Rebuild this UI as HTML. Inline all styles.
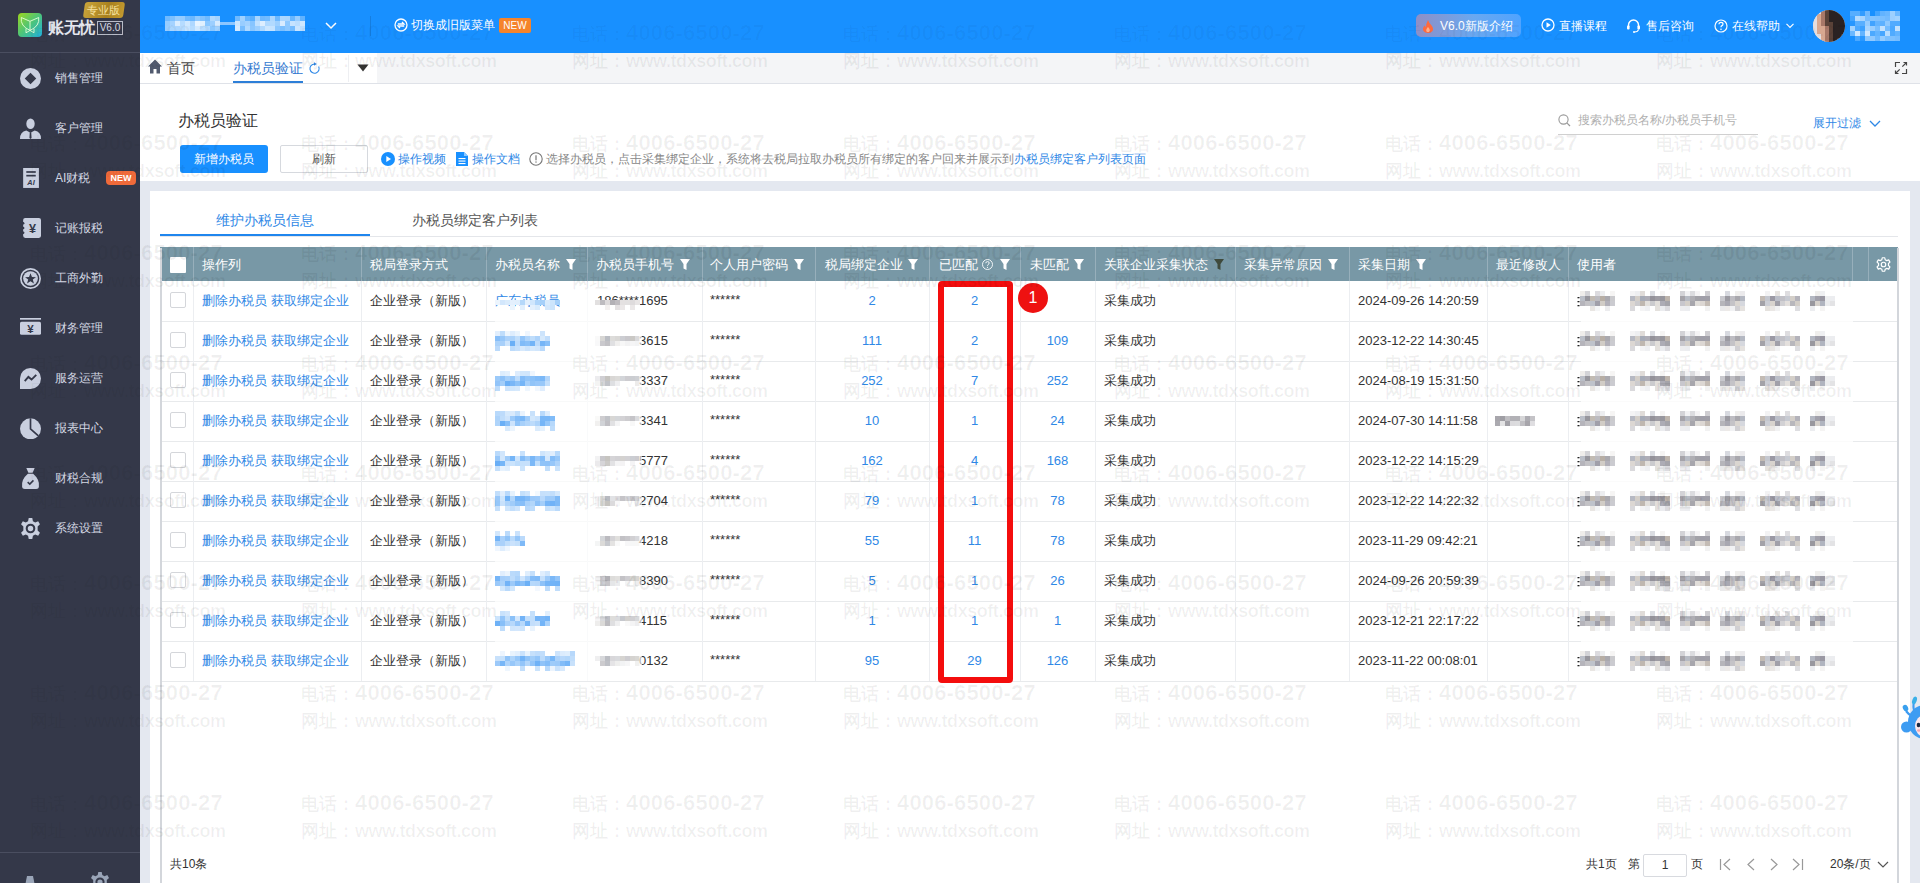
<!DOCTYPE html><html><head><meta charset="utf-8"><style>
*{box-sizing:border-box}
html,body{margin:0;padding:0;width:1920px;height:883px;overflow:hidden;background:#fff;font-family:"Liberation Sans",sans-serif;color:#333}
.ab{position:absolute;white-space:nowrap}
.t12{font-size:12px;line-height:20px}
.t13{font-size:13px;line-height:20px}
.t14{font-size:14px;line-height:20px}
.wm{position:absolute;color:rgba(0,0,0,0.07);font-weight:bold;font-size:18px;line-height:28px;white-space:nowrap;pointer-events:none}
</style></head><body>
<div class="ab" style="left:0;top:0;width:140px;height:883px;background:#343849"></div>
<div class="ab" style="left:0;top:52px;width:140px;height:1px;background:#4a4e60"></div>
<div class="ab" style="left:0;top:852px;width:140px;height:1px;background:#4a4e60"></div>
<svg class="ab" style="left:18px;top:13px" width="24" height="24" viewBox="0 0 24 24">
<defs><linearGradient id="lg" x1="0" y1="0" x2="1" y2="1"><stop offset="0" stop-color="#9ed61c"/><stop offset="0.5" stop-color="#4cc47a"/><stop offset="1" stop-color="#1fb0e0"/></linearGradient></defs>
<rect x="0" y="0" width="24" height="24" rx="4" fill="url(#lg)"/>
<path d="M3.3 4.5 L12 8.3 L20.7 4.5 Q22 13 12 17.4 Q2 13 3.3 4.5 Z M12 8.3 V17.4 M8 15.5 L8 19.8 L12 17.4 L16 19.8 L16 15.5" fill="none" stroke="#e6ffd8" stroke-width="0.9" stroke-linejoin="round"/>
</svg>
<div class="ab" style="left:48px;top:17px;font-size:16px;line-height:22px;color:#e4e6ee;letter-spacing:-0.5px;font-weight:bold">账无忧</div>
<div class="ab" style="left:97px;top:21px;width:26px;height:14px;border:1px solid #b8bcc8;font-size:10px;line-height:12px;color:#d8dbe4;text-align:center">V6.0</div>
<div class="ab" style="left:84px;top:2px;width:40px;height:16px;background:linear-gradient(100deg,#c9a43a,#a8801e 60%,#c49b30);border-radius:3px;transform:skewX(-8deg)"></div>
<div class="ab" style="left:86px;top:2px;width:34px;font-size:11px;line-height:16px;color:#f6e2a0;text-align:center">专业版</div>
<svg class="ab" style="left:20px;top:68px" width="21" height="21" viewBox="0 0 20 20"><circle cx="10" cy="10" r="10" fill="#c9cfdf"/><path d="M10 4.5 L15.5 10 L10 15.5 L4.5 10Z" fill="#343849"/></svg>
<div class="ab t12" style="left:55px;top:68px;color:#d4d8e4">销售管理</div>
<svg class="ab" style="left:20px;top:118px" width="21" height="21" viewBox="0 0 20 20"><ellipse cx="10" cy="5.5" rx="4" ry="5" fill="#c9cfdf"/><path d="M0 20 Q0 13 6 12 L10 14 L14 12 Q20 13 20 20 Z" fill="#c9cfdf"/><path d="M9.3 13.5 L10.7 13.5 L11 19 L10 20 L9 19Z" fill="#343849"/></svg>
<div class="ab t12" style="left:55px;top:118px;color:#d4d8e4">客户管理</div>
<svg class="ab" style="left:20px;top:168px" width="21" height="21" viewBox="0 0 20 20"><rect x="3" y="0" width="15" height="19" fill="#c9cfdf"/><rect x="6" y="3" width="9" height="1.6" fill="#343849"/><rect x="6" y="6.5" width="9" height="1.6" fill="#343849"/><text x="10.5" y="16" font-size="7" font-weight="bold" font-style="italic" text-anchor="middle" fill="#343849" font-family="Liberation Sans">AI</text></svg>
<div class="ab t12" style="left:55px;top:168px;color:#d4d8e4">AI财税</div>
<svg class="ab" style="left:20px;top:218px" width="21" height="21" viewBox="0 0 20 20"><rect x="3" y="0" width="17" height="19" rx="2" fill="#c9cfdf"/><circle cx="3" cy="5" r="1.2" fill="#343849"/><circle cx="3" cy="9.5" r="1.2" fill="#343849"/><circle cx="3" cy="14" r="1.2" fill="#343849"/><text x="12" y="14.5" font-size="12" font-weight="bold" text-anchor="middle" fill="#343849" font-family="Liberation Sans">¥</text></svg>
<div class="ab t12" style="left:55px;top:218px;color:#d4d8e4">记账报税</div>
<svg class="ab" style="left:20px;top:268px" width="21" height="21" viewBox="0 0 20 20"><circle cx="10" cy="10" r="9.2" fill="none" stroke="#c9cfdf" stroke-width="1.6"/><circle cx="10" cy="10" r="7" fill="#c9cfdf"/><path d="M10 5 L11.4 8.6 L15.2 8.7 L12.2 11 L13.3 14.8 L10 12.6 L6.7 14.8 L7.8 11 L4.8 8.7 L8.6 8.6Z" fill="#343849"/></svg>
<div class="ab t12" style="left:55px;top:268px;color:#d4d8e4">工商外勤</div>
<svg class="ab" style="left:20px;top:318px" width="21" height="21" viewBox="0 0 20 20"><rect x="0" y="0" width="20" height="1.6" fill="#c9cfdf"/><rect x="0" y="3.5" width="20" height="12.5" rx="1.5" fill="#c9cfdf"/><text x="10" y="14" font-size="11" font-weight="bold" text-anchor="middle" fill="#343849" font-family="Liberation Sans">¥</text></svg>
<div class="ab t12" style="left:55px;top:318px;color:#d4d8e4">财务管理</div>
<svg class="ab" style="left:20px;top:368px" width="21" height="21" viewBox="0 0 20 20"><path d="M10 0 A10 10 0 1 1 10 20 L0 20 L0 10 A10 10 0 0 1 10 0Z" fill="#c9cfdf"/><path d="M4.5 12.5 L8 8.5 L11 11 L15.5 6.5" fill="none" stroke="#343849" stroke-width="1.8"/></svg>
<div class="ab t12" style="left:55px;top:368px;color:#d4d8e4">服务运营</div>
<svg class="ab" style="left:20px;top:418px" width="21" height="21" viewBox="0 0 20 20"><circle cx="10" cy="10.3" r="10" fill="#c9cfdf"/><path d="M10 0.3 V10.3 L17.5 17" fill="none" stroke="#343849" stroke-width="1.6"/></svg>
<div class="ab t12" style="left:55px;top:418px;color:#d4d8e4">报表中心</div>
<svg class="ab" style="left:20px;top:468px" width="21" height="21" viewBox="0 0 20 20"><path d="M6 0 H14 L12 4.5 H8 Z" fill="#c9cfdf"/><path d="M7.5 5.5 H12.5 Q19 11 18 18 Q17.8 20 15.5 20 H4.5 Q2.2 20 2 18 Q1 11 7.5 5.5Z" fill="#c9cfdf"/><path d="M7.3 13.5 L9.3 15.3 L12.8 11.8" fill="none" stroke="#343849" stroke-width="1.5"/></svg>
<div class="ab t12" style="left:55px;top:468px;color:#d4d8e4">财税合规</div>
<svg class="ab" style="left:20px;top:518px" width="21" height="21" viewBox="0 0 20 20"><path d="M8.3 0 H11.7 L12.3 3 L14.5 4.2 L17.3 3.1 L19 6 L16.8 8 V12 L19 14 L17.3 16.9 L14.5 15.8 L12.3 17 L11.7 20 H8.3 L7.7 17 L5.5 15.8 L2.7 16.9 L1 14 L3.2 12 V8 L1 6 L2.7 3.1 L5.5 4.2 L7.7 3Z" fill="#c9cfdf"/><circle cx="10" cy="10" r="3.6" fill="none" stroke="#343849" stroke-width="2"/></svg>
<div class="ab t12" style="left:55px;top:518px;color:#d4d8e4">系统设置</div>
<div class="ab" style="left:106px;top:171px;width:30px;height:14px;background:#ef6a3a;border-radius:4px;color:#fff;font-size:9px;line-height:14px;font-weight:bold;text-align:center">NEW</div>
<svg class="ab" style="left:22px;top:874px" width="16" height="12" viewBox="0 0 16 12"><path d="M5 2 H11 L13 12 H3Z" fill="#9aa5b8"/></svg>
<svg class="ab" style="left:90px;top:872px" width="20" height="20" viewBox="0 0 20 20"><path d="M8.3 0 H11.7 L12.3 3 L14.5 4.2 L17.3 3.1 L19 6 L16.8 8 V12 L19 14 L17.3 16.9 L14.5 15.8 L12.3 17 L11.7 20 H8.3 L7.7 17 L5.5 15.8 L2.7 16.9 L1 14 L3.2 12 V8 L1 6 L2.7 3.1 L5.5 4.2 L7.7 3Z" fill="#9aa5b8"/><circle cx="10" cy="10" r="3.6" fill="none" stroke="#343849" stroke-width="2"/></svg>
<div class="ab" style="left:140px;top:0;width:1780px;height:53px;background:#1890ff"></div>
<svg class="ab" style="left:165px;top:16px" width="55" height="15" shape-rendering="crispEdges"><rect x="0" y="0" width="5" height="5" fill="#70baff"/><rect x="5" y="0" width="5" height="5" fill="#7ec1ff"/><rect x="10" y="0" width="5" height="5" fill="#98cdff"/><rect x="15" y="0" width="5" height="5" fill="#96ccff"/><rect x="20" y="0" width="5" height="5" fill="#73bbff"/><rect x="25" y="0" width="5" height="5" fill="#6cb8ff"/><rect x="30" y="0" width="5" height="5" fill="#8fc9ff"/><rect x="35" y="0" width="5" height="5" fill="#81c2ff"/><rect x="40" y="0" width="5" height="5" fill="#70baff"/><rect x="45" y="0" width="5" height="5" fill="#b0d9ff"/><rect x="50" y="0" width="5" height="5" fill="#a4d3ff"/><rect x="0" y="5" width="5" height="5" fill="#97cdff"/><rect x="5" y="5" width="5" height="5" fill="#a5d3ff"/><rect x="10" y="5" width="5" height="5" fill="#daedff"/><rect x="15" y="5" width="5" height="5" fill="#b6dcff"/><rect x="20" y="5" width="5" height="5" fill="#cfe8ff"/><rect x="25" y="5" width="5" height="5" fill="#afd8ff"/><rect x="30" y="5" width="5" height="5" fill="#e8f4ff"/><rect x="35" y="5" width="5" height="5" fill="#e0f0ff"/><rect x="40" y="5" width="5" height="5" fill="#8ac7ff"/><rect x="45" y="5" width="5" height="5" fill="#9ccfff"/><rect x="50" y="5" width="5" height="5" fill="#d6ebff"/><rect x="0" y="10" width="5" height="5" fill="#9aceff"/><rect x="5" y="10" width="5" height="5" fill="#aad6ff"/><rect x="10" y="10" width="5" height="5" fill="#abd6ff"/><rect x="15" y="10" width="5" height="5" fill="#b5dbff"/><rect x="20" y="10" width="5" height="5" fill="#c6e4ff"/><rect x="25" y="10" width="5" height="5" fill="#b6dcff"/><rect x="30" y="10" width="5" height="5" fill="#d1e9ff"/><rect x="35" y="10" width="5" height="5" fill="#b8ddff"/><rect x="40" y="10" width="5" height="5" fill="#b0d9ff"/><rect x="45" y="10" width="5" height="5" fill="#8cc8ff"/><rect x="50" y="10" width="5" height="5" fill="#a0d1ff"/></svg>
<div class="ab" style="left:220px;top:22px;width:15px;height:3px;background:#8cc6ff"></div>
<svg class="ab" style="left:235px;top:16px" width="70" height="15" shape-rendering="crispEdges"><rect x="0" y="0" width="5" height="5" fill="#70baff"/><rect x="5" y="0" width="5" height="5" fill="#a1d2ff"/><rect x="10" y="0" width="5" height="5" fill="#68b6ff"/><rect x="15" y="0" width="5" height="5" fill="#5ab0ff"/><rect x="20" y="0" width="5" height="5" fill="#aad6ff"/><rect x="25" y="0" width="5" height="5" fill="#6fb9ff"/><rect x="30" y="0" width="5" height="5" fill="#74bcff"/><rect x="35" y="0" width="5" height="5" fill="#acd7ff"/><rect x="40" y="0" width="5" height="5" fill="#6eb9ff"/><rect x="45" y="0" width="5" height="5" fill="#acd7ff"/><rect x="50" y="0" width="5" height="5" fill="#aad6ff"/><rect x="55" y="0" width="5" height="5" fill="#69b7ff"/><rect x="60" y="0" width="5" height="5" fill="#98cdff"/><rect x="65" y="0" width="5" height="5" fill="#61b3ff"/><rect x="0" y="5" width="5" height="5" fill="#cbe6ff"/><rect x="5" y="5" width="5" height="5" fill="#98cdff"/><rect x="10" y="5" width="5" height="5" fill="#a3d2ff"/><rect x="15" y="5" width="5" height="5" fill="#87c5ff"/><rect x="20" y="5" width="5" height="5" fill="#c1e1ff"/><rect x="25" y="5" width="5" height="5" fill="#ddeeff"/><rect x="30" y="5" width="5" height="5" fill="#b0d9ff"/><rect x="35" y="5" width="5" height="5" fill="#b2daff"/><rect x="40" y="5" width="5" height="5" fill="#9ed0ff"/><rect x="45" y="5" width="5" height="5" fill="#d9ecff"/><rect x="50" y="5" width="5" height="5" fill="#8fc9ff"/><rect x="55" y="5" width="5" height="5" fill="#c6e3ff"/><rect x="60" y="5" width="5" height="5" fill="#bbdeff"/><rect x="65" y="5" width="5" height="5" fill="#cee7ff"/><rect x="0" y="10" width="5" height="5" fill="#d5eaff"/><rect x="5" y="10" width="5" height="5" fill="#76bdff"/><rect x="10" y="10" width="5" height="5" fill="#b0d9ff"/><rect x="15" y="10" width="5" height="5" fill="#8bc7ff"/><rect x="20" y="10" width="5" height="5" fill="#9ccfff"/><rect x="25" y="10" width="5" height="5" fill="#b0d9ff"/><rect x="30" y="10" width="5" height="5" fill="#cbe6ff"/><rect x="35" y="10" width="5" height="5" fill="#c5e3ff"/><rect x="40" y="10" width="5" height="5" fill="#8bc7ff"/><rect x="45" y="10" width="5" height="5" fill="#7cc0ff"/><rect x="50" y="10" width="5" height="5" fill="#8dc8ff"/><rect x="55" y="10" width="5" height="5" fill="#74bcff"/><rect x="60" y="10" width="5" height="5" fill="#cae5ff"/><rect x="65" y="10" width="5" height="5" fill="#badeff"/></svg>
<svg class="ab" style="left:325px;top:22px" width="12" height="8" viewBox="0 0 12 8"><path d="M1 1 L6 6 L11 1" fill="none" stroke="#fff" stroke-width="1.5"/></svg>
<div class="ab" style="left:370px;top:16px;width:1px;height:20px;background:rgba(0,0,0,0.12)"></div>
<svg class="ab" style="left:394px;top:18px" width="14" height="14" viewBox="0 0 14 14"><circle cx="7" cy="7" r="6" fill="none" stroke="#fff" stroke-width="1.3"/><path d="M3.8 6 H10 L8 4 M10.2 8 H4 L6 10" fill="none" stroke="#fff" stroke-width="1.3"/></svg>
<div class="ab t12" style="left:411px;top:15px;color:#fff">切换成旧版菜单</div>
<div class="ab" style="left:499px;top:18px;width:32px;height:15px;background:#f5842b;border-radius:2px;color:#fff;font-size:10px;line-height:15px;text-align:center">NEW</div>
<div class="ab" style="left:1416px;top:14px;width:105px;height:23px;border-radius:5px;background:linear-gradient(90deg,#8e8fc6,#6aa8f0 55%,#4fa3ff)"></div>
<svg class="ab" style="left:1422px;top:20px" width="12" height="13" viewBox="0 0 12 13"><path d="M6 0 Q7 3 9.5 5.5 Q12 8.5 10.5 11 Q9 13 6 13 Q3 13 1.5 11 Q0 8.5 2.5 5.5 Q3.5 6.5 4 7.5 Q4 3.5 6 0Z" fill="#ff6a3d"/><path d="M6 7 Q8.5 9.5 7.5 11.5 Q6 12.5 4.5 11.5 Q3.5 9.5 6 7Z" fill="#ffb08a"/></svg>
<div class="ab t12" style="left:1440px;top:16px;color:#fff">V6.0新版介绍</div>
<svg class="ab" style="left:1541px;top:18px" width="14" height="14" viewBox="0 0 14 14"><circle cx="7" cy="7" r="6" fill="none" stroke="#fff" stroke-width="1.3"/><path d="M5.5 4.3 L9.8 7 L5.5 9.7Z" fill="#fff"/></svg>
<div class="ab t12" style="left:1559px;top:16px;color:#fff">直播课程</div>
<svg class="ab" style="left:1626px;top:19px" width="15" height="14" viewBox="0 0 15 14"><path d="M2.5 8 V6 A5 5 0 0 1 12.5 6 V8" fill="none" stroke="#fff" stroke-width="1.4"/><rect x="1" y="6.5" width="2.6" height="4" rx="1" fill="#fff"/><rect x="11.4" y="6.5" width="2.6" height="4" rx="1" fill="#fff"/><path d="M12.5 10.5 Q12 13 8.5 13" fill="none" stroke="#fff" stroke-width="1.2"/><circle cx="8" cy="13" r="1" fill="#fff"/></svg>
<div class="ab t12" style="left:1646px;top:16px;color:#fff">售后咨询</div>
<svg class="ab" style="left:1714px;top:19px" width="14" height="14" viewBox="0 0 14 14"><circle cx="7" cy="7" r="6" fill="none" stroke="#fff" stroke-width="1.2"/><path d="M5 5.3 Q5 3.4 7 3.4 Q9 3.4 9 5.1 Q9 6.3 7.6 6.9 Q7 7.2 7 8.3" fill="none" stroke="#fff" stroke-width="1.2"/><circle cx="7" cy="10.2" r="0.8" fill="#fff"/></svg>
<div class="ab t12" style="left:1732px;top:16px;color:#fff">在线帮助</div>
<svg class="ab" style="left:1786px;top:23px" width="8" height="6" viewBox="0 0 8 6"><path d="M0.5 0.8 L4 4.5 L7.5 0.8" fill="none" stroke="#fff" stroke-width="1.2"/></svg>
<svg class="ab" style="left:1813px;top:10px" width="32" height="32" shape-rendering="crispEdges"><defs><clipPath id="avc"><circle cx="16" cy="16" r="16"/></clipPath></defs><g clip-path="url(#avc)"><rect width="32" height="32" fill="#e6e2e2"/><rect x="0" y="0" width="4" height="4" fill="#e6dede"/><rect x="4" y="0" width="4" height="4" fill="#e6dede"/><rect x="8" y="0" width="4" height="4" fill="#a87868"/><rect x="12" y="0" width="4" height="4" fill="#5a4238"/><rect x="16" y="0" width="4" height="4" fill="#2a2222"/><rect x="20" y="0" width="4" height="4" fill="#2a2222"/><rect x="24" y="0" width="4" height="4" fill="#2a2222"/><rect x="28" y="0" width="4" height="4" fill="#2a2222"/><rect x="0" y="4" width="4" height="4" fill="#e6dede"/><rect x="4" y="4" width="4" height="4" fill="#d8a890"/><rect x="8" y="4" width="4" height="4" fill="#a87868"/><rect x="12" y="4" width="4" height="4" fill="#5a4238"/><rect x="16" y="4" width="4" height="4" fill="#2a2222"/><rect x="20" y="4" width="4" height="4" fill="#2a2222"/><rect x="24" y="4" width="4" height="4" fill="#2a2222"/><rect x="28" y="4" width="4" height="4" fill="#2a2222"/><rect x="0" y="8" width="4" height="4" fill="#e6dede"/><rect x="4" y="8" width="4" height="4" fill="#d8a890"/><rect x="8" y="8" width="4" height="4" fill="#a87868"/><rect x="12" y="8" width="4" height="4" fill="#5a4238"/><rect x="16" y="8" width="4" height="4" fill="#2a2222"/><rect x="20" y="8" width="4" height="4" fill="#2a2222"/><rect x="24" y="8" width="4" height="4" fill="#2a2222"/><rect x="28" y="8" width="4" height="4" fill="#2a2222"/><rect x="0" y="12" width="4" height="4" fill="#e6dede"/><rect x="4" y="12" width="4" height="4" fill="#d8a890"/><rect x="8" y="12" width="4" height="4" fill="#a87868"/><rect x="12" y="12" width="4" height="4" fill="#5a4238"/><rect x="16" y="12" width="4" height="4" fill="#5a4238"/><rect x="20" y="12" width="4" height="4" fill="#2a2222"/><rect x="24" y="12" width="4" height="4" fill="#2a2222"/><rect x="28" y="12" width="4" height="4" fill="#2a2222"/><rect x="0" y="16" width="4" height="4" fill="#e6dede"/><rect x="4" y="16" width="4" height="4" fill="#d8a890"/><rect x="8" y="16" width="4" height="4" fill="#d8a890"/><rect x="12" y="16" width="4" height="4" fill="#a87868"/><rect x="16" y="16" width="4" height="4" fill="#5a4238"/><rect x="20" y="16" width="4" height="4" fill="#2a2222"/><rect x="24" y="16" width="4" height="4" fill="#2a2222"/><rect x="28" y="16" width="4" height="4" fill="#2a2222"/><rect x="0" y="20" width="4" height="4" fill="#e6dede"/><rect x="4" y="20" width="4" height="4" fill="#d8a890"/><rect x="8" y="20" width="4" height="4" fill="#d8a890"/><rect x="12" y="20" width="4" height="4" fill="#a87868"/><rect x="16" y="20" width="4" height="4" fill="#5a4238"/><rect x="20" y="20" width="4" height="4" fill="#2a2222"/><rect x="24" y="20" width="4" height="4" fill="#2a2222"/><rect x="28" y="20" width="4" height="4" fill="#2a2222"/><rect x="0" y="24" width="4" height="4" fill="#e6dede"/><rect x="4" y="24" width="4" height="4" fill="#e6dede"/><rect x="8" y="24" width="4" height="4" fill="#d8a890"/><rect x="12" y="24" width="4" height="4" fill="#a87868"/><rect x="16" y="24" width="4" height="4" fill="#5a4238"/><rect x="20" y="24" width="4" height="4" fill="#2a2222"/><rect x="24" y="24" width="4" height="4" fill="#2a2222"/><rect x="28" y="24" width="4" height="4" fill="#3c3434"/><rect x="0" y="28" width="4" height="4" fill="#e6dede"/><rect x="4" y="28" width="4" height="4" fill="#e6dede"/><rect x="8" y="28" width="4" height="4" fill="#d8a890"/><rect x="12" y="28" width="4" height="4" fill="#a87868"/><rect x="16" y="28" width="4" height="4" fill="#5a4238"/><rect x="20" y="28" width="4" height="4" fill="#2a2222"/><rect x="24" y="28" width="4" height="4" fill="#3c3434"/><rect x="28" y="28" width="4" height="4" fill="#3c3434"/></g></svg>
<svg class="ab" style="left:1850px;top:11px" width="50" height="30" shape-rendering="crispEdges"><rect x="0" y="0" width="5" height="5" fill="#56aeff"/><rect x="5" y="0" width="5" height="5" fill="#56aeff"/><rect x="10" y="0" width="5" height="5" fill="#319cff"/><rect x="15" y="0" width="5" height="5" fill="#6fb9ff"/><rect x="25" y="0" width="5" height="5" fill="#42a4ff"/><rect x="30" y="0" width="5" height="5" fill="#62b3ff"/><rect x="35" y="0" width="5" height="5" fill="#6ab7ff"/><rect x="40" y="0" width="5" height="5" fill="#9dd0ff"/><rect x="45" y="0" width="5" height="5" fill="#6eb9ff"/><rect x="0" y="5" width="5" height="5" fill="#42a4ff"/><rect x="5" y="5" width="5" height="5" fill="#b4dbff"/><rect x="10" y="5" width="5" height="5" fill="#a6d4ff"/><rect x="15" y="5" width="5" height="5" fill="#77bdff"/><rect x="20" y="5" width="5" height="5" fill="#82c3ff"/><rect x="25" y="5" width="5" height="5" fill="#7fc1ff"/><rect x="30" y="5" width="5" height="5" fill="#7abfff"/><rect x="35" y="5" width="5" height="5" fill="#73bbff"/><rect x="40" y="5" width="5" height="5" fill="#9ccfff"/><rect x="45" y="5" width="5" height="5" fill="#a3d3ff"/><rect x="0" y="10" width="5" height="5" fill="#2797ff"/><rect x="5" y="10" width="5" height="5" fill="#5bb0ff"/><rect x="10" y="10" width="5" height="5" fill="#59afff"/><rect x="15" y="10" width="5" height="5" fill="#98cdff"/><rect x="20" y="10" width="5" height="5" fill="#41a3ff"/><rect x="25" y="10" width="5" height="5" fill="#64b4ff"/><rect x="30" y="10" width="5" height="5" fill="#5db1ff"/><rect x="35" y="10" width="5" height="5" fill="#8fc9ff"/><rect x="40" y="10" width="5" height="5" fill="#52abff"/><rect x="45" y="10" width="5" height="5" fill="#51abff"/><rect x="0" y="15" width="5" height="5" fill="#a3d3ff"/><rect x="5" y="15" width="5" height="5" fill="#4da9ff"/><rect x="10" y="15" width="5" height="5" fill="#3ca1ff"/><rect x="15" y="15" width="5" height="5" fill="#a9d5ff"/><rect x="20" y="15" width="5" height="5" fill="#99ceff"/><rect x="25" y="15" width="5" height="5" fill="#78beff"/><rect x="30" y="15" width="5" height="5" fill="#c3e2ff"/><rect x="35" y="15" width="5" height="5" fill="#74bcff"/><rect x="40" y="15" width="5" height="5" fill="#4aa8ff"/><rect x="45" y="15" width="5" height="5" fill="#c3e2ff"/><rect x="0" y="20" width="5" height="5" fill="#6bb8ff"/><rect x="5" y="20" width="5" height="5" fill="#d0e8ff"/><rect x="10" y="20" width="5" height="5" fill="#63b4ff"/><rect x="15" y="20" width="5" height="5" fill="#d0e8ff"/><rect x="20" y="20" width="5" height="5" fill="#4ca9ff"/><rect x="25" y="20" width="5" height="5" fill="#63b4ff"/><rect x="30" y="20" width="5" height="5" fill="#47a6ff"/><rect x="35" y="20" width="5" height="5" fill="#b9ddff"/><rect x="40" y="20" width="5" height="5" fill="#50abff"/><rect x="45" y="20" width="5" height="5" fill="#63b4ff"/><rect x="5" y="25" width="5" height="5" fill="#4ba8ff"/><rect x="10" y="25" width="5" height="5" fill="#2998ff"/><rect x="15" y="25" width="5" height="5" fill="#8bc7ff"/><rect x="20" y="25" width="5" height="5" fill="#90c9ff"/><rect x="25" y="25" width="5" height="5" fill="#6eb9ff"/><rect x="30" y="25" width="5" height="5" fill="#95ccff"/><rect x="35" y="25" width="5" height="5" fill="#7cc0ff"/><rect x="40" y="25" width="5" height="5" fill="#7ec1ff"/><rect x="45" y="25" width="5" height="5" fill="#77bdff"/></svg>
<div class="ab" style="left:140px;top:53px;width:1780px;height:31px;background:#f4f5f7"></div>
<div class="ab" style="left:140px;top:53px;width:237px;height:30px;background:#fff"></div>
<div class="ab" style="left:348px;top:55px;width:1px;height:27px;background:#eeeff2"></div>
<div class="ab" style="left:140px;top:83px;width:1780px;height:1px;background:#dfe2e8"></div>
<svg class="ab" style="left:148px;top:59px" width="14" height="15" viewBox="0 0 14 15"><path d="M7 0.5 L14 7.5 H12 V14.5 H8.5 V10 H5.5 V14.5 H2 V7.5 H0Z" fill="#515a6e"/></svg>
<div class="ab t14" style="left:167px;top:58px;color:#444">首页</div>
<div class="ab t14" style="left:233px;top:58px;color:#3479d0">办税员验证</div>
<div class="ab" style="left:233px;top:81px;width:70px;height:2px;background:#2d7fd8"></div>
<svg class="ab" style="left:308px;top:62px" width="13" height="13" viewBox="0 0 13 13"><path d="M6.5 2 A4.6 4.6 0 1 0 10.6 4.4" fill="none" stroke="#2f88e6" stroke-width="1.1"/><path d="M6 0.2 L8.8 2 L6 3.8Z" fill="#2f88e6"/></svg>
<svg class="ab" style="left:357px;top:64px" width="12" height="8" viewBox="0 0 12 8"><path d="M0.5 0.5 H11.5 L6 7.5Z" fill="#333"/></svg>
<svg class="ab" style="left:1894px;top:61px" width="14" height="14" viewBox="0 0 14 14"><path d="M1.5 6 V1.5 H6 M12.5 8 V12.5 H8 M8.3 5.7 L12.5 1.5 M9.5 1.5 H12.5 V4.5 M5.7 8.3 L1.5 12.5 M1.5 9.5 V12.5 H4.5" fill="none" stroke="#444" stroke-width="1.2"/></svg>
<div class="ab" style="left:178px;top:110px;font-size:16px;line-height:22px;color:#333">办税员验证</div>
<div class="ab" style="left:180px;top:145px;width:88px;height:28px;background:#1890ff;border-radius:3px;color:#fff;font-size:12px;line-height:28px;text-align:center">新增办税员</div>
<div class="ab" style="left:280px;top:145px;width:88px;height:28px;border:1px solid #d6d9de;border-radius:2px;background:#fff;color:#555;font-size:12px;line-height:26px;text-align:center">刷新</div>
<svg class="ab" style="left:381px;top:152px" width="14" height="14" viewBox="0 0 14 14"><circle cx="7" cy="7" r="7" fill="#1890ff"/><path d="M5.3 4 L10 7 L5.3 10Z" fill="#fff"/></svg>
<div class="ab t12" style="left:398px;top:149px;color:#2f88e6">操作视频</div>
<svg class="ab" style="left:456px;top:152px" width="12" height="14" viewBox="0 0 12 14"><path d="M0 0 H8 L12 4 V14 H0Z" fill="#1890ff"/><path d="M8 0 V4 H12" fill="#8cc8ff"/><rect x="2.5" y="6" width="7" height="1.1" fill="#fff"/><rect x="2.5" y="8.5" width="7" height="1.1" fill="#fff"/><rect x="2.5" y="11" width="7" height="1.1" fill="#fff"/></svg>
<div class="ab t12" style="left:472px;top:149px;color:#2f88e6">操作文档</div>
<svg class="ab" style="left:529px;top:152px" width="14" height="14" viewBox="0 0 14 14"><circle cx="7" cy="7" r="6.2" fill="none" stroke="#777" stroke-width="1.1"/><rect x="6.4" y="3.3" width="1.2" height="5" fill="#777"/><rect x="6.4" y="9.4" width="1.2" height="1.3" fill="#777"/></svg>
<div class="ab t12" style="left:546px;top:149px;color:#888">选择办税员，点击采集绑定企业，系统将去税局拉取办税员所有绑定的客户回来并展示到<span style="color:#2f88e6">办税员绑定客户列表页面</span></div>
<svg class="ab" style="left:1558px;top:114px" width="13" height="13" viewBox="0 0 13 13"><circle cx="5.5" cy="5.5" r="4.6" fill="none" stroke="#999" stroke-width="1.1"/><path d="M8.8 8.8 L12 12" stroke="#999" stroke-width="1.2"/></svg>
<div class="ab t12" style="left:1578px;top:110px;color:#b0b0b0">搜索办税员名称/办税员手机号</div>
<div class="ab" style="left:1558px;top:134px;width:200px;height:1px;background:#d0d0d0"></div>
<div class="ab t12" style="left:1813px;top:113px;color:#2f88e6">展开过滤</div>
<svg class="ab" style="left:1869px;top:120px" width="12" height="8" viewBox="0 0 12 8"><path d="M1 1 L6 6 L11 1" fill="none" stroke="#2f88e6" stroke-width="1.3"/></svg>
<div class="ab" style="left:140px;top:181px;width:1780px;height:702px;background:#e4e8f0"></div>
<div class="ab" style="left:150px;top:191px;width:1760px;height:692px;background:#fff"></div>
<div class="ab t14" style="left:160px;top:210px;width:210px;text-align:center;color:#2f88e6">维护办税员信息</div>
<div class="ab t14" style="left:370px;top:210px;width:210px;text-align:center;color:#555">办税员绑定客户列表</div>
<div class="ab" style="left:160px;top:236px;width:1738px;height:1px;background:#e4e6ea"></div>
<div class="ab" style="left:160px;top:234px;width:210px;height:2px;background:#1f86ee"></div>
<div class="ab" style="left:160px;top:247px;width:1738px;height:34px;background:#7898a6"></div>
<div class="ab" style="left:193px;top:247px;width:1px;height:34px;background:#97afbb"></div>
<div class="ab" style="left:361px;top:247px;width:1px;height:34px;background:#97afbb"></div>
<div class="ab" style="left:486px;top:247px;width:1px;height:34px;background:#97afbb"></div>
<div class="ab" style="left:587px;top:247px;width:1px;height:34px;background:#97afbb"></div>
<div class="ab" style="left:702px;top:247px;width:1px;height:34px;background:#97afbb"></div>
<div class="ab" style="left:815px;top:247px;width:1px;height:34px;background:#97afbb"></div>
<div class="ab" style="left:929px;top:247px;width:1px;height:34px;background:#97afbb"></div>
<div class="ab" style="left:1020px;top:247px;width:1px;height:34px;background:#97afbb"></div>
<div class="ab" style="left:1095px;top:247px;width:1px;height:34px;background:#97afbb"></div>
<div class="ab" style="left:1235px;top:247px;width:1px;height:34px;background:#97afbb"></div>
<div class="ab" style="left:1349px;top:247px;width:1px;height:34px;background:#97afbb"></div>
<div class="ab" style="left:1487px;top:247px;width:1px;height:34px;background:#97afbb"></div>
<div class="ab" style="left:1568px;top:247px;width:1px;height:34px;background:#97afbb"></div>
<div class="ab" style="left:1852px;top:247px;width:1px;height:34px;background:#97afbb"></div>
<div class="ab" style="left:1868px;top:247px;width:1px;height:34px;background:#97afbb"></div>
<div class="ab" style="left:160px;top:321px;width:1738px;height:1px;background:#e8eaec"></div>
<div class="ab" style="left:160px;top:361px;width:1738px;height:1px;background:#e8eaec"></div>
<div class="ab" style="left:160px;top:401px;width:1738px;height:1px;background:#e8eaec"></div>
<div class="ab" style="left:160px;top:441px;width:1738px;height:1px;background:#e8eaec"></div>
<div class="ab" style="left:160px;top:481px;width:1738px;height:1px;background:#e8eaec"></div>
<div class="ab" style="left:160px;top:521px;width:1738px;height:1px;background:#e8eaec"></div>
<div class="ab" style="left:160px;top:561px;width:1738px;height:1px;background:#e8eaec"></div>
<div class="ab" style="left:160px;top:601px;width:1738px;height:1px;background:#e8eaec"></div>
<div class="ab" style="left:160px;top:641px;width:1738px;height:1px;background:#e8eaec"></div>
<div class="ab" style="left:160px;top:681px;width:1738px;height:1px;background:#e8eaec"></div>
<div class="ab" style="left:193px;top:281px;width:1px;height:400px;background:#eceef1"></div>
<div class="ab" style="left:361px;top:281px;width:1px;height:400px;background:#eceef1"></div>
<div class="ab" style="left:486px;top:281px;width:1px;height:400px;background:#eceef1"></div>
<div class="ab" style="left:587px;top:281px;width:1px;height:400px;background:#eceef1"></div>
<div class="ab" style="left:702px;top:281px;width:1px;height:400px;background:#eceef1"></div>
<div class="ab" style="left:815px;top:281px;width:1px;height:400px;background:#eceef1"></div>
<div class="ab" style="left:929px;top:281px;width:1px;height:400px;background:#eceef1"></div>
<div class="ab" style="left:1020px;top:281px;width:1px;height:400px;background:#eceef1"></div>
<div class="ab" style="left:1095px;top:281px;width:1px;height:400px;background:#eceef1"></div>
<div class="ab" style="left:1235px;top:281px;width:1px;height:400px;background:#eceef1"></div>
<div class="ab" style="left:1349px;top:281px;width:1px;height:400px;background:#eceef1"></div>
<div class="ab" style="left:1487px;top:281px;width:1px;height:400px;background:#eceef1"></div>
<div class="ab" style="left:1568px;top:281px;width:1px;height:400px;background:#eceef1"></div>
<div class="ab" style="left:495px;top:282px;width:145px;height:399px;background:rgba(255,255,255,0.7)"></div>
<div class="ab" style="left:1581px;top:282px;width:272px;height:399px;background:rgba(255,255,255,0.8)"></div>
<div class="ab" style="left:160px;top:248px;width:2px;height:635px;background:#d3d6db"></div>
<div class="ab" style="left:1897px;top:248px;width:2px;height:635px;background:#d3d6db"></div>
<div class="ab t13" style="left:202px;top:255px;color:#fff">操作列</div>
<div class="ab t13" style="left:370px;top:255px;color:#fff">税局登录方式</div>
<div class="ab t13" style="left:495px;top:255px;color:#fff">办税员名称</div>
<svg class="ab" style="left:566px;top:259px" width="10" height="11" viewBox="0 0 10 11"><path d="M0 0 H10 L6.5 5 V11 L3.5 9.5 V5Z" fill="#fff"/></svg>
<div class="ab t13" style="left:596px;top:255px;color:#fff">办税员手机号</div>
<svg class="ab" style="left:680px;top:259px" width="10" height="11" viewBox="0 0 10 11"><path d="M0 0 H10 L6.5 5 V11 L3.5 9.5 V5Z" fill="#fff"/></svg>
<div class="ab t13" style="left:710px;top:255px;color:#fff">个人用户密码</div>
<svg class="ab" style="left:794px;top:259px" width="10" height="11" viewBox="0 0 10 11"><path d="M0 0 H10 L6.5 5 V11 L3.5 9.5 V5Z" fill="#fff"/></svg>
<div class="ab t13" style="left:825px;top:255px;color:#fff">税局绑定企业</div>
<svg class="ab" style="left:908px;top:259px" width="10" height="11" viewBox="0 0 10 11"><path d="M0 0 H10 L6.5 5 V11 L3.5 9.5 V5Z" fill="#fff"/></svg>
<div class="ab t13" style="left:939px;top:255px;color:#fff">已匹配</div>
<svg class="ab" style="left:1000px;top:259px" width="10" height="11" viewBox="0 0 10 11"><path d="M0 0 H10 L6.5 5 V11 L3.5 9.5 V5Z" fill="#fff"/></svg>
<div class="ab t13" style="left:1030px;top:255px;color:#fff">未匹配</div>
<svg class="ab" style="left:1074px;top:259px" width="10" height="11" viewBox="0 0 10 11"><path d="M0 0 H10 L6.5 5 V11 L3.5 9.5 V5Z" fill="#fff"/></svg>
<div class="ab t13" style="left:1104px;top:255px;color:#fff">关联企业采集状态</div>
<svg class="ab" style="left:1214px;top:259px" width="10" height="11" viewBox="0 0 10 11"><path d="M0 0 H10 L6.5 5 V11 L3.5 9.5 V5Z" fill="#3f4a3c"/></svg>
<div class="ab t13" style="left:1244px;top:255px;color:#fff">采集异常原因</div>
<svg class="ab" style="left:1328px;top:259px" width="10" height="11" viewBox="0 0 10 11"><path d="M0 0 H10 L6.5 5 V11 L3.5 9.5 V5Z" fill="#fff"/></svg>
<div class="ab t13" style="left:1358px;top:255px;color:#fff">采集日期</div>
<svg class="ab" style="left:1416px;top:259px" width="10" height="11" viewBox="0 0 10 11"><path d="M0 0 H10 L6.5 5 V11 L3.5 9.5 V5Z" fill="#fff"/></svg>
<div class="ab t13" style="left:1496px;top:255px;color:#fff">最近修改人</div>
<div class="ab t13" style="left:1577px;top:255px;color:#fff">使用者</div>
<svg class="ab" style="left:982px;top:259px" width="11" height="11" viewBox="0 0 11 11"><circle cx="5.5" cy="5.5" r="5" fill="none" stroke="#fff" stroke-width="0.9"/><path d="M3.8 4.2 Q3.8 2.6 5.5 2.6 Q7.2 2.6 7.2 4 Q7.2 5 6 5.6 Q5.5 5.9 5.5 6.8" fill="none" stroke="#fff" stroke-width="0.9"/><circle cx="5.5" cy="8.3" r="0.6" fill="#fff"/></svg>
<svg class="ab" style="left:1876px;top:257px" width="15" height="15" viewBox="0 0 20 20"><path d="M8.3 1 H11.7 L12.2 3.6 L14.4 4.8 L16.9 3.9 L18.6 6.8 L16.6 8.6 V11.4 L18.6 13.2 L16.9 16.1 L14.4 15.2 L12.2 16.4 L11.7 19 H8.3 L7.8 16.4 L5.6 15.2 L3.1 16.1 L1.4 13.2 L3.4 11.4 V8.6 L1.4 6.8 L3.1 3.9 L5.6 4.8 L7.8 3.6Z" fill="none" stroke="#fff" stroke-width="1.6" stroke-linejoin="round"/><circle cx="10" cy="10" r="3" fill="none" stroke="#fff" stroke-width="1.6"/></svg>
<div class="ab" style="left:170px;top:257px;width:16px;height:16px;background:#fff;border-radius:1px"></div>
<div class="ab" style="left:170px;top:292px;width:16px;height:16px;border:1px solid #d4d6da;border-radius:2px;background:#fff"></div>
<div class="ab t13" style="left:202px;top:291px;color:#2f88e6">删除办税员 获取绑定企业</div>
<div class="ab t13" style="left:370px;top:291px;color:#333">企业登录（新版）</div>
<div class="ab t13" style="left:495px;top:291px;color:#2f88e6;height:17px;overflow:hidden">广东办税员</div>
<svg class="ab" style="left:495px;top:300px" width="65" height="10" shape-rendering="crispEdges"><rect x="0" y="0" width="5" height="5" fill="#edf5fd"/><rect x="5" y="0" width="5" height="5" fill="#d3e7fc"/><rect x="10" y="0" width="5" height="5" fill="#dbecfc"/><rect x="15" y="0" width="5" height="5" fill="#e4f0fd"/><rect x="20" y="0" width="5" height="5" fill="#e1effd"/><rect x="25" y="0" width="5" height="5" fill="#b5d8fa"/><rect x="30" y="0" width="5" height="5" fill="#e3f0fd"/><rect x="35" y="0" width="5" height="5" fill="#d0e6fc"/><rect x="40" y="0" width="5" height="5" fill="#aed4fa"/><rect x="45" y="0" width="5" height="5" fill="#a6d0f9"/><rect x="50" y="0" width="5" height="5" fill="#d9ebfc"/><rect x="55" y="0" width="5" height="5" fill="#cde5fc"/><rect x="60" y="0" width="5" height="5" fill="#a6d0f9"/><rect x="15" y="5" width="5" height="5" fill="#ebf4fd"/><rect x="25" y="5" width="5" height="5" fill="#e1effd"/><rect x="35" y="5" width="5" height="5" fill="#e4f0fd"/><rect x="40" y="5" width="5" height="5" fill="#d9ebfc"/><rect x="50" y="5" width="5" height="5" fill="#d4e8fc"/><rect x="55" y="5" width="5" height="5" fill="#cce4fb"/></svg>
<div class="ab t13" style="left:597px;top:291px;color:#333">186****1695</div>
<svg class="ab" style="left:595px;top:300px" width="45" height="10" shape-rendering="crispEdges"><rect x="0" y="0" width="5" height="5" fill="#e2e0e0"/><rect x="5" y="0" width="5" height="5" fill="#bdbbbf"/><rect x="10" y="0" width="5" height="5" fill="#dddadb"/><rect x="15" y="0" width="5" height="5" fill="#b3b1b6"/><rect x="20" y="0" width="5" height="5" fill="#bfbcc0"/><rect x="25" y="0" width="5" height="5" fill="#e4e1e1"/><rect x="30" y="0" width="5" height="5" fill="#e3e1e1"/><rect x="35" y="0" width="5" height="5" fill="#dedbdc"/><rect x="40" y="0" width="5" height="5" fill="#e8e5e5"/><rect x="10" y="5" width="5" height="5" fill="#f3f0ef"/><rect x="20" y="5" width="5" height="5" fill="#e4e1e2"/><rect x="25" y="5" width="5" height="5" fill="#ebe8e8"/><rect x="35" y="5" width="5" height="5" fill="#ebe8e8"/></svg>
<div class="ab t13" style="left:710px;top:290px;color:#333">******</div>
<div class="ab t13" style="left:815px;top:291px;width:114px;text-align:center;color:#2f88e6">2</div>
<div class="ab t13" style="left:929px;top:291px;width:91px;text-align:center;color:#2f88e6">2</div>
<div class="ab t13" style="left:1104px;top:291px;color:#333">采集成功</div>
<div class="ab t13" style="left:1358px;top:291px;color:#333">2024-09-26 14:20:59</div>
<svg class="ab" style="left:1580px;top:291px" width="35" height="20" shape-rendering="crispEdges"><rect x="0" y="0" width="5" height="5" fill="#efedeb"/><rect x="5" y="0" width="5" height="5" fill="#d3d3d7"/><rect x="15" y="0" width="5" height="5" fill="#dcdbdf"/><rect x="20" y="0" width="5" height="5" fill="#edeef0"/><rect x="30" y="0" width="5" height="5" fill="#f6f5f4"/><rect x="0" y="5" width="5" height="5" fill="#babec7"/><rect x="5" y="5" width="5" height="5" fill="#97969d"/><rect x="10" y="5" width="5" height="5" fill="#c2bbb3"/><rect x="15" y="5" width="5" height="5" fill="#bcbbc0"/><rect x="20" y="5" width="5" height="5" fill="#b7aea5"/><rect x="25" y="5" width="5" height="5" fill="#aaa9af"/><rect x="30" y="5" width="5" height="5" fill="#cacacd"/><rect x="0" y="10" width="5" height="5" fill="#b5b4bb"/><rect x="5" y="10" width="5" height="5" fill="#c3c2c6"/><rect x="10" y="10" width="5" height="5" fill="#bfc3cb"/><rect x="15" y="10" width="5" height="5" fill="#a1a0aa"/><rect x="20" y="10" width="5" height="5" fill="#d1ccc6"/><rect x="25" y="10" width="5" height="5" fill="#b2b0b9"/><rect x="30" y="10" width="5" height="5" fill="#cbcbd0"/><rect x="10" y="15" width="5" height="5" fill="#e9e6e3"/><rect x="15" y="15" width="5" height="5" fill="#f5f6f7"/><rect x="25" y="15" width="5" height="5" fill="#ececee"/></svg>
<svg class="ab" style="left:1630px;top:291px" width="40" height="20" shape-rendering="crispEdges"><rect x="0" y="0" width="5" height="5" fill="#f4f4f5"/><rect x="5" y="0" width="5" height="5" fill="#eeeff1"/><rect x="10" y="0" width="5" height="5" fill="#e0dcd9"/><rect x="20" y="0" width="5" height="5" fill="#dbdde2"/><rect x="30" y="0" width="5" height="5" fill="#f5f4f3"/><rect x="0" y="5" width="5" height="5" fill="#b6b9c3"/><rect x="5" y="5" width="5" height="5" fill="#d3cec8"/><rect x="10" y="5" width="5" height="5" fill="#a6abb7"/><rect x="15" y="5" width="5" height="5" fill="#aeadb6"/><rect x="20" y="5" width="5" height="5" fill="#94929a"/><rect x="25" y="5" width="5" height="5" fill="#9e9ca3"/><rect x="30" y="5" width="5" height="5" fill="#97969d"/><rect x="35" y="5" width="5" height="5" fill="#bdb4ac"/><rect x="0" y="10" width="5" height="5" fill="#dcd7d3"/><rect x="5" y="10" width="5" height="5" fill="#cccbce"/><rect x="10" y="10" width="5" height="5" fill="#bfb7af"/><rect x="15" y="10" width="5" height="5" fill="#e2dfdb"/><rect x="20" y="10" width="5" height="5" fill="#cbcbce"/><rect x="25" y="10" width="5" height="5" fill="#e2dfdb"/><rect x="30" y="10" width="5" height="5" fill="#adacb5"/><rect x="35" y="10" width="5" height="5" fill="#a5a4aa"/><rect x="0" y="15" width="5" height="5" fill="#dad9dc"/><rect x="10" y="15" width="5" height="5" fill="#f4f4f5"/><rect x="15" y="15" width="5" height="5" fill="#eff0f2"/><rect x="25" y="15" width="5" height="5" fill="#e4e1dd"/><rect x="30" y="15" width="5" height="5" fill="#ebecef"/><rect x="35" y="15" width="5" height="5" fill="#dcdbdf"/></svg>
<svg class="ab" style="left:1680px;top:291px" width="30" height="20" shape-rendering="crispEdges"><rect x="0" y="0" width="5" height="5" fill="#d3d3d7"/><rect x="5" y="0" width="5" height="5" fill="#f2f2f4"/><rect x="10" y="0" width="5" height="5" fill="#dcdcdf"/><rect x="15" y="0" width="5" height="5" fill="#f5f4f5"/><rect x="25" y="0" width="5" height="5" fill="#cfced2"/><rect x="0" y="5" width="5" height="5" fill="#a5a3a9"/><rect x="5" y="5" width="5" height="5" fill="#b7bbc4"/><rect x="10" y="5" width="5" height="5" fill="#afaeb3"/><rect x="15" y="5" width="5" height="5" fill="#a3a2a8"/><rect x="20" y="5" width="5" height="5" fill="#a09fa9"/><rect x="25" y="5" width="5" height="5" fill="#a1a0a9"/><rect x="0" y="10" width="5" height="5" fill="#c8c7cd"/><rect x="5" y="10" width="5" height="5" fill="#d4cfc9"/><rect x="10" y="10" width="5" height="5" fill="#a7a6ac"/><rect x="15" y="10" width="5" height="5" fill="#e1deda"/><rect x="20" y="10" width="5" height="5" fill="#dcd7d3"/><rect x="25" y="10" width="5" height="5" fill="#c4bcb5"/><rect x="0" y="15" width="5" height="5" fill="#eeeef0"/><rect x="5" y="15" width="5" height="5" fill="#ecedf0"/><rect x="25" y="15" width="5" height="5" fill="#f2f2f2"/></svg>
<svg class="ab" style="left:1720px;top:291px" width="25" height="20" shape-rendering="crispEdges"><rect x="5" y="0" width="5" height="5" fill="#d8dae0"/><rect x="15" y="0" width="5" height="5" fill="#f0efed"/><rect x="20" y="0" width="5" height="5" fill="#ebeaec"/><rect x="0" y="5" width="5" height="5" fill="#c9c9ce"/><rect x="5" y="5" width="5" height="5" fill="#9c9ba2"/><rect x="10" y="5" width="5" height="5" fill="#bebdc2"/><rect x="15" y="5" width="5" height="5" fill="#a9a8ad"/><rect x="20" y="5" width="5" height="5" fill="#b4b8c2"/><rect x="0" y="10" width="5" height="5" fill="#b6b5ba"/><rect x="5" y="10" width="5" height="5" fill="#a9a8b1"/><rect x="10" y="10" width="5" height="5" fill="#c4c3c7"/><rect x="15" y="10" width="5" height="5" fill="#dad6d1"/><rect x="20" y="10" width="5" height="5" fill="#d6d8de"/><rect x="0" y="15" width="5" height="5" fill="#eaeaeb"/><rect x="5" y="15" width="5" height="5" fill="#edeae8"/><rect x="10" y="15" width="5" height="5" fill="#f1f2f4"/><rect x="15" y="15" width="5" height="5" fill="#d1d0d3"/><rect x="20" y="15" width="5" height="5" fill="#e5e2df"/></svg>
<svg class="ab" style="left:1760px;top:291px" width="40" height="20" shape-rendering="crispEdges"><rect x="5" y="0" width="5" height="5" fill="#f3f3f4"/><rect x="15" y="0" width="5" height="5" fill="#e7e4e1"/><rect x="25" y="0" width="5" height="5" fill="#dedde0"/><rect x="0" y="5" width="5" height="5" fill="#c3bbb4"/><rect x="5" y="5" width="5" height="5" fill="#c4c7cf"/><rect x="10" y="5" width="5" height="5" fill="#9b99a4"/><rect x="15" y="5" width="5" height="5" fill="#bbbec8"/><rect x="20" y="5" width="5" height="5" fill="#c1c0c6"/><rect x="25" y="5" width="5" height="5" fill="#c7cad2"/><rect x="30" y="5" width="5" height="5" fill="#d4cfc9"/><rect x="35" y="5" width="5" height="5" fill="#b4b3bb"/><rect x="0" y="10" width="5" height="5" fill="#a3a2a8"/><rect x="5" y="10" width="5" height="5" fill="#ccced5"/><rect x="10" y="10" width="5" height="5" fill="#d8d3ce"/><rect x="15" y="10" width="5" height="5" fill="#a1a0a9"/><rect x="20" y="10" width="5" height="5" fill="#d2d1d4"/><rect x="25" y="10" width="5" height="5" fill="#e4e0dd"/><rect x="30" y="10" width="5" height="5" fill="#b8b7bc"/><rect x="35" y="10" width="5" height="5" fill="#d3cec8"/><rect x="5" y="15" width="5" height="5" fill="#e5e2de"/><rect x="10" y="15" width="5" height="5" fill="#eae7e5"/><rect x="15" y="15" width="5" height="5" fill="#f2f2f3"/><rect x="35" y="15" width="5" height="5" fill="#dedee1"/></svg>
<svg class="ab" style="left:1810px;top:291px" width="25" height="20" shape-rendering="crispEdges"><rect x="5" y="0" width="5" height="5" fill="#f0efed"/><rect x="10" y="0" width="5" height="5" fill="#eff0f2"/><rect x="0" y="5" width="5" height="5" fill="#b4b8c2"/><rect x="5" y="5" width="5" height="5" fill="#a2a1ab"/><rect x="10" y="5" width="5" height="5" fill="#9a98a3"/><rect x="15" y="5" width="5" height="5" fill="#edeef0"/><rect x="20" y="5" width="5" height="5" fill="#ecedf0"/><rect x="0" y="10" width="5" height="5" fill="#98979e"/><rect x="5" y="10" width="5" height="5" fill="#d5d0cb"/><rect x="10" y="10" width="5" height="5" fill="#b0b4bf"/><rect x="15" y="10" width="5" height="5" fill="#ebecee"/><rect x="20" y="10" width="5" height="5" fill="#e3e3e5"/><rect x="0" y="15" width="5" height="5" fill="#ecedf0"/><rect x="10" y="15" width="5" height="5" fill="#f5f4f3"/></svg>
<svg class="ab" style="left:1577px;top:296px" width="3" height="11"><rect x="0.5" y="1" width="2" height="1.3" fill="#222"/><rect x="0.5" y="5" width="2" height="1.3" fill="#222"/><rect x="0.5" y="9" width="2" height="1.3" fill="#222"/></svg>
<div class="ab" style="left:170px;top:332px;width:16px;height:16px;border:1px solid #d4d6da;border-radius:2px;background:#fff"></div>
<div class="ab t13" style="left:202px;top:331px;color:#2f88e6">删除办税员 获取绑定企业</div>
<div class="ab t13" style="left:370px;top:331px;color:#333">企业登录（新版）</div>
<svg class="ab" style="left:495px;top:331px" width="55" height="20" shape-rendering="crispEdges"><rect x="0" y="0" width="5" height="5" fill="#e1eefd"/><rect x="5" y="0" width="5" height="5" fill="#bfddfb"/><rect x="10" y="0" width="5" height="5" fill="#ecf5fd"/><rect x="15" y="0" width="5" height="5" fill="#deedfd"/><rect x="20" y="0" width="5" height="5" fill="#eaf4fd"/><rect x="30" y="0" width="5" height="5" fill="#eff6fe"/><rect x="45" y="0" width="5" height="5" fill="#cde4fc"/><rect x="0" y="5" width="5" height="5" fill="#87bef8"/><rect x="5" y="5" width="5" height="5" fill="#96c7f9"/><rect x="10" y="5" width="5" height="5" fill="#acd2fa"/><rect x="15" y="5" width="5" height="5" fill="#abd2fa"/><rect x="20" y="5" width="5" height="5" fill="#c1defb"/><rect x="25" y="5" width="5" height="5" fill="#93c5f9"/><rect x="30" y="5" width="5" height="5" fill="#afd4fa"/><rect x="35" y="5" width="5" height="5" fill="#bfddfb"/><rect x="40" y="5" width="5" height="5" fill="#aed3fa"/><rect x="45" y="5" width="5" height="5" fill="#d6e9fc"/><rect x="50" y="5" width="5" height="5" fill="#c1ddfb"/><rect x="0" y="10" width="5" height="5" fill="#abd2fa"/><rect x="5" y="10" width="5" height="5" fill="#a8d0fa"/><rect x="10" y="10" width="5" height="5" fill="#cde4fc"/><rect x="15" y="10" width="5" height="5" fill="#6aaff6"/><rect x="20" y="10" width="5" height="5" fill="#bbdafb"/><rect x="25" y="10" width="5" height="5" fill="#80bbf8"/><rect x="30" y="10" width="5" height="5" fill="#88bff8"/><rect x="35" y="10" width="5" height="5" fill="#73b4f7"/><rect x="40" y="10" width="5" height="5" fill="#bddbfb"/><rect x="45" y="10" width="5" height="5" fill="#76b5f7"/><rect x="50" y="10" width="5" height="5" fill="#88bff8"/><rect x="0" y="15" width="5" height="5" fill="#bbdafb"/><rect x="15" y="15" width="5" height="5" fill="#bcdbfb"/><rect x="20" y="15" width="5" height="5" fill="#c6e0fb"/><rect x="25" y="15" width="5" height="5" fill="#d7e9fc"/><rect x="30" y="15" width="5" height="5" fill="#cbe3fc"/><rect x="35" y="15" width="5" height="5" fill="#d6e9fc"/><rect x="40" y="15" width="5" height="5" fill="#d1e6fc"/><rect x="45" y="15" width="5" height="5" fill="#b9d9fb"/></svg>
<svg class="ab" style="left:595px;top:336px" width="45" height="10" shape-rendering="crispEdges"><rect x="0" y="0" width="5" height="5" fill="#f9f9f9"/><rect x="5" y="0" width="5" height="5" fill="#d7d6d4"/><rect x="10" y="0" width="5" height="5" fill="#babdc3"/><rect x="15" y="0" width="5" height="5" fill="#dddcda"/><rect x="20" y="0" width="5" height="5" fill="#d9d8d6"/><rect x="25" y="0" width="5" height="5" fill="#cccdd2"/><rect x="30" y="0" width="5" height="5" fill="#c8c7cb"/><rect x="35" y="0" width="5" height="5" fill="#cac8c5"/><rect x="40" y="0" width="5" height="5" fill="#dadadc"/><rect x="0" y="5" width="5" height="5" fill="#f8f8f9"/><rect x="5" y="5" width="5" height="5" fill="#cac9cd"/><rect x="10" y="5" width="5" height="5" fill="#c2c1c5"/><rect x="15" y="5" width="5" height="5" fill="#e0e0e2"/><rect x="20" y="5" width="5" height="5" fill="#f0efee"/><rect x="25" y="5" width="5" height="5" fill="#f7f7f7"/><rect x="30" y="5" width="5" height="5" fill="#f2f2f3"/><rect x="35" y="5" width="5" height="5" fill="#f5f5f6"/><rect x="40" y="5" width="5" height="5" fill="#f2f3f4"/></svg>
<div class="ab t13" style="left:639px;top:331px;color:#333">3615</div>
<div class="ab" style="left:639px;top:333px;width:3px;height:17px;background:#fff;opacity:0.6"></div>
<div class="ab t13" style="left:710px;top:330px;color:#333">******</div>
<div class="ab t13" style="left:815px;top:331px;width:114px;text-align:center;color:#2f88e6">111</div>
<div class="ab t13" style="left:929px;top:331px;width:91px;text-align:center;color:#2f88e6">2</div>
<div class="ab t13" style="left:1020px;top:331px;width:75px;text-align:center;color:#2f88e6">109</div>
<div class="ab t13" style="left:1104px;top:331px;color:#333">采集成功</div>
<div class="ab t13" style="left:1358px;top:331px;color:#333">2023-12-22 14:30:45</div>
<svg class="ab" style="left:1580px;top:331px" width="35" height="20" shape-rendering="crispEdges"><rect x="0" y="0" width="5" height="5" fill="#efedeb"/><rect x="5" y="0" width="5" height="5" fill="#d3d3d7"/><rect x="15" y="0" width="5" height="5" fill="#dcdbdf"/><rect x="20" y="0" width="5" height="5" fill="#edeef0"/><rect x="30" y="0" width="5" height="5" fill="#f6f5f4"/><rect x="0" y="5" width="5" height="5" fill="#babec7"/><rect x="5" y="5" width="5" height="5" fill="#97969d"/><rect x="10" y="5" width="5" height="5" fill="#c2bbb3"/><rect x="15" y="5" width="5" height="5" fill="#bcbbc0"/><rect x="20" y="5" width="5" height="5" fill="#b7aea5"/><rect x="25" y="5" width="5" height="5" fill="#aaa9af"/><rect x="30" y="5" width="5" height="5" fill="#cacacd"/><rect x="0" y="10" width="5" height="5" fill="#b5b4bb"/><rect x="5" y="10" width="5" height="5" fill="#c3c2c6"/><rect x="10" y="10" width="5" height="5" fill="#bfc3cb"/><rect x="15" y="10" width="5" height="5" fill="#a1a0aa"/><rect x="20" y="10" width="5" height="5" fill="#d1ccc6"/><rect x="25" y="10" width="5" height="5" fill="#b2b0b9"/><rect x="30" y="10" width="5" height="5" fill="#cbcbd0"/><rect x="10" y="15" width="5" height="5" fill="#e9e6e3"/><rect x="15" y="15" width="5" height="5" fill="#f5f6f7"/><rect x="25" y="15" width="5" height="5" fill="#ececee"/></svg>
<svg class="ab" style="left:1630px;top:331px" width="40" height="20" shape-rendering="crispEdges"><rect x="0" y="0" width="5" height="5" fill="#f4f4f5"/><rect x="5" y="0" width="5" height="5" fill="#eeeff1"/><rect x="10" y="0" width="5" height="5" fill="#e0dcd9"/><rect x="20" y="0" width="5" height="5" fill="#dbdde2"/><rect x="30" y="0" width="5" height="5" fill="#f5f4f3"/><rect x="0" y="5" width="5" height="5" fill="#b6b9c3"/><rect x="5" y="5" width="5" height="5" fill="#d3cec8"/><rect x="10" y="5" width="5" height="5" fill="#a6abb7"/><rect x="15" y="5" width="5" height="5" fill="#aeadb6"/><rect x="20" y="5" width="5" height="5" fill="#94929a"/><rect x="25" y="5" width="5" height="5" fill="#9e9ca3"/><rect x="30" y="5" width="5" height="5" fill="#97969d"/><rect x="35" y="5" width="5" height="5" fill="#bdb4ac"/><rect x="0" y="10" width="5" height="5" fill="#dcd7d3"/><rect x="5" y="10" width="5" height="5" fill="#cccbce"/><rect x="10" y="10" width="5" height="5" fill="#bfb7af"/><rect x="15" y="10" width="5" height="5" fill="#e2dfdb"/><rect x="20" y="10" width="5" height="5" fill="#cbcbce"/><rect x="25" y="10" width="5" height="5" fill="#e2dfdb"/><rect x="30" y="10" width="5" height="5" fill="#adacb5"/><rect x="35" y="10" width="5" height="5" fill="#a5a4aa"/><rect x="0" y="15" width="5" height="5" fill="#dad9dc"/><rect x="10" y="15" width="5" height="5" fill="#f4f4f5"/><rect x="15" y="15" width="5" height="5" fill="#eff0f2"/><rect x="25" y="15" width="5" height="5" fill="#e4e1dd"/><rect x="30" y="15" width="5" height="5" fill="#ebecef"/><rect x="35" y="15" width="5" height="5" fill="#dcdbdf"/></svg>
<svg class="ab" style="left:1680px;top:331px" width="30" height="20" shape-rendering="crispEdges"><rect x="0" y="0" width="5" height="5" fill="#d3d3d7"/><rect x="5" y="0" width="5" height="5" fill="#f2f2f4"/><rect x="10" y="0" width="5" height="5" fill="#dcdcdf"/><rect x="15" y="0" width="5" height="5" fill="#f5f4f5"/><rect x="25" y="0" width="5" height="5" fill="#cfced2"/><rect x="0" y="5" width="5" height="5" fill="#a5a3a9"/><rect x="5" y="5" width="5" height="5" fill="#b7bbc4"/><rect x="10" y="5" width="5" height="5" fill="#afaeb3"/><rect x="15" y="5" width="5" height="5" fill="#a3a2a8"/><rect x="20" y="5" width="5" height="5" fill="#a09fa9"/><rect x="25" y="5" width="5" height="5" fill="#a1a0a9"/><rect x="0" y="10" width="5" height="5" fill="#c8c7cd"/><rect x="5" y="10" width="5" height="5" fill="#d4cfc9"/><rect x="10" y="10" width="5" height="5" fill="#a7a6ac"/><rect x="15" y="10" width="5" height="5" fill="#e1deda"/><rect x="20" y="10" width="5" height="5" fill="#dcd7d3"/><rect x="25" y="10" width="5" height="5" fill="#c4bcb5"/><rect x="0" y="15" width="5" height="5" fill="#eeeef0"/><rect x="5" y="15" width="5" height="5" fill="#ecedf0"/><rect x="25" y="15" width="5" height="5" fill="#f2f2f2"/></svg>
<svg class="ab" style="left:1720px;top:331px" width="25" height="20" shape-rendering="crispEdges"><rect x="5" y="0" width="5" height="5" fill="#d8dae0"/><rect x="15" y="0" width="5" height="5" fill="#f0efed"/><rect x="20" y="0" width="5" height="5" fill="#ebeaec"/><rect x="0" y="5" width="5" height="5" fill="#c9c9ce"/><rect x="5" y="5" width="5" height="5" fill="#9c9ba2"/><rect x="10" y="5" width="5" height="5" fill="#bebdc2"/><rect x="15" y="5" width="5" height="5" fill="#a9a8ad"/><rect x="20" y="5" width="5" height="5" fill="#b4b8c2"/><rect x="0" y="10" width="5" height="5" fill="#b6b5ba"/><rect x="5" y="10" width="5" height="5" fill="#a9a8b1"/><rect x="10" y="10" width="5" height="5" fill="#c4c3c7"/><rect x="15" y="10" width="5" height="5" fill="#dad6d1"/><rect x="20" y="10" width="5" height="5" fill="#d6d8de"/><rect x="0" y="15" width="5" height="5" fill="#eaeaeb"/><rect x="5" y="15" width="5" height="5" fill="#edeae8"/><rect x="10" y="15" width="5" height="5" fill="#f1f2f4"/><rect x="15" y="15" width="5" height="5" fill="#d1d0d3"/><rect x="20" y="15" width="5" height="5" fill="#e5e2df"/></svg>
<svg class="ab" style="left:1760px;top:331px" width="40" height="20" shape-rendering="crispEdges"><rect x="5" y="0" width="5" height="5" fill="#f3f3f4"/><rect x="15" y="0" width="5" height="5" fill="#e7e4e1"/><rect x="25" y="0" width="5" height="5" fill="#dedde0"/><rect x="0" y="5" width="5" height="5" fill="#c3bbb4"/><rect x="5" y="5" width="5" height="5" fill="#c4c7cf"/><rect x="10" y="5" width="5" height="5" fill="#9b99a4"/><rect x="15" y="5" width="5" height="5" fill="#bbbec8"/><rect x="20" y="5" width="5" height="5" fill="#c1c0c6"/><rect x="25" y="5" width="5" height="5" fill="#c7cad2"/><rect x="30" y="5" width="5" height="5" fill="#d4cfc9"/><rect x="35" y="5" width="5" height="5" fill="#b4b3bb"/><rect x="0" y="10" width="5" height="5" fill="#a3a2a8"/><rect x="5" y="10" width="5" height="5" fill="#ccced5"/><rect x="10" y="10" width="5" height="5" fill="#d8d3ce"/><rect x="15" y="10" width="5" height="5" fill="#a1a0a9"/><rect x="20" y="10" width="5" height="5" fill="#d2d1d4"/><rect x="25" y="10" width="5" height="5" fill="#e4e0dd"/><rect x="30" y="10" width="5" height="5" fill="#b8b7bc"/><rect x="35" y="10" width="5" height="5" fill="#d3cec8"/><rect x="5" y="15" width="5" height="5" fill="#e5e2de"/><rect x="10" y="15" width="5" height="5" fill="#eae7e5"/><rect x="15" y="15" width="5" height="5" fill="#f2f2f3"/><rect x="35" y="15" width="5" height="5" fill="#dedee1"/></svg>
<svg class="ab" style="left:1810px;top:331px" width="25" height="20" shape-rendering="crispEdges"><rect x="5" y="0" width="5" height="5" fill="#f0efed"/><rect x="10" y="0" width="5" height="5" fill="#eff0f2"/><rect x="0" y="5" width="5" height="5" fill="#b4b8c2"/><rect x="5" y="5" width="5" height="5" fill="#a2a1ab"/><rect x="10" y="5" width="5" height="5" fill="#9a98a3"/><rect x="15" y="5" width="5" height="5" fill="#edeef0"/><rect x="20" y="5" width="5" height="5" fill="#ecedf0"/><rect x="0" y="10" width="5" height="5" fill="#98979e"/><rect x="5" y="10" width="5" height="5" fill="#d5d0cb"/><rect x="10" y="10" width="5" height="5" fill="#b0b4bf"/><rect x="15" y="10" width="5" height="5" fill="#ebecee"/><rect x="20" y="10" width="5" height="5" fill="#e3e3e5"/><rect x="0" y="15" width="5" height="5" fill="#ecedf0"/><rect x="10" y="15" width="5" height="5" fill="#f5f4f3"/></svg>
<svg class="ab" style="left:1577px;top:336px" width="3" height="11"><rect x="0.5" y="1" width="2" height="1.3" fill="#222"/><rect x="0.5" y="5" width="2" height="1.3" fill="#222"/><rect x="0.5" y="9" width="2" height="1.3" fill="#222"/></svg>
<div class="ab" style="left:170px;top:372px;width:16px;height:16px;border:1px solid #d4d6da;border-radius:2px;background:#fff"></div>
<div class="ab t13" style="left:202px;top:371px;color:#2f88e6">删除办税员 获取绑定企业</div>
<div class="ab t13" style="left:370px;top:371px;color:#333">企业登录（新版）</div>
<svg class="ab" style="left:495px;top:371px" width="55" height="20" shape-rendering="crispEdges"><rect x="5" y="0" width="5" height="5" fill="#ddedfd"/><rect x="10" y="0" width="5" height="5" fill="#e3f0fd"/><rect x="20" y="0" width="5" height="5" fill="#ddecfd"/><rect x="25" y="0" width="5" height="5" fill="#d2e7fc"/><rect x="30" y="0" width="5" height="5" fill="#d1e6fc"/><rect x="35" y="0" width="5" height="5" fill="#eff6fe"/><rect x="0" y="5" width="5" height="5" fill="#9ccaf9"/><rect x="5" y="5" width="5" height="5" fill="#8ec2f8"/><rect x="10" y="5" width="5" height="5" fill="#a5cffa"/><rect x="15" y="5" width="5" height="5" fill="#97c7f9"/><rect x="20" y="5" width="5" height="5" fill="#bedcfb"/><rect x="25" y="5" width="5" height="5" fill="#83bcf8"/><rect x="30" y="5" width="5" height="5" fill="#91c4f8"/><rect x="35" y="5" width="5" height="5" fill="#8bc1f8"/><rect x="40" y="5" width="5" height="5" fill="#82bcf8"/><rect x="45" y="5" width="5" height="5" fill="#7bb8f7"/><rect x="50" y="5" width="5" height="5" fill="#b2d5fa"/><rect x="0" y="10" width="5" height="5" fill="#92c4f9"/><rect x="5" y="10" width="5" height="5" fill="#a2cdf9"/><rect x="10" y="10" width="5" height="5" fill="#6cb0f6"/><rect x="15" y="10" width="5" height="5" fill="#7ab7f7"/><rect x="20" y="10" width="5" height="5" fill="#8dc2f8"/><rect x="25" y="10" width="5" height="5" fill="#75b5f7"/><rect x="30" y="10" width="5" height="5" fill="#a6cffa"/><rect x="35" y="10" width="5" height="5" fill="#91c4f8"/><rect x="40" y="10" width="5" height="5" fill="#98c7f9"/><rect x="45" y="10" width="5" height="5" fill="#98c8f9"/><rect x="50" y="10" width="5" height="5" fill="#c2defb"/><rect x="0" y="15" width="5" height="5" fill="#bcdbfb"/><rect x="10" y="15" width="5" height="5" fill="#cde4fc"/><rect x="15" y="15" width="5" height="5" fill="#d2e7fc"/><rect x="20" y="15" width="5" height="5" fill="#d6e9fc"/><rect x="30" y="15" width="5" height="5" fill="#eef6fe"/><rect x="40" y="15" width="5" height="5" fill="#f1f7fe"/><rect x="45" y="15" width="5" height="5" fill="#dfedfd"/></svg>
<svg class="ab" style="left:595px;top:376px" width="45" height="10" shape-rendering="crispEdges"><rect x="0" y="0" width="5" height="5" fill="#ececee"/><rect x="5" y="0" width="5" height="5" fill="#d0cfd3"/><rect x="10" y="0" width="5" height="5" fill="#c5c3bf"/><rect x="15" y="0" width="5" height="5" fill="#d9d7d5"/><rect x="20" y="0" width="5" height="5" fill="#dcdbd9"/><rect x="25" y="0" width="5" height="5" fill="#d3d5d9"/><rect x="30" y="0" width="5" height="5" fill="#cdccd0"/><rect x="35" y="0" width="5" height="5" fill="#cbcdd1"/><rect x="40" y="0" width="5" height="5" fill="#ced0d4"/><rect x="0" y="5" width="5" height="5" fill="#f4f4f3"/><rect x="5" y="5" width="5" height="5" fill="#d5d5d7"/><rect x="10" y="5" width="5" height="5" fill="#c1c3c8"/><rect x="15" y="5" width="5" height="5" fill="#dedfe2"/><rect x="20" y="5" width="5" height="5" fill="#eeeef0"/><rect x="40" y="5" width="5" height="5" fill="#edeceb"/></svg>
<div class="ab t13" style="left:639px;top:371px;color:#333">3337</div>
<div class="ab" style="left:639px;top:373px;width:3px;height:17px;background:#fff;opacity:0.6"></div>
<div class="ab t13" style="left:710px;top:370px;color:#333">******</div>
<div class="ab t13" style="left:815px;top:371px;width:114px;text-align:center;color:#2f88e6">252</div>
<div class="ab t13" style="left:929px;top:371px;width:91px;text-align:center;color:#2f88e6">7</div>
<div class="ab t13" style="left:1020px;top:371px;width:75px;text-align:center;color:#2f88e6">252</div>
<div class="ab t13" style="left:1104px;top:371px;color:#333">采集成功</div>
<div class="ab t13" style="left:1358px;top:371px;color:#333">2024-08-19 15:31:50</div>
<svg class="ab" style="left:1580px;top:371px" width="35" height="20" shape-rendering="crispEdges"><rect x="0" y="0" width="5" height="5" fill="#efedeb"/><rect x="5" y="0" width="5" height="5" fill="#d3d3d7"/><rect x="15" y="0" width="5" height="5" fill="#dcdbdf"/><rect x="20" y="0" width="5" height="5" fill="#edeef0"/><rect x="30" y="0" width="5" height="5" fill="#f6f5f4"/><rect x="0" y="5" width="5" height="5" fill="#babec7"/><rect x="5" y="5" width="5" height="5" fill="#97969d"/><rect x="10" y="5" width="5" height="5" fill="#c2bbb3"/><rect x="15" y="5" width="5" height="5" fill="#bcbbc0"/><rect x="20" y="5" width="5" height="5" fill="#b7aea5"/><rect x="25" y="5" width="5" height="5" fill="#aaa9af"/><rect x="30" y="5" width="5" height="5" fill="#cacacd"/><rect x="0" y="10" width="5" height="5" fill="#b5b4bb"/><rect x="5" y="10" width="5" height="5" fill="#c3c2c6"/><rect x="10" y="10" width="5" height="5" fill="#bfc3cb"/><rect x="15" y="10" width="5" height="5" fill="#a1a0aa"/><rect x="20" y="10" width="5" height="5" fill="#d1ccc6"/><rect x="25" y="10" width="5" height="5" fill="#b2b0b9"/><rect x="30" y="10" width="5" height="5" fill="#cbcbd0"/><rect x="10" y="15" width="5" height="5" fill="#e9e6e3"/><rect x="15" y="15" width="5" height="5" fill="#f5f6f7"/><rect x="25" y="15" width="5" height="5" fill="#ececee"/></svg>
<svg class="ab" style="left:1630px;top:371px" width="40" height="20" shape-rendering="crispEdges"><rect x="0" y="0" width="5" height="5" fill="#f4f4f5"/><rect x="5" y="0" width="5" height="5" fill="#eeeff1"/><rect x="10" y="0" width="5" height="5" fill="#e0dcd9"/><rect x="20" y="0" width="5" height="5" fill="#dbdde2"/><rect x="30" y="0" width="5" height="5" fill="#f5f4f3"/><rect x="0" y="5" width="5" height="5" fill="#b6b9c3"/><rect x="5" y="5" width="5" height="5" fill="#d3cec8"/><rect x="10" y="5" width="5" height="5" fill="#a6abb7"/><rect x="15" y="5" width="5" height="5" fill="#aeadb6"/><rect x="20" y="5" width="5" height="5" fill="#94929a"/><rect x="25" y="5" width="5" height="5" fill="#9e9ca3"/><rect x="30" y="5" width="5" height="5" fill="#97969d"/><rect x="35" y="5" width="5" height="5" fill="#bdb4ac"/><rect x="0" y="10" width="5" height="5" fill="#dcd7d3"/><rect x="5" y="10" width="5" height="5" fill="#cccbce"/><rect x="10" y="10" width="5" height="5" fill="#bfb7af"/><rect x="15" y="10" width="5" height="5" fill="#e2dfdb"/><rect x="20" y="10" width="5" height="5" fill="#cbcbce"/><rect x="25" y="10" width="5" height="5" fill="#e2dfdb"/><rect x="30" y="10" width="5" height="5" fill="#adacb5"/><rect x="35" y="10" width="5" height="5" fill="#a5a4aa"/><rect x="0" y="15" width="5" height="5" fill="#dad9dc"/><rect x="10" y="15" width="5" height="5" fill="#f4f4f5"/><rect x="15" y="15" width="5" height="5" fill="#eff0f2"/><rect x="25" y="15" width="5" height="5" fill="#e4e1dd"/><rect x="30" y="15" width="5" height="5" fill="#ebecef"/><rect x="35" y="15" width="5" height="5" fill="#dcdbdf"/></svg>
<svg class="ab" style="left:1680px;top:371px" width="30" height="20" shape-rendering="crispEdges"><rect x="0" y="0" width="5" height="5" fill="#d3d3d7"/><rect x="5" y="0" width="5" height="5" fill="#f2f2f4"/><rect x="10" y="0" width="5" height="5" fill="#dcdcdf"/><rect x="15" y="0" width="5" height="5" fill="#f5f4f5"/><rect x="25" y="0" width="5" height="5" fill="#cfced2"/><rect x="0" y="5" width="5" height="5" fill="#a5a3a9"/><rect x="5" y="5" width="5" height="5" fill="#b7bbc4"/><rect x="10" y="5" width="5" height="5" fill="#afaeb3"/><rect x="15" y="5" width="5" height="5" fill="#a3a2a8"/><rect x="20" y="5" width="5" height="5" fill="#a09fa9"/><rect x="25" y="5" width="5" height="5" fill="#a1a0a9"/><rect x="0" y="10" width="5" height="5" fill="#c8c7cd"/><rect x="5" y="10" width="5" height="5" fill="#d4cfc9"/><rect x="10" y="10" width="5" height="5" fill="#a7a6ac"/><rect x="15" y="10" width="5" height="5" fill="#e1deda"/><rect x="20" y="10" width="5" height="5" fill="#dcd7d3"/><rect x="25" y="10" width="5" height="5" fill="#c4bcb5"/><rect x="0" y="15" width="5" height="5" fill="#eeeef0"/><rect x="5" y="15" width="5" height="5" fill="#ecedf0"/><rect x="25" y="15" width="5" height="5" fill="#f2f2f2"/></svg>
<svg class="ab" style="left:1720px;top:371px" width="25" height="20" shape-rendering="crispEdges"><rect x="5" y="0" width="5" height="5" fill="#d8dae0"/><rect x="15" y="0" width="5" height="5" fill="#f0efed"/><rect x="20" y="0" width="5" height="5" fill="#ebeaec"/><rect x="0" y="5" width="5" height="5" fill="#c9c9ce"/><rect x="5" y="5" width="5" height="5" fill="#9c9ba2"/><rect x="10" y="5" width="5" height="5" fill="#bebdc2"/><rect x="15" y="5" width="5" height="5" fill="#a9a8ad"/><rect x="20" y="5" width="5" height="5" fill="#b4b8c2"/><rect x="0" y="10" width="5" height="5" fill="#b6b5ba"/><rect x="5" y="10" width="5" height="5" fill="#a9a8b1"/><rect x="10" y="10" width="5" height="5" fill="#c4c3c7"/><rect x="15" y="10" width="5" height="5" fill="#dad6d1"/><rect x="20" y="10" width="5" height="5" fill="#d6d8de"/><rect x="0" y="15" width="5" height="5" fill="#eaeaeb"/><rect x="5" y="15" width="5" height="5" fill="#edeae8"/><rect x="10" y="15" width="5" height="5" fill="#f1f2f4"/><rect x="15" y="15" width="5" height="5" fill="#d1d0d3"/><rect x="20" y="15" width="5" height="5" fill="#e5e2df"/></svg>
<svg class="ab" style="left:1760px;top:371px" width="40" height="20" shape-rendering="crispEdges"><rect x="5" y="0" width="5" height="5" fill="#f3f3f4"/><rect x="15" y="0" width="5" height="5" fill="#e7e4e1"/><rect x="25" y="0" width="5" height="5" fill="#dedde0"/><rect x="0" y="5" width="5" height="5" fill="#c3bbb4"/><rect x="5" y="5" width="5" height="5" fill="#c4c7cf"/><rect x="10" y="5" width="5" height="5" fill="#9b99a4"/><rect x="15" y="5" width="5" height="5" fill="#bbbec8"/><rect x="20" y="5" width="5" height="5" fill="#c1c0c6"/><rect x="25" y="5" width="5" height="5" fill="#c7cad2"/><rect x="30" y="5" width="5" height="5" fill="#d4cfc9"/><rect x="35" y="5" width="5" height="5" fill="#b4b3bb"/><rect x="0" y="10" width="5" height="5" fill="#a3a2a8"/><rect x="5" y="10" width="5" height="5" fill="#ccced5"/><rect x="10" y="10" width="5" height="5" fill="#d8d3ce"/><rect x="15" y="10" width="5" height="5" fill="#a1a0a9"/><rect x="20" y="10" width="5" height="5" fill="#d2d1d4"/><rect x="25" y="10" width="5" height="5" fill="#e4e0dd"/><rect x="30" y="10" width="5" height="5" fill="#b8b7bc"/><rect x="35" y="10" width="5" height="5" fill="#d3cec8"/><rect x="5" y="15" width="5" height="5" fill="#e5e2de"/><rect x="10" y="15" width="5" height="5" fill="#eae7e5"/><rect x="15" y="15" width="5" height="5" fill="#f2f2f3"/><rect x="35" y="15" width="5" height="5" fill="#dedee1"/></svg>
<svg class="ab" style="left:1810px;top:371px" width="25" height="20" shape-rendering="crispEdges"><rect x="5" y="0" width="5" height="5" fill="#f0efed"/><rect x="10" y="0" width="5" height="5" fill="#eff0f2"/><rect x="0" y="5" width="5" height="5" fill="#b4b8c2"/><rect x="5" y="5" width="5" height="5" fill="#a2a1ab"/><rect x="10" y="5" width="5" height="5" fill="#9a98a3"/><rect x="15" y="5" width="5" height="5" fill="#edeef0"/><rect x="20" y="5" width="5" height="5" fill="#ecedf0"/><rect x="0" y="10" width="5" height="5" fill="#98979e"/><rect x="5" y="10" width="5" height="5" fill="#d5d0cb"/><rect x="10" y="10" width="5" height="5" fill="#b0b4bf"/><rect x="15" y="10" width="5" height="5" fill="#ebecee"/><rect x="20" y="10" width="5" height="5" fill="#e3e3e5"/><rect x="0" y="15" width="5" height="5" fill="#ecedf0"/><rect x="10" y="15" width="5" height="5" fill="#f5f4f3"/></svg>
<svg class="ab" style="left:1577px;top:376px" width="3" height="11"><rect x="0.5" y="1" width="2" height="1.3" fill="#222"/><rect x="0.5" y="5" width="2" height="1.3" fill="#222"/><rect x="0.5" y="9" width="2" height="1.3" fill="#222"/></svg>
<div class="ab" style="left:170px;top:412px;width:16px;height:16px;border:1px solid #d4d6da;border-radius:2px;background:#fff"></div>
<div class="ab t13" style="left:202px;top:411px;color:#2f88e6">删除办税员 获取绑定企业</div>
<div class="ab t13" style="left:370px;top:411px;color:#333">企业登录（新版）</div>
<svg class="ab" style="left:495px;top:411px" width="60" height="20" shape-rendering="crispEdges"><rect x="0" y="0" width="5" height="5" fill="#b8d9fb"/><rect x="5" y="0" width="5" height="5" fill="#bddbfb"/><rect x="10" y="0" width="5" height="5" fill="#d6e9fc"/><rect x="15" y="0" width="5" height="5" fill="#d9eafc"/><rect x="20" y="0" width="5" height="5" fill="#c1defb"/><rect x="25" y="0" width="5" height="5" fill="#eaf3fd"/><rect x="35" y="0" width="5" height="5" fill="#c8e1fb"/><rect x="45" y="0" width="5" height="5" fill="#badafb"/><rect x="50" y="0" width="5" height="5" fill="#deedfd"/><rect x="0" y="5" width="5" height="5" fill="#add3fa"/><rect x="5" y="5" width="5" height="5" fill="#c0ddfb"/><rect x="10" y="5" width="5" height="5" fill="#cee4fc"/><rect x="15" y="5" width="5" height="5" fill="#9ccaf9"/><rect x="20" y="5" width="5" height="5" fill="#83bcf8"/><rect x="25" y="5" width="5" height="5" fill="#7bb8f7"/><rect x="30" y="5" width="5" height="5" fill="#a1ccf9"/><rect x="35" y="5" width="5" height="5" fill="#d2e7fc"/><rect x="40" y="5" width="5" height="5" fill="#c9e2fc"/><rect x="45" y="5" width="5" height="5" fill="#79b7f7"/><rect x="50" y="5" width="5" height="5" fill="#79b7f7"/><rect x="55" y="5" width="5" height="5" fill="#81bcf8"/><rect x="0" y="10" width="5" height="5" fill="#afd4fa"/><rect x="5" y="10" width="5" height="5" fill="#6aaff6"/><rect x="10" y="10" width="5" height="5" fill="#86bef8"/><rect x="15" y="10" width="5" height="5" fill="#cce3fc"/><rect x="20" y="10" width="5" height="5" fill="#91c4f8"/><rect x="25" y="10" width="5" height="5" fill="#a7d0fa"/><rect x="30" y="10" width="5" height="5" fill="#b3d6fa"/><rect x="35" y="10" width="5" height="5" fill="#bcdbfb"/><rect x="40" y="10" width="5" height="5" fill="#add3fa"/><rect x="45" y="10" width="5" height="5" fill="#75b5f7"/><rect x="50" y="10" width="5" height="5" fill="#94c6f9"/><rect x="55" y="10" width="5" height="5" fill="#b6d8fb"/><rect x="10" y="15" width="5" height="5" fill="#d8eafc"/><rect x="15" y="15" width="5" height="5" fill="#ebf4fd"/><rect x="40" y="15" width="5" height="5" fill="#daebfc"/><rect x="45" y="15" width="5" height="5" fill="#e5f1fd"/><rect x="55" y="15" width="5" height="5" fill="#bedcfb"/></svg>
<svg class="ab" style="left:595px;top:416px" width="45" height="10" shape-rendering="crispEdges"><rect x="0" y="0" width="5" height="5" fill="#f9f9f8"/><rect x="5" y="0" width="5" height="5" fill="#cecdd0"/><rect x="10" y="0" width="5" height="5" fill="#c0c2c7"/><rect x="15" y="0" width="5" height="5" fill="#d8d7d5"/><rect x="20" y="0" width="5" height="5" fill="#d4d6d9"/><rect x="25" y="0" width="5" height="5" fill="#d3d2d5"/><rect x="30" y="0" width="5" height="5" fill="#cdcccf"/><rect x="35" y="0" width="5" height="5" fill="#c5c4c8"/><rect x="40" y="0" width="5" height="5" fill="#dadbde"/><rect x="0" y="5" width="5" height="5" fill="#f1f0ef"/><rect x="5" y="5" width="5" height="5" fill="#d1d3d7"/><rect x="10" y="5" width="5" height="5" fill="#c0bfc4"/><rect x="15" y="5" width="5" height="5" fill="#e1e1e3"/><rect x="20" y="5" width="5" height="5" fill="#f4f4f5"/><rect x="35" y="5" width="5" height="5" fill="#f8f8f8"/></svg>
<div class="ab t13" style="left:639px;top:411px;color:#333">3341</div>
<div class="ab" style="left:639px;top:413px;width:3px;height:17px;background:#fff;opacity:0.6"></div>
<div class="ab t13" style="left:710px;top:410px;color:#333">******</div>
<div class="ab t13" style="left:815px;top:411px;width:114px;text-align:center;color:#2f88e6">10</div>
<div class="ab t13" style="left:929px;top:411px;width:91px;text-align:center;color:#2f88e6">1</div>
<div class="ab t13" style="left:1020px;top:411px;width:75px;text-align:center;color:#2f88e6">24</div>
<div class="ab t13" style="left:1104px;top:411px;color:#333">采集成功</div>
<div class="ab t13" style="left:1358px;top:411px;color:#333">2024-07-30 14:11:58</div>
<svg class="ab" style="left:1580px;top:411px" width="35" height="20" shape-rendering="crispEdges"><rect x="0" y="0" width="5" height="5" fill="#efedeb"/><rect x="5" y="0" width="5" height="5" fill="#d3d3d7"/><rect x="15" y="0" width="5" height="5" fill="#dcdbdf"/><rect x="20" y="0" width="5" height="5" fill="#edeef0"/><rect x="30" y="0" width="5" height="5" fill="#f6f5f4"/><rect x="0" y="5" width="5" height="5" fill="#babec7"/><rect x="5" y="5" width="5" height="5" fill="#97969d"/><rect x="10" y="5" width="5" height="5" fill="#c2bbb3"/><rect x="15" y="5" width="5" height="5" fill="#bcbbc0"/><rect x="20" y="5" width="5" height="5" fill="#b7aea5"/><rect x="25" y="5" width="5" height="5" fill="#aaa9af"/><rect x="30" y="5" width="5" height="5" fill="#cacacd"/><rect x="0" y="10" width="5" height="5" fill="#b5b4bb"/><rect x="5" y="10" width="5" height="5" fill="#c3c2c6"/><rect x="10" y="10" width="5" height="5" fill="#bfc3cb"/><rect x="15" y="10" width="5" height="5" fill="#a1a0aa"/><rect x="20" y="10" width="5" height="5" fill="#d1ccc6"/><rect x="25" y="10" width="5" height="5" fill="#b2b0b9"/><rect x="30" y="10" width="5" height="5" fill="#cbcbd0"/><rect x="10" y="15" width="5" height="5" fill="#e9e6e3"/><rect x="15" y="15" width="5" height="5" fill="#f5f6f7"/><rect x="25" y="15" width="5" height="5" fill="#ececee"/></svg>
<svg class="ab" style="left:1630px;top:411px" width="40" height="20" shape-rendering="crispEdges"><rect x="0" y="0" width="5" height="5" fill="#f4f4f5"/><rect x="5" y="0" width="5" height="5" fill="#eeeff1"/><rect x="10" y="0" width="5" height="5" fill="#e0dcd9"/><rect x="20" y="0" width="5" height="5" fill="#dbdde2"/><rect x="30" y="0" width="5" height="5" fill="#f5f4f3"/><rect x="0" y="5" width="5" height="5" fill="#b6b9c3"/><rect x="5" y="5" width="5" height="5" fill="#d3cec8"/><rect x="10" y="5" width="5" height="5" fill="#a6abb7"/><rect x="15" y="5" width="5" height="5" fill="#aeadb6"/><rect x="20" y="5" width="5" height="5" fill="#94929a"/><rect x="25" y="5" width="5" height="5" fill="#9e9ca3"/><rect x="30" y="5" width="5" height="5" fill="#97969d"/><rect x="35" y="5" width="5" height="5" fill="#bdb4ac"/><rect x="0" y="10" width="5" height="5" fill="#dcd7d3"/><rect x="5" y="10" width="5" height="5" fill="#cccbce"/><rect x="10" y="10" width="5" height="5" fill="#bfb7af"/><rect x="15" y="10" width="5" height="5" fill="#e2dfdb"/><rect x="20" y="10" width="5" height="5" fill="#cbcbce"/><rect x="25" y="10" width="5" height="5" fill="#e2dfdb"/><rect x="30" y="10" width="5" height="5" fill="#adacb5"/><rect x="35" y="10" width="5" height="5" fill="#a5a4aa"/><rect x="0" y="15" width="5" height="5" fill="#dad9dc"/><rect x="10" y="15" width="5" height="5" fill="#f4f4f5"/><rect x="15" y="15" width="5" height="5" fill="#eff0f2"/><rect x="25" y="15" width="5" height="5" fill="#e4e1dd"/><rect x="30" y="15" width="5" height="5" fill="#ebecef"/><rect x="35" y="15" width="5" height="5" fill="#dcdbdf"/></svg>
<svg class="ab" style="left:1680px;top:411px" width="30" height="20" shape-rendering="crispEdges"><rect x="0" y="0" width="5" height="5" fill="#d3d3d7"/><rect x="5" y="0" width="5" height="5" fill="#f2f2f4"/><rect x="10" y="0" width="5" height="5" fill="#dcdcdf"/><rect x="15" y="0" width="5" height="5" fill="#f5f4f5"/><rect x="25" y="0" width="5" height="5" fill="#cfced2"/><rect x="0" y="5" width="5" height="5" fill="#a5a3a9"/><rect x="5" y="5" width="5" height="5" fill="#b7bbc4"/><rect x="10" y="5" width="5" height="5" fill="#afaeb3"/><rect x="15" y="5" width="5" height="5" fill="#a3a2a8"/><rect x="20" y="5" width="5" height="5" fill="#a09fa9"/><rect x="25" y="5" width="5" height="5" fill="#a1a0a9"/><rect x="0" y="10" width="5" height="5" fill="#c8c7cd"/><rect x="5" y="10" width="5" height="5" fill="#d4cfc9"/><rect x="10" y="10" width="5" height="5" fill="#a7a6ac"/><rect x="15" y="10" width="5" height="5" fill="#e1deda"/><rect x="20" y="10" width="5" height="5" fill="#dcd7d3"/><rect x="25" y="10" width="5" height="5" fill="#c4bcb5"/><rect x="0" y="15" width="5" height="5" fill="#eeeef0"/><rect x="5" y="15" width="5" height="5" fill="#ecedf0"/><rect x="25" y="15" width="5" height="5" fill="#f2f2f2"/></svg>
<svg class="ab" style="left:1720px;top:411px" width="25" height="20" shape-rendering="crispEdges"><rect x="5" y="0" width="5" height="5" fill="#d8dae0"/><rect x="15" y="0" width="5" height="5" fill="#f0efed"/><rect x="20" y="0" width="5" height="5" fill="#ebeaec"/><rect x="0" y="5" width="5" height="5" fill="#c9c9ce"/><rect x="5" y="5" width="5" height="5" fill="#9c9ba2"/><rect x="10" y="5" width="5" height="5" fill="#bebdc2"/><rect x="15" y="5" width="5" height="5" fill="#a9a8ad"/><rect x="20" y="5" width="5" height="5" fill="#b4b8c2"/><rect x="0" y="10" width="5" height="5" fill="#b6b5ba"/><rect x="5" y="10" width="5" height="5" fill="#a9a8b1"/><rect x="10" y="10" width="5" height="5" fill="#c4c3c7"/><rect x="15" y="10" width="5" height="5" fill="#dad6d1"/><rect x="20" y="10" width="5" height="5" fill="#d6d8de"/><rect x="0" y="15" width="5" height="5" fill="#eaeaeb"/><rect x="5" y="15" width="5" height="5" fill="#edeae8"/><rect x="10" y="15" width="5" height="5" fill="#f1f2f4"/><rect x="15" y="15" width="5" height="5" fill="#d1d0d3"/><rect x="20" y="15" width="5" height="5" fill="#e5e2df"/></svg>
<svg class="ab" style="left:1760px;top:411px" width="40" height="20" shape-rendering="crispEdges"><rect x="5" y="0" width="5" height="5" fill="#f3f3f4"/><rect x="15" y="0" width="5" height="5" fill="#e7e4e1"/><rect x="25" y="0" width="5" height="5" fill="#dedde0"/><rect x="0" y="5" width="5" height="5" fill="#c3bbb4"/><rect x="5" y="5" width="5" height="5" fill="#c4c7cf"/><rect x="10" y="5" width="5" height="5" fill="#9b99a4"/><rect x="15" y="5" width="5" height="5" fill="#bbbec8"/><rect x="20" y="5" width="5" height="5" fill="#c1c0c6"/><rect x="25" y="5" width="5" height="5" fill="#c7cad2"/><rect x="30" y="5" width="5" height="5" fill="#d4cfc9"/><rect x="35" y="5" width="5" height="5" fill="#b4b3bb"/><rect x="0" y="10" width="5" height="5" fill="#a3a2a8"/><rect x="5" y="10" width="5" height="5" fill="#ccced5"/><rect x="10" y="10" width="5" height="5" fill="#d8d3ce"/><rect x="15" y="10" width="5" height="5" fill="#a1a0a9"/><rect x="20" y="10" width="5" height="5" fill="#d2d1d4"/><rect x="25" y="10" width="5" height="5" fill="#e4e0dd"/><rect x="30" y="10" width="5" height="5" fill="#b8b7bc"/><rect x="35" y="10" width="5" height="5" fill="#d3cec8"/><rect x="5" y="15" width="5" height="5" fill="#e5e2de"/><rect x="10" y="15" width="5" height="5" fill="#eae7e5"/><rect x="15" y="15" width="5" height="5" fill="#f2f2f3"/><rect x="35" y="15" width="5" height="5" fill="#dedee1"/></svg>
<svg class="ab" style="left:1810px;top:411px" width="25" height="20" shape-rendering="crispEdges"><rect x="5" y="0" width="5" height="5" fill="#f0efed"/><rect x="10" y="0" width="5" height="5" fill="#eff0f2"/><rect x="0" y="5" width="5" height="5" fill="#b4b8c2"/><rect x="5" y="5" width="5" height="5" fill="#a2a1ab"/><rect x="10" y="5" width="5" height="5" fill="#9a98a3"/><rect x="15" y="5" width="5" height="5" fill="#edeef0"/><rect x="20" y="5" width="5" height="5" fill="#ecedf0"/><rect x="0" y="10" width="5" height="5" fill="#98979e"/><rect x="5" y="10" width="5" height="5" fill="#d5d0cb"/><rect x="10" y="10" width="5" height="5" fill="#b0b4bf"/><rect x="15" y="10" width="5" height="5" fill="#ebecee"/><rect x="20" y="10" width="5" height="5" fill="#e3e3e5"/><rect x="0" y="15" width="5" height="5" fill="#ecedf0"/><rect x="10" y="15" width="5" height="5" fill="#f5f4f3"/></svg>
<svg class="ab" style="left:1577px;top:416px" width="3" height="11"><rect x="0.5" y="1" width="2" height="1.3" fill="#222"/><rect x="0.5" y="5" width="2" height="1.3" fill="#222"/><rect x="0.5" y="9" width="2" height="1.3" fill="#222"/></svg>
<svg class="ab" style="left:1495px;top:416px" width="40" height="10" shape-rendering="crispEdges"><rect x="0" y="0" width="5" height="5" fill="#a8a6ac"/><rect x="5" y="0" width="5" height="5" fill="#9f9ea4"/><rect x="10" y="0" width="5" height="5" fill="#bebdc1"/><rect x="15" y="0" width="5" height="5" fill="#b2b1b6"/><rect x="20" y="0" width="5" height="5" fill="#b2b1b6"/><rect x="25" y="0" width="5" height="5" fill="#d6d6d8"/><rect x="30" y="0" width="5" height="5" fill="#adacb2"/><rect x="35" y="0" width="5" height="5" fill="#c4c3c7"/><rect x="0" y="5" width="5" height="5" fill="#abaab0"/><rect x="5" y="5" width="5" height="5" fill="#e3e3e4"/><rect x="10" y="5" width="5" height="5" fill="#a2a1a7"/><rect x="15" y="5" width="5" height="5" fill="#dbdadd"/><rect x="20" y="5" width="5" height="5" fill="#dcdcde"/><rect x="25" y="5" width="5" height="5" fill="#c0bfc3"/><rect x="30" y="5" width="5" height="5" fill="#a7a5ab"/><rect x="35" y="5" width="5" height="5" fill="#dfdee1"/></svg>
<div class="ab" style="left:170px;top:452px;width:16px;height:16px;border:1px solid #d4d6da;border-radius:2px;background:#fff"></div>
<div class="ab t13" style="left:202px;top:451px;color:#2f88e6">删除办税员 获取绑定企业</div>
<div class="ab t13" style="left:370px;top:451px;color:#333">企业登录（新版）</div>
<svg class="ab" style="left:495px;top:451px" width="65" height="20" shape-rendering="crispEdges"><rect x="0" y="0" width="5" height="5" fill="#badafb"/><rect x="5" y="0" width="5" height="5" fill="#d1e6fc"/><rect x="25" y="0" width="5" height="5" fill="#c9e2fc"/><rect x="45" y="0" width="5" height="5" fill="#cfe5fc"/><rect x="50" y="0" width="5" height="5" fill="#daebfc"/><rect x="55" y="0" width="5" height="5" fill="#e1eefd"/><rect x="60" y="0" width="5" height="5" fill="#b8d9fb"/><rect x="0" y="5" width="5" height="5" fill="#97c7f9"/><rect x="5" y="5" width="5" height="5" fill="#d3e7fc"/><rect x="10" y="5" width="5" height="5" fill="#a0ccf9"/><rect x="15" y="5" width="5" height="5" fill="#75b5f7"/><rect x="20" y="5" width="5" height="5" fill="#cde4fc"/><rect x="25" y="5" width="5" height="5" fill="#83bcf8"/><rect x="30" y="5" width="5" height="5" fill="#9ecbf9"/><rect x="35" y="5" width="5" height="5" fill="#79b7f7"/><rect x="40" y="5" width="5" height="5" fill="#98c7f9"/><rect x="45" y="5" width="5" height="5" fill="#84bdf8"/><rect x="50" y="5" width="5" height="5" fill="#d3e7fc"/><rect x="55" y="5" width="5" height="5" fill="#85bdf8"/><rect x="60" y="5" width="5" height="5" fill="#97c7f9"/><rect x="0" y="10" width="5" height="5" fill="#69aef6"/><rect x="5" y="10" width="5" height="5" fill="#76b6f7"/><rect x="10" y="10" width="5" height="5" fill="#cae2fc"/><rect x="15" y="10" width="5" height="5" fill="#cae3fc"/><rect x="20" y="10" width="5" height="5" fill="#bddcfb"/><rect x="25" y="10" width="5" height="5" fill="#c5e0fb"/><rect x="30" y="10" width="5" height="5" fill="#c6e0fb"/><rect x="35" y="10" width="5" height="5" fill="#7bb8f7"/><rect x="40" y="10" width="5" height="5" fill="#c1defb"/><rect x="45" y="10" width="5" height="5" fill="#8fc3f8"/><rect x="50" y="10" width="5" height="5" fill="#8ec2f8"/><rect x="55" y="10" width="5" height="5" fill="#97c7f9"/><rect x="60" y="10" width="5" height="5" fill="#aed3fa"/><rect x="0" y="15" width="5" height="5" fill="#c4dffb"/><rect x="5" y="15" width="5" height="5" fill="#e7f2fd"/><rect x="10" y="15" width="5" height="5" fill="#e1effd"/><rect x="25" y="15" width="5" height="5" fill="#cce4fc"/><rect x="50" y="15" width="5" height="5" fill="#c1defb"/><rect x="60" y="15" width="5" height="5" fill="#cae3fc"/></svg>
<svg class="ab" style="left:595px;top:456px" width="45" height="10" shape-rendering="crispEdges"><rect x="0" y="0" width="5" height="5" fill="#f2f2f3"/><rect x="5" y="0" width="5" height="5" fill="#c8c7cb"/><rect x="10" y="0" width="5" height="5" fill="#c6c4c0"/><rect x="15" y="0" width="5" height="5" fill="#d5d4d7"/><rect x="20" y="0" width="5" height="5" fill="#d2d1d4"/><rect x="25" y="0" width="5" height="5" fill="#d4d2d0"/><rect x="30" y="0" width="5" height="5" fill="#d2d1d4"/><rect x="35" y="0" width="5" height="5" fill="#cbcdd2"/><rect x="40" y="0" width="5" height="5" fill="#cbcace"/><rect x="0" y="5" width="5" height="5" fill="#ebeaec"/><rect x="5" y="5" width="5" height="5" fill="#d6d5d8"/><rect x="10" y="5" width="5" height="5" fill="#cccac7"/><rect x="15" y="5" width="5" height="5" fill="#e2e2e4"/><rect x="20" y="5" width="5" height="5" fill="#f4f4f5"/><rect x="25" y="5" width="5" height="5" fill="#f4f3f4"/><rect x="35" y="5" width="5" height="5" fill="#f4f4f5"/></svg>
<div class="ab t13" style="left:639px;top:451px;color:#333">5777</div>
<div class="ab" style="left:639px;top:453px;width:3px;height:17px;background:#fff;opacity:0.6"></div>
<div class="ab t13" style="left:710px;top:450px;color:#333">******</div>
<div class="ab t13" style="left:815px;top:451px;width:114px;text-align:center;color:#2f88e6">162</div>
<div class="ab t13" style="left:929px;top:451px;width:91px;text-align:center;color:#2f88e6">4</div>
<div class="ab t13" style="left:1020px;top:451px;width:75px;text-align:center;color:#2f88e6">168</div>
<div class="ab t13" style="left:1104px;top:451px;color:#333">采集成功</div>
<div class="ab t13" style="left:1358px;top:451px;color:#333">2023-12-22 14:15:29</div>
<svg class="ab" style="left:1580px;top:451px" width="35" height="20" shape-rendering="crispEdges"><rect x="0" y="0" width="5" height="5" fill="#efedeb"/><rect x="5" y="0" width="5" height="5" fill="#d3d3d7"/><rect x="15" y="0" width="5" height="5" fill="#dcdbdf"/><rect x="20" y="0" width="5" height="5" fill="#edeef0"/><rect x="30" y="0" width="5" height="5" fill="#f6f5f4"/><rect x="0" y="5" width="5" height="5" fill="#babec7"/><rect x="5" y="5" width="5" height="5" fill="#97969d"/><rect x="10" y="5" width="5" height="5" fill="#c2bbb3"/><rect x="15" y="5" width="5" height="5" fill="#bcbbc0"/><rect x="20" y="5" width="5" height="5" fill="#b7aea5"/><rect x="25" y="5" width="5" height="5" fill="#aaa9af"/><rect x="30" y="5" width="5" height="5" fill="#cacacd"/><rect x="0" y="10" width="5" height="5" fill="#b5b4bb"/><rect x="5" y="10" width="5" height="5" fill="#c3c2c6"/><rect x="10" y="10" width="5" height="5" fill="#bfc3cb"/><rect x="15" y="10" width="5" height="5" fill="#a1a0aa"/><rect x="20" y="10" width="5" height="5" fill="#d1ccc6"/><rect x="25" y="10" width="5" height="5" fill="#b2b0b9"/><rect x="30" y="10" width="5" height="5" fill="#cbcbd0"/><rect x="10" y="15" width="5" height="5" fill="#e9e6e3"/><rect x="15" y="15" width="5" height="5" fill="#f5f6f7"/><rect x="25" y="15" width="5" height="5" fill="#ececee"/></svg>
<svg class="ab" style="left:1630px;top:451px" width="40" height="20" shape-rendering="crispEdges"><rect x="0" y="0" width="5" height="5" fill="#f4f4f5"/><rect x="5" y="0" width="5" height="5" fill="#eeeff1"/><rect x="10" y="0" width="5" height="5" fill="#e0dcd9"/><rect x="20" y="0" width="5" height="5" fill="#dbdde2"/><rect x="30" y="0" width="5" height="5" fill="#f5f4f3"/><rect x="0" y="5" width="5" height="5" fill="#b6b9c3"/><rect x="5" y="5" width="5" height="5" fill="#d3cec8"/><rect x="10" y="5" width="5" height="5" fill="#a6abb7"/><rect x="15" y="5" width="5" height="5" fill="#aeadb6"/><rect x="20" y="5" width="5" height="5" fill="#94929a"/><rect x="25" y="5" width="5" height="5" fill="#9e9ca3"/><rect x="30" y="5" width="5" height="5" fill="#97969d"/><rect x="35" y="5" width="5" height="5" fill="#bdb4ac"/><rect x="0" y="10" width="5" height="5" fill="#dcd7d3"/><rect x="5" y="10" width="5" height="5" fill="#cccbce"/><rect x="10" y="10" width="5" height="5" fill="#bfb7af"/><rect x="15" y="10" width="5" height="5" fill="#e2dfdb"/><rect x="20" y="10" width="5" height="5" fill="#cbcbce"/><rect x="25" y="10" width="5" height="5" fill="#e2dfdb"/><rect x="30" y="10" width="5" height="5" fill="#adacb5"/><rect x="35" y="10" width="5" height="5" fill="#a5a4aa"/><rect x="0" y="15" width="5" height="5" fill="#dad9dc"/><rect x="10" y="15" width="5" height="5" fill="#f4f4f5"/><rect x="15" y="15" width="5" height="5" fill="#eff0f2"/><rect x="25" y="15" width="5" height="5" fill="#e4e1dd"/><rect x="30" y="15" width="5" height="5" fill="#ebecef"/><rect x="35" y="15" width="5" height="5" fill="#dcdbdf"/></svg>
<svg class="ab" style="left:1680px;top:451px" width="30" height="20" shape-rendering="crispEdges"><rect x="0" y="0" width="5" height="5" fill="#d3d3d7"/><rect x="5" y="0" width="5" height="5" fill="#f2f2f4"/><rect x="10" y="0" width="5" height="5" fill="#dcdcdf"/><rect x="15" y="0" width="5" height="5" fill="#f5f4f5"/><rect x="25" y="0" width="5" height="5" fill="#cfced2"/><rect x="0" y="5" width="5" height="5" fill="#a5a3a9"/><rect x="5" y="5" width="5" height="5" fill="#b7bbc4"/><rect x="10" y="5" width="5" height="5" fill="#afaeb3"/><rect x="15" y="5" width="5" height="5" fill="#a3a2a8"/><rect x="20" y="5" width="5" height="5" fill="#a09fa9"/><rect x="25" y="5" width="5" height="5" fill="#a1a0a9"/><rect x="0" y="10" width="5" height="5" fill="#c8c7cd"/><rect x="5" y="10" width="5" height="5" fill="#d4cfc9"/><rect x="10" y="10" width="5" height="5" fill="#a7a6ac"/><rect x="15" y="10" width="5" height="5" fill="#e1deda"/><rect x="20" y="10" width="5" height="5" fill="#dcd7d3"/><rect x="25" y="10" width="5" height="5" fill="#c4bcb5"/><rect x="0" y="15" width="5" height="5" fill="#eeeef0"/><rect x="5" y="15" width="5" height="5" fill="#ecedf0"/><rect x="25" y="15" width="5" height="5" fill="#f2f2f2"/></svg>
<svg class="ab" style="left:1720px;top:451px" width="25" height="20" shape-rendering="crispEdges"><rect x="5" y="0" width="5" height="5" fill="#d8dae0"/><rect x="15" y="0" width="5" height="5" fill="#f0efed"/><rect x="20" y="0" width="5" height="5" fill="#ebeaec"/><rect x="0" y="5" width="5" height="5" fill="#c9c9ce"/><rect x="5" y="5" width="5" height="5" fill="#9c9ba2"/><rect x="10" y="5" width="5" height="5" fill="#bebdc2"/><rect x="15" y="5" width="5" height="5" fill="#a9a8ad"/><rect x="20" y="5" width="5" height="5" fill="#b4b8c2"/><rect x="0" y="10" width="5" height="5" fill="#b6b5ba"/><rect x="5" y="10" width="5" height="5" fill="#a9a8b1"/><rect x="10" y="10" width="5" height="5" fill="#c4c3c7"/><rect x="15" y="10" width="5" height="5" fill="#dad6d1"/><rect x="20" y="10" width="5" height="5" fill="#d6d8de"/><rect x="0" y="15" width="5" height="5" fill="#eaeaeb"/><rect x="5" y="15" width="5" height="5" fill="#edeae8"/><rect x="10" y="15" width="5" height="5" fill="#f1f2f4"/><rect x="15" y="15" width="5" height="5" fill="#d1d0d3"/><rect x="20" y="15" width="5" height="5" fill="#e5e2df"/></svg>
<svg class="ab" style="left:1760px;top:451px" width="40" height="20" shape-rendering="crispEdges"><rect x="5" y="0" width="5" height="5" fill="#f3f3f4"/><rect x="15" y="0" width="5" height="5" fill="#e7e4e1"/><rect x="25" y="0" width="5" height="5" fill="#dedde0"/><rect x="0" y="5" width="5" height="5" fill="#c3bbb4"/><rect x="5" y="5" width="5" height="5" fill="#c4c7cf"/><rect x="10" y="5" width="5" height="5" fill="#9b99a4"/><rect x="15" y="5" width="5" height="5" fill="#bbbec8"/><rect x="20" y="5" width="5" height="5" fill="#c1c0c6"/><rect x="25" y="5" width="5" height="5" fill="#c7cad2"/><rect x="30" y="5" width="5" height="5" fill="#d4cfc9"/><rect x="35" y="5" width="5" height="5" fill="#b4b3bb"/><rect x="0" y="10" width="5" height="5" fill="#a3a2a8"/><rect x="5" y="10" width="5" height="5" fill="#ccced5"/><rect x="10" y="10" width="5" height="5" fill="#d8d3ce"/><rect x="15" y="10" width="5" height="5" fill="#a1a0a9"/><rect x="20" y="10" width="5" height="5" fill="#d2d1d4"/><rect x="25" y="10" width="5" height="5" fill="#e4e0dd"/><rect x="30" y="10" width="5" height="5" fill="#b8b7bc"/><rect x="35" y="10" width="5" height="5" fill="#d3cec8"/><rect x="5" y="15" width="5" height="5" fill="#e5e2de"/><rect x="10" y="15" width="5" height="5" fill="#eae7e5"/><rect x="15" y="15" width="5" height="5" fill="#f2f2f3"/><rect x="35" y="15" width="5" height="5" fill="#dedee1"/></svg>
<svg class="ab" style="left:1810px;top:451px" width="25" height="20" shape-rendering="crispEdges"><rect x="5" y="0" width="5" height="5" fill="#f0efed"/><rect x="10" y="0" width="5" height="5" fill="#eff0f2"/><rect x="0" y="5" width="5" height="5" fill="#b4b8c2"/><rect x="5" y="5" width="5" height="5" fill="#a2a1ab"/><rect x="10" y="5" width="5" height="5" fill="#9a98a3"/><rect x="15" y="5" width="5" height="5" fill="#edeef0"/><rect x="20" y="5" width="5" height="5" fill="#ecedf0"/><rect x="0" y="10" width="5" height="5" fill="#98979e"/><rect x="5" y="10" width="5" height="5" fill="#d5d0cb"/><rect x="10" y="10" width="5" height="5" fill="#b0b4bf"/><rect x="15" y="10" width="5" height="5" fill="#ebecee"/><rect x="20" y="10" width="5" height="5" fill="#e3e3e5"/><rect x="0" y="15" width="5" height="5" fill="#ecedf0"/><rect x="10" y="15" width="5" height="5" fill="#f5f4f3"/></svg>
<svg class="ab" style="left:1577px;top:456px" width="3" height="11"><rect x="0.5" y="1" width="2" height="1.3" fill="#222"/><rect x="0.5" y="5" width="2" height="1.3" fill="#222"/><rect x="0.5" y="9" width="2" height="1.3" fill="#222"/></svg>
<div class="ab" style="left:170px;top:492px;width:16px;height:16px;border:1px solid #d4d6da;border-radius:2px;background:#fff"></div>
<div class="ab t13" style="left:202px;top:491px;color:#2f88e6">删除办税员 获取绑定企业</div>
<div class="ab t13" style="left:370px;top:491px;color:#333">企业登录（新版）</div>
<svg class="ab" style="left:495px;top:491px" width="65" height="20" shape-rendering="crispEdges"><rect x="0" y="0" width="5" height="5" fill="#c2defb"/><rect x="5" y="0" width="5" height="5" fill="#e1eefd"/><rect x="10" y="0" width="5" height="5" fill="#bbdafb"/><rect x="15" y="0" width="5" height="5" fill="#e6f2fd"/><rect x="25" y="0" width="5" height="5" fill="#c5e0fb"/><rect x="30" y="0" width="5" height="5" fill="#cfe5fc"/><rect x="40" y="0" width="5" height="5" fill="#f3f9fe"/><rect x="45" y="0" width="5" height="5" fill="#c6e0fb"/><rect x="50" y="0" width="5" height="5" fill="#c7e1fb"/><rect x="55" y="0" width="5" height="5" fill="#c2defb"/><rect x="60" y="0" width="5" height="5" fill="#d4e8fc"/><rect x="0" y="5" width="5" height="5" fill="#99c8f9"/><rect x="5" y="5" width="5" height="5" fill="#d0e6fc"/><rect x="10" y="5" width="5" height="5" fill="#71b3f7"/><rect x="15" y="5" width="5" height="5" fill="#b2d6fa"/><rect x="20" y="5" width="5" height="5" fill="#74b4f7"/><rect x="25" y="5" width="5" height="5" fill="#76b5f7"/><rect x="30" y="5" width="5" height="5" fill="#83bcf8"/><rect x="35" y="5" width="5" height="5" fill="#9bc9f9"/><rect x="40" y="5" width="5" height="5" fill="#9dcaf9"/><rect x="45" y="5" width="5" height="5" fill="#b9d9fb"/><rect x="50" y="5" width="5" height="5" fill="#9dcaf9"/><rect x="55" y="5" width="5" height="5" fill="#9fcbf9"/><rect x="60" y="5" width="5" height="5" fill="#7fbaf7"/><rect x="0" y="10" width="5" height="5" fill="#96c7f9"/><rect x="5" y="10" width="5" height="5" fill="#c8e1fb"/><rect x="10" y="10" width="5" height="5" fill="#add3fa"/><rect x="15" y="10" width="5" height="5" fill="#a0ccf9"/><rect x="20" y="10" width="5" height="5" fill="#8bc1f8"/><rect x="25" y="10" width="5" height="5" fill="#87bef8"/><rect x="30" y="10" width="5" height="5" fill="#aad1fa"/><rect x="35" y="10" width="5" height="5" fill="#b2d6fa"/><rect x="40" y="10" width="5" height="5" fill="#8cc1f8"/><rect x="45" y="10" width="5" height="5" fill="#a4cef9"/><rect x="50" y="10" width="5" height="5" fill="#76b5f7"/><rect x="55" y="10" width="5" height="5" fill="#70b2f7"/><rect x="60" y="10" width="5" height="5" fill="#7db9f7"/><rect x="0" y="15" width="5" height="5" fill="#c4dffb"/><rect x="10" y="15" width="5" height="5" fill="#cee5fc"/><rect x="15" y="15" width="5" height="5" fill="#c2defb"/><rect x="20" y="15" width="5" height="5" fill="#cfe5fc"/><rect x="30" y="15" width="5" height="5" fill="#b7d8fb"/><rect x="35" y="15" width="5" height="5" fill="#bddcfb"/><rect x="50" y="15" width="5" height="5" fill="#c7e1fb"/><rect x="55" y="15" width="5" height="5" fill="#cee5fc"/><rect x="60" y="15" width="5" height="5" fill="#badafb"/></svg>
<svg class="ab" style="left:595px;top:496px" width="45" height="10" shape-rendering="crispEdges"><rect x="0" y="0" width="5" height="5" fill="#f2f2f3"/><rect x="5" y="0" width="5" height="5" fill="#dddbd9"/><rect x="10" y="0" width="5" height="5" fill="#b8bac0"/><rect x="15" y="0" width="5" height="5" fill="#e1e2e5"/><rect x="20" y="0" width="5" height="5" fill="#dcdbdd"/><rect x="25" y="0" width="5" height="5" fill="#c5c4c8"/><rect x="30" y="0" width="5" height="5" fill="#d2d3d7"/><rect x="35" y="0" width="5" height="5" fill="#c6c5c9"/><rect x="40" y="0" width="5" height="5" fill="#d1d3d7"/><rect x="0" y="5" width="5" height="5" fill="#f6f6f7"/><rect x="5" y="5" width="5" height="5" fill="#d8d6d4"/><rect x="10" y="5" width="5" height="5" fill="#c5c3bf"/><rect x="15" y="5" width="5" height="5" fill="#dbdadc"/><rect x="20" y="5" width="5" height="5" fill="#f8f8f9"/><rect x="40" y="5" width="5" height="5" fill="#e8e8ea"/></svg>
<div class="ab t13" style="left:639px;top:491px;color:#333">2704</div>
<div class="ab" style="left:639px;top:493px;width:3px;height:17px;background:#fff;opacity:0.6"></div>
<div class="ab t13" style="left:710px;top:490px;color:#333">******</div>
<div class="ab t13" style="left:815px;top:491px;width:114px;text-align:center;color:#2f88e6">79</div>
<div class="ab t13" style="left:929px;top:491px;width:91px;text-align:center;color:#2f88e6">1</div>
<div class="ab t13" style="left:1020px;top:491px;width:75px;text-align:center;color:#2f88e6">78</div>
<div class="ab t13" style="left:1104px;top:491px;color:#333">采集成功</div>
<div class="ab t13" style="left:1358px;top:491px;color:#333">2023-12-22 14:22:32</div>
<svg class="ab" style="left:1580px;top:491px" width="35" height="20" shape-rendering="crispEdges"><rect x="0" y="0" width="5" height="5" fill="#efedeb"/><rect x="5" y="0" width="5" height="5" fill="#d3d3d7"/><rect x="15" y="0" width="5" height="5" fill="#dcdbdf"/><rect x="20" y="0" width="5" height="5" fill="#edeef0"/><rect x="30" y="0" width="5" height="5" fill="#f6f5f4"/><rect x="0" y="5" width="5" height="5" fill="#babec7"/><rect x="5" y="5" width="5" height="5" fill="#97969d"/><rect x="10" y="5" width="5" height="5" fill="#c2bbb3"/><rect x="15" y="5" width="5" height="5" fill="#bcbbc0"/><rect x="20" y="5" width="5" height="5" fill="#b7aea5"/><rect x="25" y="5" width="5" height="5" fill="#aaa9af"/><rect x="30" y="5" width="5" height="5" fill="#cacacd"/><rect x="0" y="10" width="5" height="5" fill="#b5b4bb"/><rect x="5" y="10" width="5" height="5" fill="#c3c2c6"/><rect x="10" y="10" width="5" height="5" fill="#bfc3cb"/><rect x="15" y="10" width="5" height="5" fill="#a1a0aa"/><rect x="20" y="10" width="5" height="5" fill="#d1ccc6"/><rect x="25" y="10" width="5" height="5" fill="#b2b0b9"/><rect x="30" y="10" width="5" height="5" fill="#cbcbd0"/><rect x="10" y="15" width="5" height="5" fill="#e9e6e3"/><rect x="15" y="15" width="5" height="5" fill="#f5f6f7"/><rect x="25" y="15" width="5" height="5" fill="#ececee"/></svg>
<svg class="ab" style="left:1630px;top:491px" width="40" height="20" shape-rendering="crispEdges"><rect x="0" y="0" width="5" height="5" fill="#f4f4f5"/><rect x="5" y="0" width="5" height="5" fill="#eeeff1"/><rect x="10" y="0" width="5" height="5" fill="#e0dcd9"/><rect x="20" y="0" width="5" height="5" fill="#dbdde2"/><rect x="30" y="0" width="5" height="5" fill="#f5f4f3"/><rect x="0" y="5" width="5" height="5" fill="#b6b9c3"/><rect x="5" y="5" width="5" height="5" fill="#d3cec8"/><rect x="10" y="5" width="5" height="5" fill="#a6abb7"/><rect x="15" y="5" width="5" height="5" fill="#aeadb6"/><rect x="20" y="5" width="5" height="5" fill="#94929a"/><rect x="25" y="5" width="5" height="5" fill="#9e9ca3"/><rect x="30" y="5" width="5" height="5" fill="#97969d"/><rect x="35" y="5" width="5" height="5" fill="#bdb4ac"/><rect x="0" y="10" width="5" height="5" fill="#dcd7d3"/><rect x="5" y="10" width="5" height="5" fill="#cccbce"/><rect x="10" y="10" width="5" height="5" fill="#bfb7af"/><rect x="15" y="10" width="5" height="5" fill="#e2dfdb"/><rect x="20" y="10" width="5" height="5" fill="#cbcbce"/><rect x="25" y="10" width="5" height="5" fill="#e2dfdb"/><rect x="30" y="10" width="5" height="5" fill="#adacb5"/><rect x="35" y="10" width="5" height="5" fill="#a5a4aa"/><rect x="0" y="15" width="5" height="5" fill="#dad9dc"/><rect x="10" y="15" width="5" height="5" fill="#f4f4f5"/><rect x="15" y="15" width="5" height="5" fill="#eff0f2"/><rect x="25" y="15" width="5" height="5" fill="#e4e1dd"/><rect x="30" y="15" width="5" height="5" fill="#ebecef"/><rect x="35" y="15" width="5" height="5" fill="#dcdbdf"/></svg>
<svg class="ab" style="left:1680px;top:491px" width="30" height="20" shape-rendering="crispEdges"><rect x="0" y="0" width="5" height="5" fill="#d3d3d7"/><rect x="5" y="0" width="5" height="5" fill="#f2f2f4"/><rect x="10" y="0" width="5" height="5" fill="#dcdcdf"/><rect x="15" y="0" width="5" height="5" fill="#f5f4f5"/><rect x="25" y="0" width="5" height="5" fill="#cfced2"/><rect x="0" y="5" width="5" height="5" fill="#a5a3a9"/><rect x="5" y="5" width="5" height="5" fill="#b7bbc4"/><rect x="10" y="5" width="5" height="5" fill="#afaeb3"/><rect x="15" y="5" width="5" height="5" fill="#a3a2a8"/><rect x="20" y="5" width="5" height="5" fill="#a09fa9"/><rect x="25" y="5" width="5" height="5" fill="#a1a0a9"/><rect x="0" y="10" width="5" height="5" fill="#c8c7cd"/><rect x="5" y="10" width="5" height="5" fill="#d4cfc9"/><rect x="10" y="10" width="5" height="5" fill="#a7a6ac"/><rect x="15" y="10" width="5" height="5" fill="#e1deda"/><rect x="20" y="10" width="5" height="5" fill="#dcd7d3"/><rect x="25" y="10" width="5" height="5" fill="#c4bcb5"/><rect x="0" y="15" width="5" height="5" fill="#eeeef0"/><rect x="5" y="15" width="5" height="5" fill="#ecedf0"/><rect x="25" y="15" width="5" height="5" fill="#f2f2f2"/></svg>
<svg class="ab" style="left:1720px;top:491px" width="25" height="20" shape-rendering="crispEdges"><rect x="5" y="0" width="5" height="5" fill="#d8dae0"/><rect x="15" y="0" width="5" height="5" fill="#f0efed"/><rect x="20" y="0" width="5" height="5" fill="#ebeaec"/><rect x="0" y="5" width="5" height="5" fill="#c9c9ce"/><rect x="5" y="5" width="5" height="5" fill="#9c9ba2"/><rect x="10" y="5" width="5" height="5" fill="#bebdc2"/><rect x="15" y="5" width="5" height="5" fill="#a9a8ad"/><rect x="20" y="5" width="5" height="5" fill="#b4b8c2"/><rect x="0" y="10" width="5" height="5" fill="#b6b5ba"/><rect x="5" y="10" width="5" height="5" fill="#a9a8b1"/><rect x="10" y="10" width="5" height="5" fill="#c4c3c7"/><rect x="15" y="10" width="5" height="5" fill="#dad6d1"/><rect x="20" y="10" width="5" height="5" fill="#d6d8de"/><rect x="0" y="15" width="5" height="5" fill="#eaeaeb"/><rect x="5" y="15" width="5" height="5" fill="#edeae8"/><rect x="10" y="15" width="5" height="5" fill="#f1f2f4"/><rect x="15" y="15" width="5" height="5" fill="#d1d0d3"/><rect x="20" y="15" width="5" height="5" fill="#e5e2df"/></svg>
<svg class="ab" style="left:1760px;top:491px" width="40" height="20" shape-rendering="crispEdges"><rect x="5" y="0" width="5" height="5" fill="#f3f3f4"/><rect x="15" y="0" width="5" height="5" fill="#e7e4e1"/><rect x="25" y="0" width="5" height="5" fill="#dedde0"/><rect x="0" y="5" width="5" height="5" fill="#c3bbb4"/><rect x="5" y="5" width="5" height="5" fill="#c4c7cf"/><rect x="10" y="5" width="5" height="5" fill="#9b99a4"/><rect x="15" y="5" width="5" height="5" fill="#bbbec8"/><rect x="20" y="5" width="5" height="5" fill="#c1c0c6"/><rect x="25" y="5" width="5" height="5" fill="#c7cad2"/><rect x="30" y="5" width="5" height="5" fill="#d4cfc9"/><rect x="35" y="5" width="5" height="5" fill="#b4b3bb"/><rect x="0" y="10" width="5" height="5" fill="#a3a2a8"/><rect x="5" y="10" width="5" height="5" fill="#ccced5"/><rect x="10" y="10" width="5" height="5" fill="#d8d3ce"/><rect x="15" y="10" width="5" height="5" fill="#a1a0a9"/><rect x="20" y="10" width="5" height="5" fill="#d2d1d4"/><rect x="25" y="10" width="5" height="5" fill="#e4e0dd"/><rect x="30" y="10" width="5" height="5" fill="#b8b7bc"/><rect x="35" y="10" width="5" height="5" fill="#d3cec8"/><rect x="5" y="15" width="5" height="5" fill="#e5e2de"/><rect x="10" y="15" width="5" height="5" fill="#eae7e5"/><rect x="15" y="15" width="5" height="5" fill="#f2f2f3"/><rect x="35" y="15" width="5" height="5" fill="#dedee1"/></svg>
<svg class="ab" style="left:1810px;top:491px" width="25" height="20" shape-rendering="crispEdges"><rect x="5" y="0" width="5" height="5" fill="#f0efed"/><rect x="10" y="0" width="5" height="5" fill="#eff0f2"/><rect x="0" y="5" width="5" height="5" fill="#b4b8c2"/><rect x="5" y="5" width="5" height="5" fill="#a2a1ab"/><rect x="10" y="5" width="5" height="5" fill="#9a98a3"/><rect x="15" y="5" width="5" height="5" fill="#edeef0"/><rect x="20" y="5" width="5" height="5" fill="#ecedf0"/><rect x="0" y="10" width="5" height="5" fill="#98979e"/><rect x="5" y="10" width="5" height="5" fill="#d5d0cb"/><rect x="10" y="10" width="5" height="5" fill="#b0b4bf"/><rect x="15" y="10" width="5" height="5" fill="#ebecee"/><rect x="20" y="10" width="5" height="5" fill="#e3e3e5"/><rect x="0" y="15" width="5" height="5" fill="#ecedf0"/><rect x="10" y="15" width="5" height="5" fill="#f5f4f3"/></svg>
<svg class="ab" style="left:1577px;top:496px" width="3" height="11"><rect x="0.5" y="1" width="2" height="1.3" fill="#222"/><rect x="0.5" y="5" width="2" height="1.3" fill="#222"/><rect x="0.5" y="9" width="2" height="1.3" fill="#222"/></svg>
<div class="ab" style="left:170px;top:532px;width:16px;height:16px;border:1px solid #d4d6da;border-radius:2px;background:#fff"></div>
<div class="ab t13" style="left:202px;top:531px;color:#2f88e6">删除办税员 获取绑定企业</div>
<div class="ab t13" style="left:370px;top:531px;color:#333">企业登录（新版）</div>
<svg class="ab" style="left:495px;top:531px" width="30" height="20" shape-rendering="crispEdges"><rect x="0" y="0" width="5" height="5" fill="#d3e7fc"/><rect x="10" y="0" width="5" height="5" fill="#bcdbfb"/><rect x="20" y="0" width="5" height="5" fill="#cae2fc"/><rect x="0" y="5" width="5" height="5" fill="#74b4f7"/><rect x="5" y="5" width="5" height="5" fill="#aad1fa"/><rect x="10" y="5" width="5" height="5" fill="#91c4f8"/><rect x="15" y="5" width="5" height="5" fill="#badafb"/><rect x="20" y="5" width="5" height="5" fill="#95c6f9"/><rect x="25" y="5" width="5" height="5" fill="#bbdafb"/><rect x="0" y="10" width="5" height="5" fill="#aad1fa"/><rect x="5" y="10" width="5" height="5" fill="#aad1fa"/><rect x="10" y="10" width="5" height="5" fill="#bfddfb"/><rect x="15" y="10" width="5" height="5" fill="#cae2fc"/><rect x="20" y="10" width="5" height="5" fill="#c3dffb"/><rect x="25" y="10" width="5" height="5" fill="#7eb9f7"/><rect x="0" y="15" width="5" height="5" fill="#eff6fe"/><rect x="5" y="15" width="5" height="5" fill="#deedfd"/><rect x="10" y="15" width="5" height="5" fill="#eef6fe"/></svg>
<svg class="ab" style="left:595px;top:536px" width="45" height="10" shape-rendering="crispEdges"><rect x="5" y="0" width="5" height="5" fill="#d4d6d9"/><rect x="10" y="0" width="5" height="5" fill="#bbbabf"/><rect x="15" y="0" width="5" height="5" fill="#d4d3d6"/><rect x="20" y="0" width="5" height="5" fill="#e0dfdd"/><rect x="25" y="0" width="5" height="5" fill="#c2c1c5"/><rect x="30" y="0" width="5" height="5" fill="#c7c6ca"/><rect x="35" y="0" width="5" height="5" fill="#d1d0d3"/><rect x="40" y="0" width="5" height="5" fill="#d7d8dc"/><rect x="0" y="5" width="5" height="5" fill="#f4f5f5"/><rect x="5" y="5" width="5" height="5" fill="#dbdad8"/><rect x="10" y="5" width="5" height="5" fill="#c6c8cd"/><rect x="15" y="5" width="5" height="5" fill="#e4e3e2"/><rect x="20" y="5" width="5" height="5" fill="#f9f9f9"/><rect x="30" y="5" width="5" height="5" fill="#f7f7f8"/><rect x="35" y="5" width="5" height="5" fill="#f6f7f7"/><rect x="40" y="5" width="5" height="5" fill="#f7f7f6"/></svg>
<div class="ab t13" style="left:639px;top:531px;color:#333">4218</div>
<div class="ab" style="left:639px;top:533px;width:3px;height:17px;background:#fff;opacity:0.6"></div>
<div class="ab t13" style="left:710px;top:530px;color:#333">******</div>
<div class="ab t13" style="left:815px;top:531px;width:114px;text-align:center;color:#2f88e6">55</div>
<div class="ab t13" style="left:929px;top:531px;width:91px;text-align:center;color:#2f88e6">11</div>
<div class="ab t13" style="left:1020px;top:531px;width:75px;text-align:center;color:#2f88e6">78</div>
<div class="ab t13" style="left:1104px;top:531px;color:#333">采集成功</div>
<div class="ab t13" style="left:1358px;top:531px;color:#333">2023-11-29 09:42:21</div>
<svg class="ab" style="left:1580px;top:531px" width="35" height="20" shape-rendering="crispEdges"><rect x="0" y="0" width="5" height="5" fill="#efedeb"/><rect x="5" y="0" width="5" height="5" fill="#d3d3d7"/><rect x="15" y="0" width="5" height="5" fill="#dcdbdf"/><rect x="20" y="0" width="5" height="5" fill="#edeef0"/><rect x="30" y="0" width="5" height="5" fill="#f6f5f4"/><rect x="0" y="5" width="5" height="5" fill="#babec7"/><rect x="5" y="5" width="5" height="5" fill="#97969d"/><rect x="10" y="5" width="5" height="5" fill="#c2bbb3"/><rect x="15" y="5" width="5" height="5" fill="#bcbbc0"/><rect x="20" y="5" width="5" height="5" fill="#b7aea5"/><rect x="25" y="5" width="5" height="5" fill="#aaa9af"/><rect x="30" y="5" width="5" height="5" fill="#cacacd"/><rect x="0" y="10" width="5" height="5" fill="#b5b4bb"/><rect x="5" y="10" width="5" height="5" fill="#c3c2c6"/><rect x="10" y="10" width="5" height="5" fill="#bfc3cb"/><rect x="15" y="10" width="5" height="5" fill="#a1a0aa"/><rect x="20" y="10" width="5" height="5" fill="#d1ccc6"/><rect x="25" y="10" width="5" height="5" fill="#b2b0b9"/><rect x="30" y="10" width="5" height="5" fill="#cbcbd0"/><rect x="10" y="15" width="5" height="5" fill="#e9e6e3"/><rect x="15" y="15" width="5" height="5" fill="#f5f6f7"/><rect x="25" y="15" width="5" height="5" fill="#ececee"/></svg>
<svg class="ab" style="left:1630px;top:531px" width="40" height="20" shape-rendering="crispEdges"><rect x="0" y="0" width="5" height="5" fill="#f4f4f5"/><rect x="5" y="0" width="5" height="5" fill="#eeeff1"/><rect x="10" y="0" width="5" height="5" fill="#e0dcd9"/><rect x="20" y="0" width="5" height="5" fill="#dbdde2"/><rect x="30" y="0" width="5" height="5" fill="#f5f4f3"/><rect x="0" y="5" width="5" height="5" fill="#b6b9c3"/><rect x="5" y="5" width="5" height="5" fill="#d3cec8"/><rect x="10" y="5" width="5" height="5" fill="#a6abb7"/><rect x="15" y="5" width="5" height="5" fill="#aeadb6"/><rect x="20" y="5" width="5" height="5" fill="#94929a"/><rect x="25" y="5" width="5" height="5" fill="#9e9ca3"/><rect x="30" y="5" width="5" height="5" fill="#97969d"/><rect x="35" y="5" width="5" height="5" fill="#bdb4ac"/><rect x="0" y="10" width="5" height="5" fill="#dcd7d3"/><rect x="5" y="10" width="5" height="5" fill="#cccbce"/><rect x="10" y="10" width="5" height="5" fill="#bfb7af"/><rect x="15" y="10" width="5" height="5" fill="#e2dfdb"/><rect x="20" y="10" width="5" height="5" fill="#cbcbce"/><rect x="25" y="10" width="5" height="5" fill="#e2dfdb"/><rect x="30" y="10" width="5" height="5" fill="#adacb5"/><rect x="35" y="10" width="5" height="5" fill="#a5a4aa"/><rect x="0" y="15" width="5" height="5" fill="#dad9dc"/><rect x="10" y="15" width="5" height="5" fill="#f4f4f5"/><rect x="15" y="15" width="5" height="5" fill="#eff0f2"/><rect x="25" y="15" width="5" height="5" fill="#e4e1dd"/><rect x="30" y="15" width="5" height="5" fill="#ebecef"/><rect x="35" y="15" width="5" height="5" fill="#dcdbdf"/></svg>
<svg class="ab" style="left:1680px;top:531px" width="30" height="20" shape-rendering="crispEdges"><rect x="0" y="0" width="5" height="5" fill="#d3d3d7"/><rect x="5" y="0" width="5" height="5" fill="#f2f2f4"/><rect x="10" y="0" width="5" height="5" fill="#dcdcdf"/><rect x="15" y="0" width="5" height="5" fill="#f5f4f5"/><rect x="25" y="0" width="5" height="5" fill="#cfced2"/><rect x="0" y="5" width="5" height="5" fill="#a5a3a9"/><rect x="5" y="5" width="5" height="5" fill="#b7bbc4"/><rect x="10" y="5" width="5" height="5" fill="#afaeb3"/><rect x="15" y="5" width="5" height="5" fill="#a3a2a8"/><rect x="20" y="5" width="5" height="5" fill="#a09fa9"/><rect x="25" y="5" width="5" height="5" fill="#a1a0a9"/><rect x="0" y="10" width="5" height="5" fill="#c8c7cd"/><rect x="5" y="10" width="5" height="5" fill="#d4cfc9"/><rect x="10" y="10" width="5" height="5" fill="#a7a6ac"/><rect x="15" y="10" width="5" height="5" fill="#e1deda"/><rect x="20" y="10" width="5" height="5" fill="#dcd7d3"/><rect x="25" y="10" width="5" height="5" fill="#c4bcb5"/><rect x="0" y="15" width="5" height="5" fill="#eeeef0"/><rect x="5" y="15" width="5" height="5" fill="#ecedf0"/><rect x="25" y="15" width="5" height="5" fill="#f2f2f2"/></svg>
<svg class="ab" style="left:1720px;top:531px" width="25" height="20" shape-rendering="crispEdges"><rect x="5" y="0" width="5" height="5" fill="#d8dae0"/><rect x="15" y="0" width="5" height="5" fill="#f0efed"/><rect x="20" y="0" width="5" height="5" fill="#ebeaec"/><rect x="0" y="5" width="5" height="5" fill="#c9c9ce"/><rect x="5" y="5" width="5" height="5" fill="#9c9ba2"/><rect x="10" y="5" width="5" height="5" fill="#bebdc2"/><rect x="15" y="5" width="5" height="5" fill="#a9a8ad"/><rect x="20" y="5" width="5" height="5" fill="#b4b8c2"/><rect x="0" y="10" width="5" height="5" fill="#b6b5ba"/><rect x="5" y="10" width="5" height="5" fill="#a9a8b1"/><rect x="10" y="10" width="5" height="5" fill="#c4c3c7"/><rect x="15" y="10" width="5" height="5" fill="#dad6d1"/><rect x="20" y="10" width="5" height="5" fill="#d6d8de"/><rect x="0" y="15" width="5" height="5" fill="#eaeaeb"/><rect x="5" y="15" width="5" height="5" fill="#edeae8"/><rect x="10" y="15" width="5" height="5" fill="#f1f2f4"/><rect x="15" y="15" width="5" height="5" fill="#d1d0d3"/><rect x="20" y="15" width="5" height="5" fill="#e5e2df"/></svg>
<svg class="ab" style="left:1760px;top:531px" width="40" height="20" shape-rendering="crispEdges"><rect x="5" y="0" width="5" height="5" fill="#f3f3f4"/><rect x="15" y="0" width="5" height="5" fill="#e7e4e1"/><rect x="25" y="0" width="5" height="5" fill="#dedde0"/><rect x="0" y="5" width="5" height="5" fill="#c3bbb4"/><rect x="5" y="5" width="5" height="5" fill="#c4c7cf"/><rect x="10" y="5" width="5" height="5" fill="#9b99a4"/><rect x="15" y="5" width="5" height="5" fill="#bbbec8"/><rect x="20" y="5" width="5" height="5" fill="#c1c0c6"/><rect x="25" y="5" width="5" height="5" fill="#c7cad2"/><rect x="30" y="5" width="5" height="5" fill="#d4cfc9"/><rect x="35" y="5" width="5" height="5" fill="#b4b3bb"/><rect x="0" y="10" width="5" height="5" fill="#a3a2a8"/><rect x="5" y="10" width="5" height="5" fill="#ccced5"/><rect x="10" y="10" width="5" height="5" fill="#d8d3ce"/><rect x="15" y="10" width="5" height="5" fill="#a1a0a9"/><rect x="20" y="10" width="5" height="5" fill="#d2d1d4"/><rect x="25" y="10" width="5" height="5" fill="#e4e0dd"/><rect x="30" y="10" width="5" height="5" fill="#b8b7bc"/><rect x="35" y="10" width="5" height="5" fill="#d3cec8"/><rect x="5" y="15" width="5" height="5" fill="#e5e2de"/><rect x="10" y="15" width="5" height="5" fill="#eae7e5"/><rect x="15" y="15" width="5" height="5" fill="#f2f2f3"/><rect x="35" y="15" width="5" height="5" fill="#dedee1"/></svg>
<svg class="ab" style="left:1810px;top:531px" width="25" height="20" shape-rendering="crispEdges"><rect x="5" y="0" width="5" height="5" fill="#f0efed"/><rect x="10" y="0" width="5" height="5" fill="#eff0f2"/><rect x="0" y="5" width="5" height="5" fill="#b4b8c2"/><rect x="5" y="5" width="5" height="5" fill="#a2a1ab"/><rect x="10" y="5" width="5" height="5" fill="#9a98a3"/><rect x="15" y="5" width="5" height="5" fill="#edeef0"/><rect x="20" y="5" width="5" height="5" fill="#ecedf0"/><rect x="0" y="10" width="5" height="5" fill="#98979e"/><rect x="5" y="10" width="5" height="5" fill="#d5d0cb"/><rect x="10" y="10" width="5" height="5" fill="#b0b4bf"/><rect x="15" y="10" width="5" height="5" fill="#ebecee"/><rect x="20" y="10" width="5" height="5" fill="#e3e3e5"/><rect x="0" y="15" width="5" height="5" fill="#ecedf0"/><rect x="10" y="15" width="5" height="5" fill="#f5f4f3"/></svg>
<svg class="ab" style="left:1577px;top:536px" width="3" height="11"><rect x="0.5" y="1" width="2" height="1.3" fill="#222"/><rect x="0.5" y="5" width="2" height="1.3" fill="#222"/><rect x="0.5" y="9" width="2" height="1.3" fill="#222"/></svg>
<div class="ab" style="left:170px;top:572px;width:16px;height:16px;border:1px solid #d4d6da;border-radius:2px;background:#fff"></div>
<div class="ab t13" style="left:202px;top:571px;color:#2f88e6">删除办税员 获取绑定企业</div>
<div class="ab t13" style="left:370px;top:571px;color:#333">企业登录（新版）</div>
<svg class="ab" style="left:495px;top:571px" width="65" height="20" shape-rendering="crispEdges"><rect x="5" y="0" width="5" height="5" fill="#e1eefd"/><rect x="10" y="0" width="5" height="5" fill="#ebf4fd"/><rect x="15" y="0" width="5" height="5" fill="#badafb"/><rect x="20" y="0" width="5" height="5" fill="#b6d8fb"/><rect x="30" y="0" width="5" height="5" fill="#dfeefd"/><rect x="35" y="0" width="5" height="5" fill="#c6e0fb"/><rect x="45" y="0" width="5" height="5" fill="#e0eefd"/><rect x="50" y="0" width="5" height="5" fill="#d1e6fc"/><rect x="0" y="5" width="5" height="5" fill="#76b5f7"/><rect x="5" y="5" width="5" height="5" fill="#a5cefa"/><rect x="10" y="5" width="5" height="5" fill="#a8d0fa"/><rect x="15" y="5" width="5" height="5" fill="#bedcfb"/><rect x="20" y="5" width="5" height="5" fill="#abd2fa"/><rect x="25" y="5" width="5" height="5" fill="#cfe5fc"/><rect x="30" y="5" width="5" height="5" fill="#aed3fa"/><rect x="35" y="5" width="5" height="5" fill="#85bdf8"/><rect x="40" y="5" width="5" height="5" fill="#81bbf8"/><rect x="45" y="5" width="5" height="5" fill="#c6e0fb"/><rect x="50" y="5" width="5" height="5" fill="#9dcaf9"/><rect x="55" y="5" width="5" height="5" fill="#7bb8f7"/><rect x="60" y="5" width="5" height="5" fill="#92c4f8"/><rect x="0" y="10" width="5" height="5" fill="#9bc9f9"/><rect x="5" y="10" width="5" height="5" fill="#abd2fa"/><rect x="10" y="10" width="5" height="5" fill="#72b3f7"/><rect x="15" y="10" width="5" height="5" fill="#9bc9f9"/><rect x="20" y="10" width="5" height="5" fill="#7bb8f7"/><rect x="25" y="10" width="5" height="5" fill="#88bff8"/><rect x="30" y="10" width="5" height="5" fill="#6cb0f6"/><rect x="35" y="10" width="5" height="5" fill="#b6d8fb"/><rect x="40" y="10" width="5" height="5" fill="#b4d6fa"/><rect x="45" y="10" width="5" height="5" fill="#8ec2f8"/><rect x="50" y="10" width="5" height="5" fill="#75b5f7"/><rect x="55" y="10" width="5" height="5" fill="#71b3f7"/><rect x="60" y="10" width="5" height="5" fill="#6fb2f7"/><rect x="5" y="15" width="5" height="5" fill="#d4e8fc"/><rect x="10" y="15" width="5" height="5" fill="#b8d9fb"/><rect x="15" y="15" width="5" height="5" fill="#d0e6fc"/><rect x="40" y="15" width="5" height="5" fill="#f3f8fe"/><rect x="50" y="15" width="5" height="5" fill="#bedcfb"/><rect x="60" y="15" width="5" height="5" fill="#c0ddfb"/></svg>
<svg class="ab" style="left:595px;top:576px" width="45" height="10" shape-rendering="crispEdges"><rect x="0" y="0" width="5" height="5" fill="#f1f1f2"/><rect x="5" y="0" width="5" height="5" fill="#cecdd0"/><rect x="10" y="0" width="5" height="5" fill="#b1b0b5"/><rect x="15" y="0" width="5" height="5" fill="#dddcda"/><rect x="20" y="0" width="5" height="5" fill="#e1e0de"/><rect x="25" y="0" width="5" height="5" fill="#c3c2c6"/><rect x="30" y="0" width="5" height="5" fill="#cdccd0"/><rect x="35" y="0" width="5" height="5" fill="#d6d5d2"/><rect x="40" y="0" width="5" height="5" fill="#d7d5d3"/><rect x="0" y="5" width="5" height="5" fill="#f9f9f9"/><rect x="5" y="5" width="5" height="5" fill="#cdcfd3"/><rect x="10" y="5" width="5" height="5" fill="#c5c4c8"/><rect x="15" y="5" width="5" height="5" fill="#e5e6e8"/><rect x="20" y="5" width="5" height="5" fill="#ebecee"/><rect x="30" y="5" width="5" height="5" fill="#f3f4f5"/><rect x="40" y="5" width="5" height="5" fill="#eeedee"/></svg>
<div class="ab t13" style="left:639px;top:571px;color:#333">8390</div>
<div class="ab" style="left:639px;top:573px;width:3px;height:17px;background:#fff;opacity:0.6"></div>
<div class="ab t13" style="left:710px;top:570px;color:#333">******</div>
<div class="ab t13" style="left:815px;top:571px;width:114px;text-align:center;color:#2f88e6">5</div>
<div class="ab t13" style="left:929px;top:571px;width:91px;text-align:center;color:#2f88e6">1</div>
<div class="ab t13" style="left:1020px;top:571px;width:75px;text-align:center;color:#2f88e6">26</div>
<div class="ab t13" style="left:1104px;top:571px;color:#333">采集成功</div>
<div class="ab t13" style="left:1358px;top:571px;color:#333">2024-09-26 20:59:39</div>
<svg class="ab" style="left:1580px;top:571px" width="35" height="20" shape-rendering="crispEdges"><rect x="0" y="0" width="5" height="5" fill="#efedeb"/><rect x="5" y="0" width="5" height="5" fill="#d3d3d7"/><rect x="15" y="0" width="5" height="5" fill="#dcdbdf"/><rect x="20" y="0" width="5" height="5" fill="#edeef0"/><rect x="30" y="0" width="5" height="5" fill="#f6f5f4"/><rect x="0" y="5" width="5" height="5" fill="#babec7"/><rect x="5" y="5" width="5" height="5" fill="#97969d"/><rect x="10" y="5" width="5" height="5" fill="#c2bbb3"/><rect x="15" y="5" width="5" height="5" fill="#bcbbc0"/><rect x="20" y="5" width="5" height="5" fill="#b7aea5"/><rect x="25" y="5" width="5" height="5" fill="#aaa9af"/><rect x="30" y="5" width="5" height="5" fill="#cacacd"/><rect x="0" y="10" width="5" height="5" fill="#b5b4bb"/><rect x="5" y="10" width="5" height="5" fill="#c3c2c6"/><rect x="10" y="10" width="5" height="5" fill="#bfc3cb"/><rect x="15" y="10" width="5" height="5" fill="#a1a0aa"/><rect x="20" y="10" width="5" height="5" fill="#d1ccc6"/><rect x="25" y="10" width="5" height="5" fill="#b2b0b9"/><rect x="30" y="10" width="5" height="5" fill="#cbcbd0"/><rect x="10" y="15" width="5" height="5" fill="#e9e6e3"/><rect x="15" y="15" width="5" height="5" fill="#f5f6f7"/><rect x="25" y="15" width="5" height="5" fill="#ececee"/></svg>
<svg class="ab" style="left:1630px;top:571px" width="40" height="20" shape-rendering="crispEdges"><rect x="0" y="0" width="5" height="5" fill="#f4f4f5"/><rect x="5" y="0" width="5" height="5" fill="#eeeff1"/><rect x="10" y="0" width="5" height="5" fill="#e0dcd9"/><rect x="20" y="0" width="5" height="5" fill="#dbdde2"/><rect x="30" y="0" width="5" height="5" fill="#f5f4f3"/><rect x="0" y="5" width="5" height="5" fill="#b6b9c3"/><rect x="5" y="5" width="5" height="5" fill="#d3cec8"/><rect x="10" y="5" width="5" height="5" fill="#a6abb7"/><rect x="15" y="5" width="5" height="5" fill="#aeadb6"/><rect x="20" y="5" width="5" height="5" fill="#94929a"/><rect x="25" y="5" width="5" height="5" fill="#9e9ca3"/><rect x="30" y="5" width="5" height="5" fill="#97969d"/><rect x="35" y="5" width="5" height="5" fill="#bdb4ac"/><rect x="0" y="10" width="5" height="5" fill="#dcd7d3"/><rect x="5" y="10" width="5" height="5" fill="#cccbce"/><rect x="10" y="10" width="5" height="5" fill="#bfb7af"/><rect x="15" y="10" width="5" height="5" fill="#e2dfdb"/><rect x="20" y="10" width="5" height="5" fill="#cbcbce"/><rect x="25" y="10" width="5" height="5" fill="#e2dfdb"/><rect x="30" y="10" width="5" height="5" fill="#adacb5"/><rect x="35" y="10" width="5" height="5" fill="#a5a4aa"/><rect x="0" y="15" width="5" height="5" fill="#dad9dc"/><rect x="10" y="15" width="5" height="5" fill="#f4f4f5"/><rect x="15" y="15" width="5" height="5" fill="#eff0f2"/><rect x="25" y="15" width="5" height="5" fill="#e4e1dd"/><rect x="30" y="15" width="5" height="5" fill="#ebecef"/><rect x="35" y="15" width="5" height="5" fill="#dcdbdf"/></svg>
<svg class="ab" style="left:1680px;top:571px" width="30" height="20" shape-rendering="crispEdges"><rect x="0" y="0" width="5" height="5" fill="#d3d3d7"/><rect x="5" y="0" width="5" height="5" fill="#f2f2f4"/><rect x="10" y="0" width="5" height="5" fill="#dcdcdf"/><rect x="15" y="0" width="5" height="5" fill="#f5f4f5"/><rect x="25" y="0" width="5" height="5" fill="#cfced2"/><rect x="0" y="5" width="5" height="5" fill="#a5a3a9"/><rect x="5" y="5" width="5" height="5" fill="#b7bbc4"/><rect x="10" y="5" width="5" height="5" fill="#afaeb3"/><rect x="15" y="5" width="5" height="5" fill="#a3a2a8"/><rect x="20" y="5" width="5" height="5" fill="#a09fa9"/><rect x="25" y="5" width="5" height="5" fill="#a1a0a9"/><rect x="0" y="10" width="5" height="5" fill="#c8c7cd"/><rect x="5" y="10" width="5" height="5" fill="#d4cfc9"/><rect x="10" y="10" width="5" height="5" fill="#a7a6ac"/><rect x="15" y="10" width="5" height="5" fill="#e1deda"/><rect x="20" y="10" width="5" height="5" fill="#dcd7d3"/><rect x="25" y="10" width="5" height="5" fill="#c4bcb5"/><rect x="0" y="15" width="5" height="5" fill="#eeeef0"/><rect x="5" y="15" width="5" height="5" fill="#ecedf0"/><rect x="25" y="15" width="5" height="5" fill="#f2f2f2"/></svg>
<svg class="ab" style="left:1720px;top:571px" width="25" height="20" shape-rendering="crispEdges"><rect x="5" y="0" width="5" height="5" fill="#d8dae0"/><rect x="15" y="0" width="5" height="5" fill="#f0efed"/><rect x="20" y="0" width="5" height="5" fill="#ebeaec"/><rect x="0" y="5" width="5" height="5" fill="#c9c9ce"/><rect x="5" y="5" width="5" height="5" fill="#9c9ba2"/><rect x="10" y="5" width="5" height="5" fill="#bebdc2"/><rect x="15" y="5" width="5" height="5" fill="#a9a8ad"/><rect x="20" y="5" width="5" height="5" fill="#b4b8c2"/><rect x="0" y="10" width="5" height="5" fill="#b6b5ba"/><rect x="5" y="10" width="5" height="5" fill="#a9a8b1"/><rect x="10" y="10" width="5" height="5" fill="#c4c3c7"/><rect x="15" y="10" width="5" height="5" fill="#dad6d1"/><rect x="20" y="10" width="5" height="5" fill="#d6d8de"/><rect x="0" y="15" width="5" height="5" fill="#eaeaeb"/><rect x="5" y="15" width="5" height="5" fill="#edeae8"/><rect x="10" y="15" width="5" height="5" fill="#f1f2f4"/><rect x="15" y="15" width="5" height="5" fill="#d1d0d3"/><rect x="20" y="15" width="5" height="5" fill="#e5e2df"/></svg>
<svg class="ab" style="left:1760px;top:571px" width="40" height="20" shape-rendering="crispEdges"><rect x="5" y="0" width="5" height="5" fill="#f3f3f4"/><rect x="15" y="0" width="5" height="5" fill="#e7e4e1"/><rect x="25" y="0" width="5" height="5" fill="#dedde0"/><rect x="0" y="5" width="5" height="5" fill="#c3bbb4"/><rect x="5" y="5" width="5" height="5" fill="#c4c7cf"/><rect x="10" y="5" width="5" height="5" fill="#9b99a4"/><rect x="15" y="5" width="5" height="5" fill="#bbbec8"/><rect x="20" y="5" width="5" height="5" fill="#c1c0c6"/><rect x="25" y="5" width="5" height="5" fill="#c7cad2"/><rect x="30" y="5" width="5" height="5" fill="#d4cfc9"/><rect x="35" y="5" width="5" height="5" fill="#b4b3bb"/><rect x="0" y="10" width="5" height="5" fill="#a3a2a8"/><rect x="5" y="10" width="5" height="5" fill="#ccced5"/><rect x="10" y="10" width="5" height="5" fill="#d8d3ce"/><rect x="15" y="10" width="5" height="5" fill="#a1a0a9"/><rect x="20" y="10" width="5" height="5" fill="#d2d1d4"/><rect x="25" y="10" width="5" height="5" fill="#e4e0dd"/><rect x="30" y="10" width="5" height="5" fill="#b8b7bc"/><rect x="35" y="10" width="5" height="5" fill="#d3cec8"/><rect x="5" y="15" width="5" height="5" fill="#e5e2de"/><rect x="10" y="15" width="5" height="5" fill="#eae7e5"/><rect x="15" y="15" width="5" height="5" fill="#f2f2f3"/><rect x="35" y="15" width="5" height="5" fill="#dedee1"/></svg>
<svg class="ab" style="left:1810px;top:571px" width="25" height="20" shape-rendering="crispEdges"><rect x="5" y="0" width="5" height="5" fill="#f0efed"/><rect x="10" y="0" width="5" height="5" fill="#eff0f2"/><rect x="0" y="5" width="5" height="5" fill="#b4b8c2"/><rect x="5" y="5" width="5" height="5" fill="#a2a1ab"/><rect x="10" y="5" width="5" height="5" fill="#9a98a3"/><rect x="15" y="5" width="5" height="5" fill="#edeef0"/><rect x="20" y="5" width="5" height="5" fill="#ecedf0"/><rect x="0" y="10" width="5" height="5" fill="#98979e"/><rect x="5" y="10" width="5" height="5" fill="#d5d0cb"/><rect x="10" y="10" width="5" height="5" fill="#b0b4bf"/><rect x="15" y="10" width="5" height="5" fill="#ebecee"/><rect x="20" y="10" width="5" height="5" fill="#e3e3e5"/><rect x="0" y="15" width="5" height="5" fill="#ecedf0"/><rect x="10" y="15" width="5" height="5" fill="#f5f4f3"/></svg>
<svg class="ab" style="left:1577px;top:576px" width="3" height="11"><rect x="0.5" y="1" width="2" height="1.3" fill="#222"/><rect x="0.5" y="5" width="2" height="1.3" fill="#222"/><rect x="0.5" y="9" width="2" height="1.3" fill="#222"/></svg>
<div class="ab" style="left:170px;top:612px;width:16px;height:16px;border:1px solid #d4d6da;border-radius:2px;background:#fff"></div>
<div class="ab t13" style="left:202px;top:611px;color:#2f88e6">删除办税员 获取绑定企业</div>
<div class="ab t13" style="left:370px;top:611px;color:#333">企业登录（新版）</div>
<svg class="ab" style="left:495px;top:611px" width="55" height="20" shape-rendering="crispEdges"><rect x="5" y="0" width="5" height="5" fill="#c9e2fc"/><rect x="10" y="0" width="5" height="5" fill="#d2e6fc"/><rect x="35" y="0" width="5" height="5" fill="#c5e0fb"/><rect x="50" y="0" width="5" height="5" fill="#e3f0fd"/><rect x="0" y="5" width="5" height="5" fill="#cce4fc"/><rect x="5" y="5" width="5" height="5" fill="#94c5f9"/><rect x="10" y="5" width="5" height="5" fill="#c1defb"/><rect x="15" y="5" width="5" height="5" fill="#8bc1f8"/><rect x="20" y="5" width="5" height="5" fill="#d3e7fc"/><rect x="25" y="5" width="5" height="5" fill="#72b3f7"/><rect x="30" y="5" width="5" height="5" fill="#c2defb"/><rect x="35" y="5" width="5" height="5" fill="#c1defb"/><rect x="40" y="5" width="5" height="5" fill="#74b4f7"/><rect x="45" y="5" width="5" height="5" fill="#7ab7f7"/><rect x="50" y="5" width="5" height="5" fill="#73b4f7"/><rect x="0" y="10" width="5" height="5" fill="#6eb1f6"/><rect x="5" y="10" width="5" height="5" fill="#87bff8"/><rect x="10" y="10" width="5" height="5" fill="#aad1fa"/><rect x="15" y="10" width="5" height="5" fill="#b7d8fb"/><rect x="20" y="10" width="5" height="5" fill="#96c6f9"/><rect x="25" y="10" width="5" height="5" fill="#b6d8fb"/><rect x="30" y="10" width="5" height="5" fill="#77b6f7"/><rect x="35" y="10" width="5" height="5" fill="#c3defb"/><rect x="40" y="10" width="5" height="5" fill="#c8e1fb"/><rect x="45" y="10" width="5" height="5" fill="#73b4f7"/><rect x="50" y="10" width="5" height="5" fill="#abd2fa"/><rect x="5" y="15" width="5" height="5" fill="#bedcfb"/><rect x="15" y="15" width="5" height="5" fill="#d1e6fc"/><rect x="20" y="15" width="5" height="5" fill="#d4e7fc"/><rect x="25" y="15" width="5" height="5" fill="#cce4fc"/><rect x="35" y="15" width="5" height="5" fill="#e9f3fd"/></svg>
<svg class="ab" style="left:595px;top:616px" width="45" height="10" shape-rendering="crispEdges"><rect x="0" y="0" width="5" height="5" fill="#f5f4f5"/><rect x="5" y="0" width="5" height="5" fill="#d9dadd"/><rect x="10" y="0" width="5" height="5" fill="#bcbec4"/><rect x="15" y="0" width="5" height="5" fill="#dedddb"/><rect x="20" y="0" width="5" height="5" fill="#dbdcdf"/><rect x="25" y="0" width="5" height="5" fill="#c6c8cd"/><rect x="30" y="0" width="5" height="5" fill="#d2d0cd"/><rect x="35" y="0" width="5" height="5" fill="#d0cfd2"/><rect x="40" y="0" width="5" height="5" fill="#d6d8db"/><rect x="0" y="5" width="5" height="5" fill="#eeedec"/><rect x="5" y="5" width="5" height="5" fill="#dbdad8"/><rect x="10" y="5" width="5" height="5" fill="#bcbbbf"/><rect x="15" y="5" width="5" height="5" fill="#dfdfe1"/><rect x="20" y="5" width="5" height="5" fill="#efeff0"/><rect x="30" y="5" width="5" height="5" fill="#f9f9f9"/><rect x="35" y="5" width="5" height="5" fill="#f4f4f5"/><rect x="40" y="5" width="5" height="5" fill="#ededef"/></svg>
<div class="ab t13" style="left:639px;top:611px;color:#333">4115</div>
<div class="ab" style="left:639px;top:613px;width:3px;height:17px;background:#fff;opacity:0.6"></div>
<div class="ab t13" style="left:710px;top:610px;color:#333">******</div>
<div class="ab t13" style="left:815px;top:611px;width:114px;text-align:center;color:#2f88e6">1</div>
<div class="ab t13" style="left:929px;top:611px;width:91px;text-align:center;color:#2f88e6">1</div>
<div class="ab t13" style="left:1020px;top:611px;width:75px;text-align:center;color:#2f88e6">1</div>
<div class="ab t13" style="left:1104px;top:611px;color:#333">采集成功</div>
<div class="ab t13" style="left:1358px;top:611px;color:#333">2023-12-21 22:17:22</div>
<svg class="ab" style="left:1580px;top:611px" width="35" height="20" shape-rendering="crispEdges"><rect x="0" y="0" width="5" height="5" fill="#efedeb"/><rect x="5" y="0" width="5" height="5" fill="#d3d3d7"/><rect x="15" y="0" width="5" height="5" fill="#dcdbdf"/><rect x="20" y="0" width="5" height="5" fill="#edeef0"/><rect x="30" y="0" width="5" height="5" fill="#f6f5f4"/><rect x="0" y="5" width="5" height="5" fill="#babec7"/><rect x="5" y="5" width="5" height="5" fill="#97969d"/><rect x="10" y="5" width="5" height="5" fill="#c2bbb3"/><rect x="15" y="5" width="5" height="5" fill="#bcbbc0"/><rect x="20" y="5" width="5" height="5" fill="#b7aea5"/><rect x="25" y="5" width="5" height="5" fill="#aaa9af"/><rect x="30" y="5" width="5" height="5" fill="#cacacd"/><rect x="0" y="10" width="5" height="5" fill="#b5b4bb"/><rect x="5" y="10" width="5" height="5" fill="#c3c2c6"/><rect x="10" y="10" width="5" height="5" fill="#bfc3cb"/><rect x="15" y="10" width="5" height="5" fill="#a1a0aa"/><rect x="20" y="10" width="5" height="5" fill="#d1ccc6"/><rect x="25" y="10" width="5" height="5" fill="#b2b0b9"/><rect x="30" y="10" width="5" height="5" fill="#cbcbd0"/><rect x="10" y="15" width="5" height="5" fill="#e9e6e3"/><rect x="15" y="15" width="5" height="5" fill="#f5f6f7"/><rect x="25" y="15" width="5" height="5" fill="#ececee"/></svg>
<svg class="ab" style="left:1630px;top:611px" width="40" height="20" shape-rendering="crispEdges"><rect x="0" y="0" width="5" height="5" fill="#f4f4f5"/><rect x="5" y="0" width="5" height="5" fill="#eeeff1"/><rect x="10" y="0" width="5" height="5" fill="#e0dcd9"/><rect x="20" y="0" width="5" height="5" fill="#dbdde2"/><rect x="30" y="0" width="5" height="5" fill="#f5f4f3"/><rect x="0" y="5" width="5" height="5" fill="#b6b9c3"/><rect x="5" y="5" width="5" height="5" fill="#d3cec8"/><rect x="10" y="5" width="5" height="5" fill="#a6abb7"/><rect x="15" y="5" width="5" height="5" fill="#aeadb6"/><rect x="20" y="5" width="5" height="5" fill="#94929a"/><rect x="25" y="5" width="5" height="5" fill="#9e9ca3"/><rect x="30" y="5" width="5" height="5" fill="#97969d"/><rect x="35" y="5" width="5" height="5" fill="#bdb4ac"/><rect x="0" y="10" width="5" height="5" fill="#dcd7d3"/><rect x="5" y="10" width="5" height="5" fill="#cccbce"/><rect x="10" y="10" width="5" height="5" fill="#bfb7af"/><rect x="15" y="10" width="5" height="5" fill="#e2dfdb"/><rect x="20" y="10" width="5" height="5" fill="#cbcbce"/><rect x="25" y="10" width="5" height="5" fill="#e2dfdb"/><rect x="30" y="10" width="5" height="5" fill="#adacb5"/><rect x="35" y="10" width="5" height="5" fill="#a5a4aa"/><rect x="0" y="15" width="5" height="5" fill="#dad9dc"/><rect x="10" y="15" width="5" height="5" fill="#f4f4f5"/><rect x="15" y="15" width="5" height="5" fill="#eff0f2"/><rect x="25" y="15" width="5" height="5" fill="#e4e1dd"/><rect x="30" y="15" width="5" height="5" fill="#ebecef"/><rect x="35" y="15" width="5" height="5" fill="#dcdbdf"/></svg>
<svg class="ab" style="left:1680px;top:611px" width="30" height="20" shape-rendering="crispEdges"><rect x="0" y="0" width="5" height="5" fill="#d3d3d7"/><rect x="5" y="0" width="5" height="5" fill="#f2f2f4"/><rect x="10" y="0" width="5" height="5" fill="#dcdcdf"/><rect x="15" y="0" width="5" height="5" fill="#f5f4f5"/><rect x="25" y="0" width="5" height="5" fill="#cfced2"/><rect x="0" y="5" width="5" height="5" fill="#a5a3a9"/><rect x="5" y="5" width="5" height="5" fill="#b7bbc4"/><rect x="10" y="5" width="5" height="5" fill="#afaeb3"/><rect x="15" y="5" width="5" height="5" fill="#a3a2a8"/><rect x="20" y="5" width="5" height="5" fill="#a09fa9"/><rect x="25" y="5" width="5" height="5" fill="#a1a0a9"/><rect x="0" y="10" width="5" height="5" fill="#c8c7cd"/><rect x="5" y="10" width="5" height="5" fill="#d4cfc9"/><rect x="10" y="10" width="5" height="5" fill="#a7a6ac"/><rect x="15" y="10" width="5" height="5" fill="#e1deda"/><rect x="20" y="10" width="5" height="5" fill="#dcd7d3"/><rect x="25" y="10" width="5" height="5" fill="#c4bcb5"/><rect x="0" y="15" width="5" height="5" fill="#eeeef0"/><rect x="5" y="15" width="5" height="5" fill="#ecedf0"/><rect x="25" y="15" width="5" height="5" fill="#f2f2f2"/></svg>
<svg class="ab" style="left:1720px;top:611px" width="25" height="20" shape-rendering="crispEdges"><rect x="5" y="0" width="5" height="5" fill="#d8dae0"/><rect x="15" y="0" width="5" height="5" fill="#f0efed"/><rect x="20" y="0" width="5" height="5" fill="#ebeaec"/><rect x="0" y="5" width="5" height="5" fill="#c9c9ce"/><rect x="5" y="5" width="5" height="5" fill="#9c9ba2"/><rect x="10" y="5" width="5" height="5" fill="#bebdc2"/><rect x="15" y="5" width="5" height="5" fill="#a9a8ad"/><rect x="20" y="5" width="5" height="5" fill="#b4b8c2"/><rect x="0" y="10" width="5" height="5" fill="#b6b5ba"/><rect x="5" y="10" width="5" height="5" fill="#a9a8b1"/><rect x="10" y="10" width="5" height="5" fill="#c4c3c7"/><rect x="15" y="10" width="5" height="5" fill="#dad6d1"/><rect x="20" y="10" width="5" height="5" fill="#d6d8de"/><rect x="0" y="15" width="5" height="5" fill="#eaeaeb"/><rect x="5" y="15" width="5" height="5" fill="#edeae8"/><rect x="10" y="15" width="5" height="5" fill="#f1f2f4"/><rect x="15" y="15" width="5" height="5" fill="#d1d0d3"/><rect x="20" y="15" width="5" height="5" fill="#e5e2df"/></svg>
<svg class="ab" style="left:1760px;top:611px" width="40" height="20" shape-rendering="crispEdges"><rect x="5" y="0" width="5" height="5" fill="#f3f3f4"/><rect x="15" y="0" width="5" height="5" fill="#e7e4e1"/><rect x="25" y="0" width="5" height="5" fill="#dedde0"/><rect x="0" y="5" width="5" height="5" fill="#c3bbb4"/><rect x="5" y="5" width="5" height="5" fill="#c4c7cf"/><rect x="10" y="5" width="5" height="5" fill="#9b99a4"/><rect x="15" y="5" width="5" height="5" fill="#bbbec8"/><rect x="20" y="5" width="5" height="5" fill="#c1c0c6"/><rect x="25" y="5" width="5" height="5" fill="#c7cad2"/><rect x="30" y="5" width="5" height="5" fill="#d4cfc9"/><rect x="35" y="5" width="5" height="5" fill="#b4b3bb"/><rect x="0" y="10" width="5" height="5" fill="#a3a2a8"/><rect x="5" y="10" width="5" height="5" fill="#ccced5"/><rect x="10" y="10" width="5" height="5" fill="#d8d3ce"/><rect x="15" y="10" width="5" height="5" fill="#a1a0a9"/><rect x="20" y="10" width="5" height="5" fill="#d2d1d4"/><rect x="25" y="10" width="5" height="5" fill="#e4e0dd"/><rect x="30" y="10" width="5" height="5" fill="#b8b7bc"/><rect x="35" y="10" width="5" height="5" fill="#d3cec8"/><rect x="5" y="15" width="5" height="5" fill="#e5e2de"/><rect x="10" y="15" width="5" height="5" fill="#eae7e5"/><rect x="15" y="15" width="5" height="5" fill="#f2f2f3"/><rect x="35" y="15" width="5" height="5" fill="#dedee1"/></svg>
<svg class="ab" style="left:1810px;top:611px" width="25" height="20" shape-rendering="crispEdges"><rect x="5" y="0" width="5" height="5" fill="#f0efed"/><rect x="10" y="0" width="5" height="5" fill="#eff0f2"/><rect x="0" y="5" width="5" height="5" fill="#b4b8c2"/><rect x="5" y="5" width="5" height="5" fill="#a2a1ab"/><rect x="10" y="5" width="5" height="5" fill="#9a98a3"/><rect x="15" y="5" width="5" height="5" fill="#edeef0"/><rect x="20" y="5" width="5" height="5" fill="#ecedf0"/><rect x="0" y="10" width="5" height="5" fill="#98979e"/><rect x="5" y="10" width="5" height="5" fill="#d5d0cb"/><rect x="10" y="10" width="5" height="5" fill="#b0b4bf"/><rect x="15" y="10" width="5" height="5" fill="#ebecee"/><rect x="20" y="10" width="5" height="5" fill="#e3e3e5"/><rect x="0" y="15" width="5" height="5" fill="#ecedf0"/><rect x="10" y="15" width="5" height="5" fill="#f5f4f3"/></svg>
<svg class="ab" style="left:1577px;top:616px" width="3" height="11"><rect x="0.5" y="1" width="2" height="1.3" fill="#222"/><rect x="0.5" y="5" width="2" height="1.3" fill="#222"/><rect x="0.5" y="9" width="2" height="1.3" fill="#222"/></svg>
<div class="ab" style="left:170px;top:652px;width:16px;height:16px;border:1px solid #d4d6da;border-radius:2px;background:#fff"></div>
<div class="ab t13" style="left:202px;top:651px;color:#2f88e6">删除办税员 获取绑定企业</div>
<div class="ab t13" style="left:370px;top:651px;color:#333">企业登录（新版）</div>
<svg class="ab" style="left:495px;top:651px" width="80" height="20" shape-rendering="crispEdges"><rect x="5" y="0" width="5" height="5" fill="#edf5fe"/><rect x="15" y="0" width="5" height="5" fill="#e9f3fd"/><rect x="20" y="0" width="5" height="5" fill="#e2effd"/><rect x="25" y="0" width="5" height="5" fill="#cbe3fc"/><rect x="30" y="0" width="5" height="5" fill="#e8f3fd"/><rect x="35" y="0" width="5" height="5" fill="#c6e0fb"/><rect x="40" y="0" width="5" height="5" fill="#bfdcfb"/><rect x="45" y="0" width="5" height="5" fill="#c2defb"/><rect x="60" y="0" width="5" height="5" fill="#cde4fc"/><rect x="65" y="0" width="5" height="5" fill="#dcecfd"/><rect x="70" y="0" width="5" height="5" fill="#dfeefd"/><rect x="75" y="0" width="5" height="5" fill="#b7d8fb"/><rect x="0" y="5" width="5" height="5" fill="#c8e1fb"/><rect x="5" y="5" width="5" height="5" fill="#c7e1fb"/><rect x="10" y="5" width="5" height="5" fill="#91c4f8"/><rect x="15" y="5" width="5" height="5" fill="#aed4fa"/><rect x="20" y="5" width="5" height="5" fill="#96c7f9"/><rect x="25" y="5" width="5" height="5" fill="#73b4f7"/><rect x="30" y="5" width="5" height="5" fill="#91c4f8"/><rect x="35" y="5" width="5" height="5" fill="#a1cdf9"/><rect x="40" y="5" width="5" height="5" fill="#93c5f9"/><rect x="45" y="5" width="5" height="5" fill="#bcdbfb"/><rect x="50" y="5" width="5" height="5" fill="#9bc9f9"/><rect x="55" y="5" width="5" height="5" fill="#78b7f7"/><rect x="60" y="5" width="5" height="5" fill="#acd2fa"/><rect x="65" y="5" width="5" height="5" fill="#b7d8fb"/><rect x="70" y="5" width="5" height="5" fill="#b2d6fa"/><rect x="75" y="5" width="5" height="5" fill="#c0ddfb"/><rect x="0" y="10" width="5" height="5" fill="#9cc9f9"/><rect x="5" y="10" width="5" height="5" fill="#77b6f7"/><rect x="10" y="10" width="5" height="5" fill="#aed3fa"/><rect x="15" y="10" width="5" height="5" fill="#97c7f9"/><rect x="20" y="10" width="5" height="5" fill="#abd2fa"/><rect x="25" y="10" width="5" height="5" fill="#93c5f9"/><rect x="30" y="10" width="5" height="5" fill="#b3d6fa"/><rect x="35" y="10" width="5" height="5" fill="#93c5f9"/><rect x="40" y="10" width="5" height="5" fill="#6fb2f7"/><rect x="45" y="10" width="5" height="5" fill="#90c3f8"/><rect x="50" y="10" width="5" height="5" fill="#84bdf8"/><rect x="55" y="10" width="5" height="5" fill="#9ecbf9"/><rect x="60" y="10" width="5" height="5" fill="#9bc9f9"/><rect x="65" y="10" width="5" height="5" fill="#82bcf8"/><rect x="70" y="10" width="5" height="5" fill="#75b5f7"/><rect x="75" y="10" width="5" height="5" fill="#c8e1fb"/><rect x="10" y="15" width="5" height="5" fill="#eef6fe"/><rect x="25" y="15" width="5" height="5" fill="#c2defb"/><rect x="40" y="15" width="5" height="5" fill="#cae3fc"/><rect x="50" y="15" width="5" height="5" fill="#b8d9fb"/><rect x="55" y="15" width="5" height="5" fill="#ecf4fd"/><rect x="60" y="15" width="5" height="5" fill="#c9e2fc"/><rect x="65" y="15" width="5" height="5" fill="#d7e9fc"/></svg>
<svg class="ab" style="left:595px;top:656px" width="45" height="10" shape-rendering="crispEdges"><rect x="0" y="0" width="5" height="5" fill="#efeff0"/><rect x="5" y="0" width="5" height="5" fill="#d7d8db"/><rect x="10" y="0" width="5" height="5" fill="#bbbdc3"/><rect x="15" y="0" width="5" height="5" fill="#d8d7da"/><rect x="20" y="0" width="5" height="5" fill="#d9dadd"/><rect x="25" y="0" width="5" height="5" fill="#d6d4d1"/><rect x="30" y="0" width="5" height="5" fill="#cdccd0"/><rect x="35" y="0" width="5" height="5" fill="#d5d3d0"/><rect x="40" y="0" width="5" height="5" fill="#d8d7d4"/><rect x="5" y="5" width="5" height="5" fill="#cccbce"/><rect x="10" y="5" width="5" height="5" fill="#bec0c6"/><rect x="15" y="5" width="5" height="5" fill="#e5e4e6"/><rect x="20" y="5" width="5" height="5" fill="#eeeeed"/><rect x="25" y="5" width="5" height="5" fill="#f2f3f4"/><rect x="30" y="5" width="5" height="5" fill="#f6f6f7"/><rect x="40" y="5" width="5" height="5" fill="#f1f1f0"/></svg>
<div class="ab t13" style="left:639px;top:651px;color:#333">0132</div>
<div class="ab" style="left:639px;top:653px;width:3px;height:17px;background:#fff;opacity:0.6"></div>
<div class="ab t13" style="left:710px;top:650px;color:#333">******</div>
<div class="ab t13" style="left:815px;top:651px;width:114px;text-align:center;color:#2f88e6">95</div>
<div class="ab t13" style="left:929px;top:651px;width:91px;text-align:center;color:#2f88e6">29</div>
<div class="ab t13" style="left:1020px;top:651px;width:75px;text-align:center;color:#2f88e6">126</div>
<div class="ab t13" style="left:1104px;top:651px;color:#333">采集成功</div>
<div class="ab t13" style="left:1358px;top:651px;color:#333">2023-11-22 00:08:01</div>
<svg class="ab" style="left:1580px;top:651px" width="35" height="20" shape-rendering="crispEdges"><rect x="0" y="0" width="5" height="5" fill="#efedeb"/><rect x="5" y="0" width="5" height="5" fill="#d3d3d7"/><rect x="15" y="0" width="5" height="5" fill="#dcdbdf"/><rect x="20" y="0" width="5" height="5" fill="#edeef0"/><rect x="30" y="0" width="5" height="5" fill="#f6f5f4"/><rect x="0" y="5" width="5" height="5" fill="#babec7"/><rect x="5" y="5" width="5" height="5" fill="#97969d"/><rect x="10" y="5" width="5" height="5" fill="#c2bbb3"/><rect x="15" y="5" width="5" height="5" fill="#bcbbc0"/><rect x="20" y="5" width="5" height="5" fill="#b7aea5"/><rect x="25" y="5" width="5" height="5" fill="#aaa9af"/><rect x="30" y="5" width="5" height="5" fill="#cacacd"/><rect x="0" y="10" width="5" height="5" fill="#b5b4bb"/><rect x="5" y="10" width="5" height="5" fill="#c3c2c6"/><rect x="10" y="10" width="5" height="5" fill="#bfc3cb"/><rect x="15" y="10" width="5" height="5" fill="#a1a0aa"/><rect x="20" y="10" width="5" height="5" fill="#d1ccc6"/><rect x="25" y="10" width="5" height="5" fill="#b2b0b9"/><rect x="30" y="10" width="5" height="5" fill="#cbcbd0"/><rect x="10" y="15" width="5" height="5" fill="#e9e6e3"/><rect x="15" y="15" width="5" height="5" fill="#f5f6f7"/><rect x="25" y="15" width="5" height="5" fill="#ececee"/></svg>
<svg class="ab" style="left:1630px;top:651px" width="40" height="20" shape-rendering="crispEdges"><rect x="0" y="0" width="5" height="5" fill="#f4f4f5"/><rect x="5" y="0" width="5" height="5" fill="#eeeff1"/><rect x="10" y="0" width="5" height="5" fill="#e0dcd9"/><rect x="20" y="0" width="5" height="5" fill="#dbdde2"/><rect x="30" y="0" width="5" height="5" fill="#f5f4f3"/><rect x="0" y="5" width="5" height="5" fill="#b6b9c3"/><rect x="5" y="5" width="5" height="5" fill="#d3cec8"/><rect x="10" y="5" width="5" height="5" fill="#a6abb7"/><rect x="15" y="5" width="5" height="5" fill="#aeadb6"/><rect x="20" y="5" width="5" height="5" fill="#94929a"/><rect x="25" y="5" width="5" height="5" fill="#9e9ca3"/><rect x="30" y="5" width="5" height="5" fill="#97969d"/><rect x="35" y="5" width="5" height="5" fill="#bdb4ac"/><rect x="0" y="10" width="5" height="5" fill="#dcd7d3"/><rect x="5" y="10" width="5" height="5" fill="#cccbce"/><rect x="10" y="10" width="5" height="5" fill="#bfb7af"/><rect x="15" y="10" width="5" height="5" fill="#e2dfdb"/><rect x="20" y="10" width="5" height="5" fill="#cbcbce"/><rect x="25" y="10" width="5" height="5" fill="#e2dfdb"/><rect x="30" y="10" width="5" height="5" fill="#adacb5"/><rect x="35" y="10" width="5" height="5" fill="#a5a4aa"/><rect x="0" y="15" width="5" height="5" fill="#dad9dc"/><rect x="10" y="15" width="5" height="5" fill="#f4f4f5"/><rect x="15" y="15" width="5" height="5" fill="#eff0f2"/><rect x="25" y="15" width="5" height="5" fill="#e4e1dd"/><rect x="30" y="15" width="5" height="5" fill="#ebecef"/><rect x="35" y="15" width="5" height="5" fill="#dcdbdf"/></svg>
<svg class="ab" style="left:1680px;top:651px" width="30" height="20" shape-rendering="crispEdges"><rect x="0" y="0" width="5" height="5" fill="#d3d3d7"/><rect x="5" y="0" width="5" height="5" fill="#f2f2f4"/><rect x="10" y="0" width="5" height="5" fill="#dcdcdf"/><rect x="15" y="0" width="5" height="5" fill="#f5f4f5"/><rect x="25" y="0" width="5" height="5" fill="#cfced2"/><rect x="0" y="5" width="5" height="5" fill="#a5a3a9"/><rect x="5" y="5" width="5" height="5" fill="#b7bbc4"/><rect x="10" y="5" width="5" height="5" fill="#afaeb3"/><rect x="15" y="5" width="5" height="5" fill="#a3a2a8"/><rect x="20" y="5" width="5" height="5" fill="#a09fa9"/><rect x="25" y="5" width="5" height="5" fill="#a1a0a9"/><rect x="0" y="10" width="5" height="5" fill="#c8c7cd"/><rect x="5" y="10" width="5" height="5" fill="#d4cfc9"/><rect x="10" y="10" width="5" height="5" fill="#a7a6ac"/><rect x="15" y="10" width="5" height="5" fill="#e1deda"/><rect x="20" y="10" width="5" height="5" fill="#dcd7d3"/><rect x="25" y="10" width="5" height="5" fill="#c4bcb5"/><rect x="0" y="15" width="5" height="5" fill="#eeeef0"/><rect x="5" y="15" width="5" height="5" fill="#ecedf0"/><rect x="25" y="15" width="5" height="5" fill="#f2f2f2"/></svg>
<svg class="ab" style="left:1720px;top:651px" width="25" height="20" shape-rendering="crispEdges"><rect x="5" y="0" width="5" height="5" fill="#d8dae0"/><rect x="15" y="0" width="5" height="5" fill="#f0efed"/><rect x="20" y="0" width="5" height="5" fill="#ebeaec"/><rect x="0" y="5" width="5" height="5" fill="#c9c9ce"/><rect x="5" y="5" width="5" height="5" fill="#9c9ba2"/><rect x="10" y="5" width="5" height="5" fill="#bebdc2"/><rect x="15" y="5" width="5" height="5" fill="#a9a8ad"/><rect x="20" y="5" width="5" height="5" fill="#b4b8c2"/><rect x="0" y="10" width="5" height="5" fill="#b6b5ba"/><rect x="5" y="10" width="5" height="5" fill="#a9a8b1"/><rect x="10" y="10" width="5" height="5" fill="#c4c3c7"/><rect x="15" y="10" width="5" height="5" fill="#dad6d1"/><rect x="20" y="10" width="5" height="5" fill="#d6d8de"/><rect x="0" y="15" width="5" height="5" fill="#eaeaeb"/><rect x="5" y="15" width="5" height="5" fill="#edeae8"/><rect x="10" y="15" width="5" height="5" fill="#f1f2f4"/><rect x="15" y="15" width="5" height="5" fill="#d1d0d3"/><rect x="20" y="15" width="5" height="5" fill="#e5e2df"/></svg>
<svg class="ab" style="left:1760px;top:651px" width="40" height="20" shape-rendering="crispEdges"><rect x="5" y="0" width="5" height="5" fill="#f3f3f4"/><rect x="15" y="0" width="5" height="5" fill="#e7e4e1"/><rect x="25" y="0" width="5" height="5" fill="#dedde0"/><rect x="0" y="5" width="5" height="5" fill="#c3bbb4"/><rect x="5" y="5" width="5" height="5" fill="#c4c7cf"/><rect x="10" y="5" width="5" height="5" fill="#9b99a4"/><rect x="15" y="5" width="5" height="5" fill="#bbbec8"/><rect x="20" y="5" width="5" height="5" fill="#c1c0c6"/><rect x="25" y="5" width="5" height="5" fill="#c7cad2"/><rect x="30" y="5" width="5" height="5" fill="#d4cfc9"/><rect x="35" y="5" width="5" height="5" fill="#b4b3bb"/><rect x="0" y="10" width="5" height="5" fill="#a3a2a8"/><rect x="5" y="10" width="5" height="5" fill="#ccced5"/><rect x="10" y="10" width="5" height="5" fill="#d8d3ce"/><rect x="15" y="10" width="5" height="5" fill="#a1a0a9"/><rect x="20" y="10" width="5" height="5" fill="#d2d1d4"/><rect x="25" y="10" width="5" height="5" fill="#e4e0dd"/><rect x="30" y="10" width="5" height="5" fill="#b8b7bc"/><rect x="35" y="10" width="5" height="5" fill="#d3cec8"/><rect x="5" y="15" width="5" height="5" fill="#e5e2de"/><rect x="10" y="15" width="5" height="5" fill="#eae7e5"/><rect x="15" y="15" width="5" height="5" fill="#f2f2f3"/><rect x="35" y="15" width="5" height="5" fill="#dedee1"/></svg>
<svg class="ab" style="left:1810px;top:651px" width="25" height="20" shape-rendering="crispEdges"><rect x="5" y="0" width="5" height="5" fill="#f0efed"/><rect x="10" y="0" width="5" height="5" fill="#eff0f2"/><rect x="0" y="5" width="5" height="5" fill="#b4b8c2"/><rect x="5" y="5" width="5" height="5" fill="#a2a1ab"/><rect x="10" y="5" width="5" height="5" fill="#9a98a3"/><rect x="15" y="5" width="5" height="5" fill="#edeef0"/><rect x="20" y="5" width="5" height="5" fill="#ecedf0"/><rect x="0" y="10" width="5" height="5" fill="#98979e"/><rect x="5" y="10" width="5" height="5" fill="#d5d0cb"/><rect x="10" y="10" width="5" height="5" fill="#b0b4bf"/><rect x="15" y="10" width="5" height="5" fill="#ebecee"/><rect x="20" y="10" width="5" height="5" fill="#e3e3e5"/><rect x="0" y="15" width="5" height="5" fill="#ecedf0"/><rect x="10" y="15" width="5" height="5" fill="#f5f4f3"/></svg>
<svg class="ab" style="left:1577px;top:656px" width="3" height="11"><rect x="0.5" y="1" width="2" height="1.3" fill="#222"/><rect x="0.5" y="5" width="2" height="1.3" fill="#222"/><rect x="0.5" y="9" width="2" height="1.3" fill="#222"/></svg>
<div class="ab" style="left:938px;top:281px;width:75px;height:402px;border:6px solid #f40d0d;border-radius:4px"></div>
<div class="ab" style="left:1018px;top:283px;width:30px;height:30px;border-radius:50%;background:#ee1111;color:#fff;font-size:16px;line-height:30px;text-align:center">1</div>
<div class="ab t12" style="left:170px;top:854px;color:#333">共10条</div>
<div class="ab t12" style="left:1586px;top:854px;color:#333">共1页</div>
<div class="ab t12" style="left:1628px;top:854px;color:#333">第</div>
<div class="ab" style="left:1643px;top:854px;width:44px;height:23px;border:1px solid #d8dadf;border-radius:2px;font-size:12px;line-height:21px;text-align:center;color:#333">1</div>
<div class="ab t12" style="left:1691px;top:854px;color:#333">页</div>
<svg class="ab" style="left:1719px;top:858px" width="90" height="13" viewBox="0 0 90 13"><path d="M1.5 1 V12 M11 1 L5 6.5 L11 12" fill="none" stroke="#999" stroke-width="1.2"/><path d="M35 1 L29 6.5 L35 12" fill="none" stroke="#999" stroke-width="1.2"/><path d="M52 1 L58 6.5 L52 12" fill="none" stroke="#999" stroke-width="1.2"/><path d="M74 1 L80 6.5 L74 12 M83.5 1 V12" fill="none" stroke="#999" stroke-width="1.2"/></svg>
<div class="ab t12" style="left:1830px;top:854px;color:#333">20条/页</div>
<svg class="ab" style="left:1877px;top:861px" width="12" height="8" viewBox="0 0 12 8"><path d="M1 1 L6 6 L11 1" fill="none" stroke="#555" stroke-width="1.2"/></svg>
<svg class="ab" style="left:1898px;top:694px" width="22" height="46" viewBox="0 0 22 46"><circle cx="27" cy="28" r="17" fill="#3d9cf2"/><circle cx="8.5" cy="33" r="5.5" fill="#3d9cf2"/><ellipse cx="7.5" cy="14" rx="2.6" ry="3.4" fill="#3aa0ee" transform="rotate(-25 7.5 14)"/><path d="M8 17 Q11 21 14 22" stroke="#3d9cf2" stroke-width="2.2" fill="none"/><ellipse cx="16.5" cy="6.5" rx="2.2" ry="4" fill="#3ab0e8" transform="rotate(20 16.5 6.5)"/><path d="M15.5 10 Q15 15 17 18" stroke="#3d9cf2" stroke-width="2" fill="none"/><ellipse cx="27" cy="32" rx="10" ry="11" fill="#fde8ec"/><ellipse cx="20.5" cy="31" rx="1.8" ry="2.3" fill="#1c2a44"/><ellipse cx="21" cy="36.5" rx="2" ry="1.2" fill="#f6a8b0"/></svg>
<div class="ab" style="left:0px;top:0px;width:140px;height:883px;overflow:hidden;pointer-events:none">
<div class="wm" style="left:-241px;top:19px;color:rgba(0,0,0,0.035)">电话：<span style="font-size:22px;letter-spacing:0.15px">4006-6500-27</span></div>
<div class="wm" style="left:-241px;top:47px;color:rgba(0,0,0,0.035)">网址：<span style="letter-spacing:-0.45px">www.tdxsoft.com</span></div>
<div class="wm" style="left:30px;top:19px;color:rgba(0,0,0,0.035)">电话：<span style="font-size:22px;letter-spacing:0.15px">4006-6500-27</span></div>
<div class="wm" style="left:30px;top:47px;color:rgba(0,0,0,0.035)">网址：<span style="letter-spacing:-0.45px">www.tdxsoft.com</span></div>
<div class="wm" style="left:-241px;top:129px;color:rgba(0,0,0,0.035)">电话：<span style="font-size:22px;letter-spacing:0.15px">4006-6500-27</span></div>
<div class="wm" style="left:-241px;top:157px;color:rgba(0,0,0,0.035)">网址：<span style="letter-spacing:-0.45px">www.tdxsoft.com</span></div>
<div class="wm" style="left:30px;top:129px;color:rgba(0,0,0,0.035)">电话：<span style="font-size:22px;letter-spacing:0.15px">4006-6500-27</span></div>
<div class="wm" style="left:30px;top:157px;color:rgba(0,0,0,0.035)">网址：<span style="letter-spacing:-0.45px">www.tdxsoft.com</span></div>
<div class="wm" style="left:-241px;top:239px;color:rgba(0,0,0,0.035)">电话：<span style="font-size:22px;letter-spacing:0.15px">4006-6500-27</span></div>
<div class="wm" style="left:-241px;top:267px;color:rgba(0,0,0,0.035)">网址：<span style="letter-spacing:-0.45px">www.tdxsoft.com</span></div>
<div class="wm" style="left:30px;top:239px;color:rgba(0,0,0,0.035)">电话：<span style="font-size:22px;letter-spacing:0.15px">4006-6500-27</span></div>
<div class="wm" style="left:30px;top:267px;color:rgba(0,0,0,0.035)">网址：<span style="letter-spacing:-0.45px">www.tdxsoft.com</span></div>
<div class="wm" style="left:-241px;top:349px;color:rgba(0,0,0,0.035)">电话：<span style="font-size:22px;letter-spacing:0.15px">4006-6500-27</span></div>
<div class="wm" style="left:-241px;top:377px;color:rgba(0,0,0,0.035)">网址：<span style="letter-spacing:-0.45px">www.tdxsoft.com</span></div>
<div class="wm" style="left:30px;top:349px;color:rgba(0,0,0,0.035)">电话：<span style="font-size:22px;letter-spacing:0.15px">4006-6500-27</span></div>
<div class="wm" style="left:30px;top:377px;color:rgba(0,0,0,0.035)">网址：<span style="letter-spacing:-0.45px">www.tdxsoft.com</span></div>
<div class="wm" style="left:-241px;top:459px;color:rgba(0,0,0,0.035)">电话：<span style="font-size:22px;letter-spacing:0.15px">4006-6500-27</span></div>
<div class="wm" style="left:-241px;top:487px;color:rgba(0,0,0,0.035)">网址：<span style="letter-spacing:-0.45px">www.tdxsoft.com</span></div>
<div class="wm" style="left:30px;top:459px;color:rgba(0,0,0,0.035)">电话：<span style="font-size:22px;letter-spacing:0.15px">4006-6500-27</span></div>
<div class="wm" style="left:30px;top:487px;color:rgba(0,0,0,0.035)">网址：<span style="letter-spacing:-0.45px">www.tdxsoft.com</span></div>
<div class="wm" style="left:-241px;top:569px;color:rgba(0,0,0,0.035)">电话：<span style="font-size:22px;letter-spacing:0.15px">4006-6500-27</span></div>
<div class="wm" style="left:-241px;top:597px;color:rgba(0,0,0,0.035)">网址：<span style="letter-spacing:-0.45px">www.tdxsoft.com</span></div>
<div class="wm" style="left:30px;top:569px;color:rgba(0,0,0,0.035)">电话：<span style="font-size:22px;letter-spacing:0.15px">4006-6500-27</span></div>
<div class="wm" style="left:30px;top:597px;color:rgba(0,0,0,0.035)">网址：<span style="letter-spacing:-0.45px">www.tdxsoft.com</span></div>
<div class="wm" style="left:-241px;top:679px;color:rgba(0,0,0,0.035)">电话：<span style="font-size:22px;letter-spacing:0.15px">4006-6500-27</span></div>
<div class="wm" style="left:-241px;top:707px;color:rgba(0,0,0,0.035)">网址：<span style="letter-spacing:-0.45px">www.tdxsoft.com</span></div>
<div class="wm" style="left:30px;top:679px;color:rgba(0,0,0,0.035)">电话：<span style="font-size:22px;letter-spacing:0.15px">4006-6500-27</span></div>
<div class="wm" style="left:30px;top:707px;color:rgba(0,0,0,0.035)">网址：<span style="letter-spacing:-0.45px">www.tdxsoft.com</span></div>
<div class="wm" style="left:-241px;top:789px;color:rgba(0,0,0,0.035)">电话：<span style="font-size:22px;letter-spacing:0.15px">4006-6500-27</span></div>
<div class="wm" style="left:-241px;top:817px;color:rgba(0,0,0,0.035)">网址：<span style="letter-spacing:-0.45px">www.tdxsoft.com</span></div>
<div class="wm" style="left:30px;top:789px;color:rgba(0,0,0,0.035)">电话：<span style="font-size:22px;letter-spacing:0.15px">4006-6500-27</span></div>
<div class="wm" style="left:30px;top:817px;color:rgba(0,0,0,0.035)">网址：<span style="letter-spacing:-0.45px">www.tdxsoft.com</span></div>
</div>
<div class="ab" style="left:140px;top:0px;width:1780px;height:53px;overflow:hidden;pointer-events:none">
<div class="wm" style="left:-110px;top:19px;color:rgba(0,0,0,0.03)">电话：<span style="font-size:22px;letter-spacing:0.15px">4006-6500-27</span></div>
<div class="wm" style="left:-110px;top:47px;color:rgba(0,0,0,0.03)">网址：<span style="letter-spacing:-0.45px">www.tdxsoft.com</span></div>
<div class="wm" style="left:161px;top:19px;color:rgba(0,0,0,0.03)">电话：<span style="font-size:22px;letter-spacing:0.15px">4006-6500-27</span></div>
<div class="wm" style="left:161px;top:47px;color:rgba(0,0,0,0.03)">网址：<span style="letter-spacing:-0.45px">www.tdxsoft.com</span></div>
<div class="wm" style="left:432px;top:19px;color:rgba(0,0,0,0.03)">电话：<span style="font-size:22px;letter-spacing:0.15px">4006-6500-27</span></div>
<div class="wm" style="left:432px;top:47px;color:rgba(0,0,0,0.03)">网址：<span style="letter-spacing:-0.45px">www.tdxsoft.com</span></div>
<div class="wm" style="left:703px;top:19px;color:rgba(0,0,0,0.03)">电话：<span style="font-size:22px;letter-spacing:0.15px">4006-6500-27</span></div>
<div class="wm" style="left:703px;top:47px;color:rgba(0,0,0,0.03)">网址：<span style="letter-spacing:-0.45px">www.tdxsoft.com</span></div>
<div class="wm" style="left:974px;top:19px;color:rgba(0,0,0,0.03)">电话：<span style="font-size:22px;letter-spacing:0.15px">4006-6500-27</span></div>
<div class="wm" style="left:974px;top:47px;color:rgba(0,0,0,0.03)">网址：<span style="letter-spacing:-0.45px">www.tdxsoft.com</span></div>
<div class="wm" style="left:1245px;top:19px;color:rgba(0,0,0,0.03)">电话：<span style="font-size:22px;letter-spacing:0.15px">4006-6500-27</span></div>
<div class="wm" style="left:1245px;top:47px;color:rgba(0,0,0,0.03)">网址：<span style="letter-spacing:-0.45px">www.tdxsoft.com</span></div>
<div class="wm" style="left:1516px;top:19px;color:rgba(0,0,0,0.03)">电话：<span style="font-size:22px;letter-spacing:0.15px">4006-6500-27</span></div>
<div class="wm" style="left:1516px;top:47px;color:rgba(0,0,0,0.03)">网址：<span style="letter-spacing:-0.45px">www.tdxsoft.com</span></div>
</div>
<div class="ab" style="left:140px;top:53px;width:1780px;height:830px;overflow:hidden;pointer-events:none">
<div class="wm" style="left:-110px;top:-34px;color:rgba(0,0,0,0.06)">电话：<span style="font-size:22px;letter-spacing:0.15px">4006-6500-27</span></div>
<div class="wm" style="left:-110px;top:-6px;color:rgba(0,0,0,0.06)">网址：<span style="letter-spacing:-0.45px">www.tdxsoft.com</span></div>
<div class="wm" style="left:161px;top:-34px;color:rgba(0,0,0,0.06)">电话：<span style="font-size:22px;letter-spacing:0.15px">4006-6500-27</span></div>
<div class="wm" style="left:161px;top:-6px;color:rgba(0,0,0,0.06)">网址：<span style="letter-spacing:-0.45px">www.tdxsoft.com</span></div>
<div class="wm" style="left:432px;top:-34px;color:rgba(0,0,0,0.06)">电话：<span style="font-size:22px;letter-spacing:0.15px">4006-6500-27</span></div>
<div class="wm" style="left:432px;top:-6px;color:rgba(0,0,0,0.06)">网址：<span style="letter-spacing:-0.45px">www.tdxsoft.com</span></div>
<div class="wm" style="left:703px;top:-34px;color:rgba(0,0,0,0.06)">电话：<span style="font-size:22px;letter-spacing:0.15px">4006-6500-27</span></div>
<div class="wm" style="left:703px;top:-6px;color:rgba(0,0,0,0.06)">网址：<span style="letter-spacing:-0.45px">www.tdxsoft.com</span></div>
<div class="wm" style="left:974px;top:-34px;color:rgba(0,0,0,0.06)">电话：<span style="font-size:22px;letter-spacing:0.15px">4006-6500-27</span></div>
<div class="wm" style="left:974px;top:-6px;color:rgba(0,0,0,0.06)">网址：<span style="letter-spacing:-0.45px">www.tdxsoft.com</span></div>
<div class="wm" style="left:1245px;top:-34px;color:rgba(0,0,0,0.06)">电话：<span style="font-size:22px;letter-spacing:0.15px">4006-6500-27</span></div>
<div class="wm" style="left:1245px;top:-6px;color:rgba(0,0,0,0.06)">网址：<span style="letter-spacing:-0.45px">www.tdxsoft.com</span></div>
<div class="wm" style="left:1516px;top:-34px;color:rgba(0,0,0,0.06)">电话：<span style="font-size:22px;letter-spacing:0.15px">4006-6500-27</span></div>
<div class="wm" style="left:1516px;top:-6px;color:rgba(0,0,0,0.06)">网址：<span style="letter-spacing:-0.45px">www.tdxsoft.com</span></div>
<div class="wm" style="left:-110px;top:76px;color:rgba(0,0,0,0.06)">电话：<span style="font-size:22px;letter-spacing:0.15px">4006-6500-27</span></div>
<div class="wm" style="left:-110px;top:104px;color:rgba(0,0,0,0.06)">网址：<span style="letter-spacing:-0.45px">www.tdxsoft.com</span></div>
<div class="wm" style="left:161px;top:76px;color:rgba(0,0,0,0.06)">电话：<span style="font-size:22px;letter-spacing:0.15px">4006-6500-27</span></div>
<div class="wm" style="left:161px;top:104px;color:rgba(0,0,0,0.06)">网址：<span style="letter-spacing:-0.45px">www.tdxsoft.com</span></div>
<div class="wm" style="left:432px;top:76px;color:rgba(0,0,0,0.06)">电话：<span style="font-size:22px;letter-spacing:0.15px">4006-6500-27</span></div>
<div class="wm" style="left:432px;top:104px;color:rgba(0,0,0,0.06)">网址：<span style="letter-spacing:-0.45px">www.tdxsoft.com</span></div>
<div class="wm" style="left:703px;top:76px;color:rgba(0,0,0,0.06)">电话：<span style="font-size:22px;letter-spacing:0.15px">4006-6500-27</span></div>
<div class="wm" style="left:703px;top:104px;color:rgba(0,0,0,0.06)">网址：<span style="letter-spacing:-0.45px">www.tdxsoft.com</span></div>
<div class="wm" style="left:974px;top:76px;color:rgba(0,0,0,0.06)">电话：<span style="font-size:22px;letter-spacing:0.15px">4006-6500-27</span></div>
<div class="wm" style="left:974px;top:104px;color:rgba(0,0,0,0.06)">网址：<span style="letter-spacing:-0.45px">www.tdxsoft.com</span></div>
<div class="wm" style="left:1245px;top:76px;color:rgba(0,0,0,0.06)">电话：<span style="font-size:22px;letter-spacing:0.15px">4006-6500-27</span></div>
<div class="wm" style="left:1245px;top:104px;color:rgba(0,0,0,0.06)">网址：<span style="letter-spacing:-0.45px">www.tdxsoft.com</span></div>
<div class="wm" style="left:1516px;top:76px;color:rgba(0,0,0,0.06)">电话：<span style="font-size:22px;letter-spacing:0.15px">4006-6500-27</span></div>
<div class="wm" style="left:1516px;top:104px;color:rgba(0,0,0,0.06)">网址：<span style="letter-spacing:-0.45px">www.tdxsoft.com</span></div>
<div class="wm" style="left:-110px;top:186px;color:rgba(0,0,0,0.06)">电话：<span style="font-size:22px;letter-spacing:0.15px">4006-6500-27</span></div>
<div class="wm" style="left:-110px;top:214px;color:rgba(0,0,0,0.06)">网址：<span style="letter-spacing:-0.45px">www.tdxsoft.com</span></div>
<div class="wm" style="left:161px;top:186px;color:rgba(0,0,0,0.06)">电话：<span style="font-size:22px;letter-spacing:0.15px">4006-6500-27</span></div>
<div class="wm" style="left:161px;top:214px;color:rgba(0,0,0,0.06)">网址：<span style="letter-spacing:-0.45px">www.tdxsoft.com</span></div>
<div class="wm" style="left:432px;top:186px;color:rgba(0,0,0,0.06)">电话：<span style="font-size:22px;letter-spacing:0.15px">4006-6500-27</span></div>
<div class="wm" style="left:432px;top:214px;color:rgba(0,0,0,0.06)">网址：<span style="letter-spacing:-0.45px">www.tdxsoft.com</span></div>
<div class="wm" style="left:703px;top:186px;color:rgba(0,0,0,0.06)">电话：<span style="font-size:22px;letter-spacing:0.15px">4006-6500-27</span></div>
<div class="wm" style="left:703px;top:214px;color:rgba(0,0,0,0.06)">网址：<span style="letter-spacing:-0.45px">www.tdxsoft.com</span></div>
<div class="wm" style="left:974px;top:186px;color:rgba(0,0,0,0.06)">电话：<span style="font-size:22px;letter-spacing:0.15px">4006-6500-27</span></div>
<div class="wm" style="left:974px;top:214px;color:rgba(0,0,0,0.06)">网址：<span style="letter-spacing:-0.45px">www.tdxsoft.com</span></div>
<div class="wm" style="left:1245px;top:186px;color:rgba(0,0,0,0.06)">电话：<span style="font-size:22px;letter-spacing:0.15px">4006-6500-27</span></div>
<div class="wm" style="left:1245px;top:214px;color:rgba(0,0,0,0.06)">网址：<span style="letter-spacing:-0.45px">www.tdxsoft.com</span></div>
<div class="wm" style="left:1516px;top:186px;color:rgba(0,0,0,0.06)">电话：<span style="font-size:22px;letter-spacing:0.15px">4006-6500-27</span></div>
<div class="wm" style="left:1516px;top:214px;color:rgba(0,0,0,0.06)">网址：<span style="letter-spacing:-0.45px">www.tdxsoft.com</span></div>
<div class="wm" style="left:-110px;top:296px;color:rgba(0,0,0,0.06)">电话：<span style="font-size:22px;letter-spacing:0.15px">4006-6500-27</span></div>
<div class="wm" style="left:-110px;top:324px;color:rgba(0,0,0,0.06)">网址：<span style="letter-spacing:-0.45px">www.tdxsoft.com</span></div>
<div class="wm" style="left:161px;top:296px;color:rgba(0,0,0,0.06)">电话：<span style="font-size:22px;letter-spacing:0.15px">4006-6500-27</span></div>
<div class="wm" style="left:161px;top:324px;color:rgba(0,0,0,0.06)">网址：<span style="letter-spacing:-0.45px">www.tdxsoft.com</span></div>
<div class="wm" style="left:432px;top:296px;color:rgba(0,0,0,0.06)">电话：<span style="font-size:22px;letter-spacing:0.15px">4006-6500-27</span></div>
<div class="wm" style="left:432px;top:324px;color:rgba(0,0,0,0.06)">网址：<span style="letter-spacing:-0.45px">www.tdxsoft.com</span></div>
<div class="wm" style="left:703px;top:296px;color:rgba(0,0,0,0.06)">电话：<span style="font-size:22px;letter-spacing:0.15px">4006-6500-27</span></div>
<div class="wm" style="left:703px;top:324px;color:rgba(0,0,0,0.06)">网址：<span style="letter-spacing:-0.45px">www.tdxsoft.com</span></div>
<div class="wm" style="left:974px;top:296px;color:rgba(0,0,0,0.06)">电话：<span style="font-size:22px;letter-spacing:0.15px">4006-6500-27</span></div>
<div class="wm" style="left:974px;top:324px;color:rgba(0,0,0,0.06)">网址：<span style="letter-spacing:-0.45px">www.tdxsoft.com</span></div>
<div class="wm" style="left:1245px;top:296px;color:rgba(0,0,0,0.06)">电话：<span style="font-size:22px;letter-spacing:0.15px">4006-6500-27</span></div>
<div class="wm" style="left:1245px;top:324px;color:rgba(0,0,0,0.06)">网址：<span style="letter-spacing:-0.45px">www.tdxsoft.com</span></div>
<div class="wm" style="left:1516px;top:296px;color:rgba(0,0,0,0.06)">电话：<span style="font-size:22px;letter-spacing:0.15px">4006-6500-27</span></div>
<div class="wm" style="left:1516px;top:324px;color:rgba(0,0,0,0.06)">网址：<span style="letter-spacing:-0.45px">www.tdxsoft.com</span></div>
<div class="wm" style="left:-110px;top:406px;color:rgba(0,0,0,0.06)">电话：<span style="font-size:22px;letter-spacing:0.15px">4006-6500-27</span></div>
<div class="wm" style="left:-110px;top:434px;color:rgba(0,0,0,0.06)">网址：<span style="letter-spacing:-0.45px">www.tdxsoft.com</span></div>
<div class="wm" style="left:161px;top:406px;color:rgba(0,0,0,0.06)">电话：<span style="font-size:22px;letter-spacing:0.15px">4006-6500-27</span></div>
<div class="wm" style="left:161px;top:434px;color:rgba(0,0,0,0.06)">网址：<span style="letter-spacing:-0.45px">www.tdxsoft.com</span></div>
<div class="wm" style="left:432px;top:406px;color:rgba(0,0,0,0.06)">电话：<span style="font-size:22px;letter-spacing:0.15px">4006-6500-27</span></div>
<div class="wm" style="left:432px;top:434px;color:rgba(0,0,0,0.06)">网址：<span style="letter-spacing:-0.45px">www.tdxsoft.com</span></div>
<div class="wm" style="left:703px;top:406px;color:rgba(0,0,0,0.06)">电话：<span style="font-size:22px;letter-spacing:0.15px">4006-6500-27</span></div>
<div class="wm" style="left:703px;top:434px;color:rgba(0,0,0,0.06)">网址：<span style="letter-spacing:-0.45px">www.tdxsoft.com</span></div>
<div class="wm" style="left:974px;top:406px;color:rgba(0,0,0,0.06)">电话：<span style="font-size:22px;letter-spacing:0.15px">4006-6500-27</span></div>
<div class="wm" style="left:974px;top:434px;color:rgba(0,0,0,0.06)">网址：<span style="letter-spacing:-0.45px">www.tdxsoft.com</span></div>
<div class="wm" style="left:1245px;top:406px;color:rgba(0,0,0,0.06)">电话：<span style="font-size:22px;letter-spacing:0.15px">4006-6500-27</span></div>
<div class="wm" style="left:1245px;top:434px;color:rgba(0,0,0,0.06)">网址：<span style="letter-spacing:-0.45px">www.tdxsoft.com</span></div>
<div class="wm" style="left:1516px;top:406px;color:rgba(0,0,0,0.06)">电话：<span style="font-size:22px;letter-spacing:0.15px">4006-6500-27</span></div>
<div class="wm" style="left:1516px;top:434px;color:rgba(0,0,0,0.06)">网址：<span style="letter-spacing:-0.45px">www.tdxsoft.com</span></div>
<div class="wm" style="left:-110px;top:516px;color:rgba(0,0,0,0.06)">电话：<span style="font-size:22px;letter-spacing:0.15px">4006-6500-27</span></div>
<div class="wm" style="left:-110px;top:544px;color:rgba(0,0,0,0.06)">网址：<span style="letter-spacing:-0.45px">www.tdxsoft.com</span></div>
<div class="wm" style="left:161px;top:516px;color:rgba(0,0,0,0.06)">电话：<span style="font-size:22px;letter-spacing:0.15px">4006-6500-27</span></div>
<div class="wm" style="left:161px;top:544px;color:rgba(0,0,0,0.06)">网址：<span style="letter-spacing:-0.45px">www.tdxsoft.com</span></div>
<div class="wm" style="left:432px;top:516px;color:rgba(0,0,0,0.06)">电话：<span style="font-size:22px;letter-spacing:0.15px">4006-6500-27</span></div>
<div class="wm" style="left:432px;top:544px;color:rgba(0,0,0,0.06)">网址：<span style="letter-spacing:-0.45px">www.tdxsoft.com</span></div>
<div class="wm" style="left:703px;top:516px;color:rgba(0,0,0,0.06)">电话：<span style="font-size:22px;letter-spacing:0.15px">4006-6500-27</span></div>
<div class="wm" style="left:703px;top:544px;color:rgba(0,0,0,0.06)">网址：<span style="letter-spacing:-0.45px">www.tdxsoft.com</span></div>
<div class="wm" style="left:974px;top:516px;color:rgba(0,0,0,0.06)">电话：<span style="font-size:22px;letter-spacing:0.15px">4006-6500-27</span></div>
<div class="wm" style="left:974px;top:544px;color:rgba(0,0,0,0.06)">网址：<span style="letter-spacing:-0.45px">www.tdxsoft.com</span></div>
<div class="wm" style="left:1245px;top:516px;color:rgba(0,0,0,0.06)">电话：<span style="font-size:22px;letter-spacing:0.15px">4006-6500-27</span></div>
<div class="wm" style="left:1245px;top:544px;color:rgba(0,0,0,0.06)">网址：<span style="letter-spacing:-0.45px">www.tdxsoft.com</span></div>
<div class="wm" style="left:1516px;top:516px;color:rgba(0,0,0,0.06)">电话：<span style="font-size:22px;letter-spacing:0.15px">4006-6500-27</span></div>
<div class="wm" style="left:1516px;top:544px;color:rgba(0,0,0,0.06)">网址：<span style="letter-spacing:-0.45px">www.tdxsoft.com</span></div>
<div class="wm" style="left:-110px;top:626px;color:rgba(0,0,0,0.06)">电话：<span style="font-size:22px;letter-spacing:0.15px">4006-6500-27</span></div>
<div class="wm" style="left:-110px;top:654px;color:rgba(0,0,0,0.06)">网址：<span style="letter-spacing:-0.45px">www.tdxsoft.com</span></div>
<div class="wm" style="left:161px;top:626px;color:rgba(0,0,0,0.06)">电话：<span style="font-size:22px;letter-spacing:0.15px">4006-6500-27</span></div>
<div class="wm" style="left:161px;top:654px;color:rgba(0,0,0,0.06)">网址：<span style="letter-spacing:-0.45px">www.tdxsoft.com</span></div>
<div class="wm" style="left:432px;top:626px;color:rgba(0,0,0,0.06)">电话：<span style="font-size:22px;letter-spacing:0.15px">4006-6500-27</span></div>
<div class="wm" style="left:432px;top:654px;color:rgba(0,0,0,0.06)">网址：<span style="letter-spacing:-0.45px">www.tdxsoft.com</span></div>
<div class="wm" style="left:703px;top:626px;color:rgba(0,0,0,0.06)">电话：<span style="font-size:22px;letter-spacing:0.15px">4006-6500-27</span></div>
<div class="wm" style="left:703px;top:654px;color:rgba(0,0,0,0.06)">网址：<span style="letter-spacing:-0.45px">www.tdxsoft.com</span></div>
<div class="wm" style="left:974px;top:626px;color:rgba(0,0,0,0.06)">电话：<span style="font-size:22px;letter-spacing:0.15px">4006-6500-27</span></div>
<div class="wm" style="left:974px;top:654px;color:rgba(0,0,0,0.06)">网址：<span style="letter-spacing:-0.45px">www.tdxsoft.com</span></div>
<div class="wm" style="left:1245px;top:626px;color:rgba(0,0,0,0.06)">电话：<span style="font-size:22px;letter-spacing:0.15px">4006-6500-27</span></div>
<div class="wm" style="left:1245px;top:654px;color:rgba(0,0,0,0.06)">网址：<span style="letter-spacing:-0.45px">www.tdxsoft.com</span></div>
<div class="wm" style="left:1516px;top:626px;color:rgba(0,0,0,0.06)">电话：<span style="font-size:22px;letter-spacing:0.15px">4006-6500-27</span></div>
<div class="wm" style="left:1516px;top:654px;color:rgba(0,0,0,0.06)">网址：<span style="letter-spacing:-0.45px">www.tdxsoft.com</span></div>
<div class="wm" style="left:-110px;top:736px;color:rgba(0,0,0,0.06)">电话：<span style="font-size:22px;letter-spacing:0.15px">4006-6500-27</span></div>
<div class="wm" style="left:-110px;top:764px;color:rgba(0,0,0,0.06)">网址：<span style="letter-spacing:-0.45px">www.tdxsoft.com</span></div>
<div class="wm" style="left:161px;top:736px;color:rgba(0,0,0,0.06)">电话：<span style="font-size:22px;letter-spacing:0.15px">4006-6500-27</span></div>
<div class="wm" style="left:161px;top:764px;color:rgba(0,0,0,0.06)">网址：<span style="letter-spacing:-0.45px">www.tdxsoft.com</span></div>
<div class="wm" style="left:432px;top:736px;color:rgba(0,0,0,0.06)">电话：<span style="font-size:22px;letter-spacing:0.15px">4006-6500-27</span></div>
<div class="wm" style="left:432px;top:764px;color:rgba(0,0,0,0.06)">网址：<span style="letter-spacing:-0.45px">www.tdxsoft.com</span></div>
<div class="wm" style="left:703px;top:736px;color:rgba(0,0,0,0.06)">电话：<span style="font-size:22px;letter-spacing:0.15px">4006-6500-27</span></div>
<div class="wm" style="left:703px;top:764px;color:rgba(0,0,0,0.06)">网址：<span style="letter-spacing:-0.45px">www.tdxsoft.com</span></div>
<div class="wm" style="left:974px;top:736px;color:rgba(0,0,0,0.06)">电话：<span style="font-size:22px;letter-spacing:0.15px">4006-6500-27</span></div>
<div class="wm" style="left:974px;top:764px;color:rgba(0,0,0,0.06)">网址：<span style="letter-spacing:-0.45px">www.tdxsoft.com</span></div>
<div class="wm" style="left:1245px;top:736px;color:rgba(0,0,0,0.06)">电话：<span style="font-size:22px;letter-spacing:0.15px">4006-6500-27</span></div>
<div class="wm" style="left:1245px;top:764px;color:rgba(0,0,0,0.06)">网址：<span style="letter-spacing:-0.45px">www.tdxsoft.com</span></div>
<div class="wm" style="left:1516px;top:736px;color:rgba(0,0,0,0.06)">电话：<span style="font-size:22px;letter-spacing:0.15px">4006-6500-27</span></div>
<div class="wm" style="left:1516px;top:764px;color:rgba(0,0,0,0.06)">网址：<span style="letter-spacing:-0.45px">www.tdxsoft.com</span></div>
</div>
</body></html>
